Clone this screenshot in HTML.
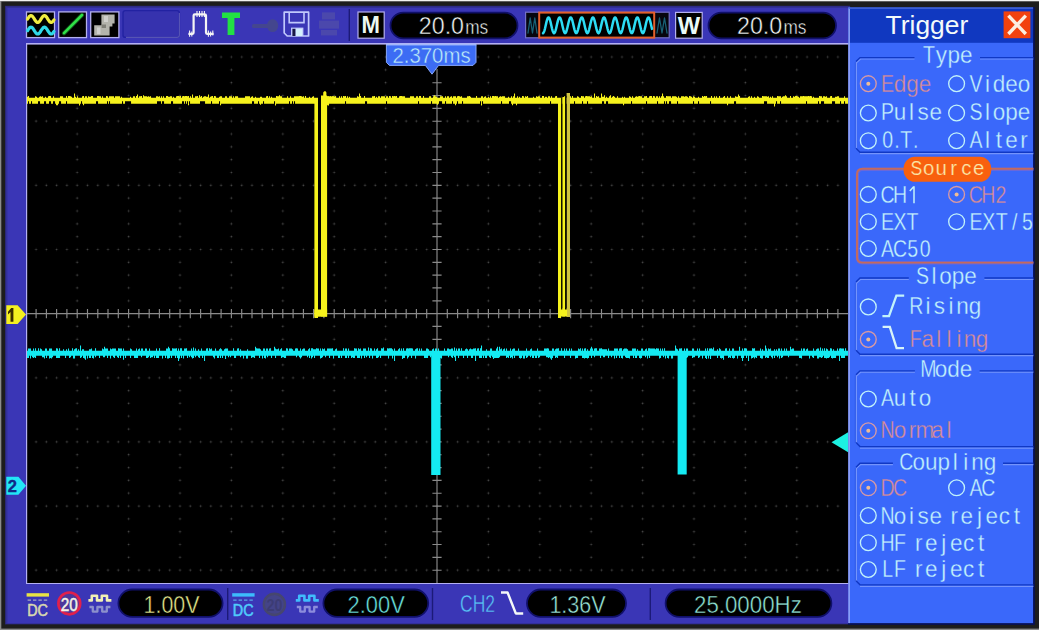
<!DOCTYPE html>
<html><head><meta charset="utf-8"><title>Oscilloscope</title>
<style>
html,body{margin:0;padding:0;background:#1d1d1d;}
body{width:1039px;height:630px;overflow:hidden;}
svg{display:block;}
text{font-family:"Liberation Sans",sans-serif;}
</style></head><body>
<svg width="1039" height="630" viewBox="0 0 1039 630">
<rect width="1039" height="630" fill="#1d1d1d"/>
<rect width="1039" height="1.3" fill="#f2f2f2"/>
<rect y="1" width="1.3" height="630" fill="#8c8c8c"/>
<rect y="628.6" width="1039" height="1.4" fill="#8a8a8a"/>
<rect x="5" y="5.8" width="845" height="618.6" fill="#2a2878"/>
<rect x="6.2" y="6.8" width="844" height="616.8" fill="#3a36b6"/>
<rect x="6.2" y="6.8" width="844" height="1.2" fill="#323098"/>
<rect x="6.2" y="6.8" width="1.2" height="616.8" fill="#323098"/>
<rect x="26" y="43" width="823" height="541" fill="#b4b0f4"/>
<rect x="27.2" y="44.6" width="821.4" height="538.4" fill="#000"/>
<path d="M34.4 57.0h3.4M36.1 55.3v3.4M44.7 57.0h3.4M46.4 55.3v3.4M54.9 57.0h3.4M56.6 55.3v3.4M65.2 57.0h3.4M66.9 55.3v3.4M75.5 57.0h3.4M77.2 55.3v3.4M85.8 57.0h3.4M87.5 55.3v3.4M96.1 57.0h3.4M97.8 55.3v3.4M106.3 57.0h3.4M108.0 55.3v3.4M116.6 57.0h3.4M118.3 55.3v3.4M126.9 57.0h3.4M128.6 55.3v3.4M137.2 57.0h3.4M138.9 55.3v3.4M147.5 57.0h3.4M149.2 55.3v3.4M157.7 57.0h3.4M159.4 55.3v3.4M168.0 57.0h3.4M169.7 55.3v3.4M178.3 57.0h3.4M180.0 55.3v3.4M188.6 57.0h3.4M190.3 55.3v3.4M198.9 57.0h3.4M200.6 55.3v3.4M209.1 57.0h3.4M210.8 55.3v3.4M219.4 57.0h3.4M221.1 55.3v3.4M229.7 57.0h3.4M231.4 55.3v3.4M240.0 57.0h3.4M241.7 55.3v3.4M250.3 57.0h3.4M252.0 55.3v3.4M260.5 57.0h3.4M262.2 55.3v3.4M270.8 57.0h3.4M272.5 55.3v3.4M281.1 57.0h3.4M282.8 55.3v3.4M291.4 57.0h3.4M293.1 55.3v3.4M301.7 57.0h3.4M303.4 55.3v3.4M311.9 57.0h3.4M313.6 55.3v3.4M322.2 57.0h3.4M323.9 55.3v3.4M332.5 57.0h3.4M334.2 55.3v3.4M342.8 57.0h3.4M344.5 55.3v3.4M353.1 57.0h3.4M354.8 55.3v3.4M363.3 57.0h3.4M365.0 55.3v3.4M373.6 57.0h3.4M375.3 55.3v3.4M383.9 57.0h3.4M385.6 55.3v3.4M394.2 57.0h3.4M395.9 55.3v3.4M404.5 57.0h3.4M406.2 55.3v3.4M414.7 57.0h3.4M416.4 55.3v3.4M425.0 57.0h3.4M426.7 55.3v3.4M435.3 57.0h3.4M437.0 55.3v3.4M445.6 57.0h3.4M447.3 55.3v3.4M455.9 57.0h3.4M457.6 55.3v3.4M466.1 57.0h3.4M467.8 55.3v3.4M476.4 57.0h3.4M478.1 55.3v3.4M486.7 57.0h3.4M488.4 55.3v3.4M497.0 57.0h3.4M498.7 55.3v3.4M507.3 57.0h3.4M509.0 55.3v3.4M517.5 57.0h3.4M519.2 55.3v3.4M527.8 57.0h3.4M529.5 55.3v3.4M538.1 57.0h3.4M539.8 55.3v3.4M548.4 57.0h3.4M550.1 55.3v3.4M558.7 57.0h3.4M560.4 55.3v3.4M568.9 57.0h3.4M570.6 55.3v3.4M579.2 57.0h3.4M580.9 55.3v3.4M589.5 57.0h3.4M591.2 55.3v3.4M599.8 57.0h3.4M601.5 55.3v3.4M610.1 57.0h3.4M611.8 55.3v3.4M620.3 57.0h3.4M622.0 55.3v3.4M630.6 57.0h3.4M632.3 55.3v3.4M640.9 57.0h3.4M642.6 55.3v3.4M651.2 57.0h3.4M652.9 55.3v3.4M661.5 57.0h3.4M663.2 55.3v3.4M671.7 57.0h3.4M673.4 55.3v3.4M682.0 57.0h3.4M683.7 55.3v3.4M692.3 57.0h3.4M694.0 55.3v3.4M702.6 57.0h3.4M704.3 55.3v3.4M712.9 57.0h3.4M714.6 55.3v3.4M723.1 57.0h3.4M724.8 55.3v3.4M733.4 57.0h3.4M735.1 55.3v3.4M743.7 57.0h3.4M745.4 55.3v3.4M754.0 57.0h3.4M755.7 55.3v3.4M764.3 57.0h3.4M766.0 55.3v3.4M774.5 57.0h3.4M776.2 55.3v3.4M784.8 57.0h3.4M786.5 55.3v3.4M795.1 57.0h3.4M796.8 55.3v3.4M805.4 57.0h3.4M807.1 55.3v3.4M815.7 57.0h3.4M817.4 55.3v3.4M825.9 57.0h3.4M827.6 55.3v3.4M836.2 57.0h3.4M837.9 55.3v3.4M34.4 121.2h3.4M36.1 119.5v3.4M44.7 121.2h3.4M46.4 119.5v3.4M54.9 121.2h3.4M56.6 119.5v3.4M65.2 121.2h3.4M66.9 119.5v3.4M75.5 121.2h3.4M77.2 119.5v3.4M85.8 121.2h3.4M87.5 119.5v3.4M96.1 121.2h3.4M97.8 119.5v3.4M106.3 121.2h3.4M108.0 119.5v3.4M116.6 121.2h3.4M118.3 119.5v3.4M126.9 121.2h3.4M128.6 119.5v3.4M137.2 121.2h3.4M138.9 119.5v3.4M147.5 121.2h3.4M149.2 119.5v3.4M157.7 121.2h3.4M159.4 119.5v3.4M168.0 121.2h3.4M169.7 119.5v3.4M178.3 121.2h3.4M180.0 119.5v3.4M188.6 121.2h3.4M190.3 119.5v3.4M198.9 121.2h3.4M200.6 119.5v3.4M209.1 121.2h3.4M210.8 119.5v3.4M219.4 121.2h3.4M221.1 119.5v3.4M229.7 121.2h3.4M231.4 119.5v3.4M240.0 121.2h3.4M241.7 119.5v3.4M250.3 121.2h3.4M252.0 119.5v3.4M260.5 121.2h3.4M262.2 119.5v3.4M270.8 121.2h3.4M272.5 119.5v3.4M281.1 121.2h3.4M282.8 119.5v3.4M291.4 121.2h3.4M293.1 119.5v3.4M301.7 121.2h3.4M303.4 119.5v3.4M311.9 121.2h3.4M313.6 119.5v3.4M322.2 121.2h3.4M323.9 119.5v3.4M332.5 121.2h3.4M334.2 119.5v3.4M342.8 121.2h3.4M344.5 119.5v3.4M353.1 121.2h3.4M354.8 119.5v3.4M363.3 121.2h3.4M365.0 119.5v3.4M373.6 121.2h3.4M375.3 119.5v3.4M383.9 121.2h3.4M385.6 119.5v3.4M394.2 121.2h3.4M395.9 119.5v3.4M404.5 121.2h3.4M406.2 119.5v3.4M414.7 121.2h3.4M416.4 119.5v3.4M425.0 121.2h3.4M426.7 119.5v3.4M435.3 121.2h3.4M437.0 119.5v3.4M445.6 121.2h3.4M447.3 119.5v3.4M455.9 121.2h3.4M457.6 119.5v3.4M466.1 121.2h3.4M467.8 119.5v3.4M476.4 121.2h3.4M478.1 119.5v3.4M486.7 121.2h3.4M488.4 119.5v3.4M497.0 121.2h3.4M498.7 119.5v3.4M507.3 121.2h3.4M509.0 119.5v3.4M517.5 121.2h3.4M519.2 119.5v3.4M527.8 121.2h3.4M529.5 119.5v3.4M538.1 121.2h3.4M539.8 119.5v3.4M548.4 121.2h3.4M550.1 119.5v3.4M558.7 121.2h3.4M560.4 119.5v3.4M568.9 121.2h3.4M570.6 119.5v3.4M579.2 121.2h3.4M580.9 119.5v3.4M589.5 121.2h3.4M591.2 119.5v3.4M599.8 121.2h3.4M601.5 119.5v3.4M610.1 121.2h3.4M611.8 119.5v3.4M620.3 121.2h3.4M622.0 119.5v3.4M630.6 121.2h3.4M632.3 119.5v3.4M640.9 121.2h3.4M642.6 119.5v3.4M651.2 121.2h3.4M652.9 119.5v3.4M661.5 121.2h3.4M663.2 119.5v3.4M671.7 121.2h3.4M673.4 119.5v3.4M682.0 121.2h3.4M683.7 119.5v3.4M692.3 121.2h3.4M694.0 119.5v3.4M702.6 121.2h3.4M704.3 119.5v3.4M712.9 121.2h3.4M714.6 119.5v3.4M723.1 121.2h3.4M724.8 119.5v3.4M733.4 121.2h3.4M735.1 119.5v3.4M743.7 121.2h3.4M745.4 119.5v3.4M754.0 121.2h3.4M755.7 119.5v3.4M764.3 121.2h3.4M766.0 119.5v3.4M774.5 121.2h3.4M776.2 119.5v3.4M784.8 121.2h3.4M786.5 119.5v3.4M795.1 121.2h3.4M796.8 119.5v3.4M805.4 121.2h3.4M807.1 119.5v3.4M815.7 121.2h3.4M817.4 119.5v3.4M825.9 121.2h3.4M827.6 119.5v3.4M836.2 121.2h3.4M837.9 119.5v3.4M34.4 185.3h3.4M36.1 183.6v3.4M44.7 185.3h3.4M46.4 183.6v3.4M54.9 185.3h3.4M56.6 183.6v3.4M65.2 185.3h3.4M66.9 183.6v3.4M75.5 185.3h3.4M77.2 183.6v3.4M85.8 185.3h3.4M87.5 183.6v3.4M96.1 185.3h3.4M97.8 183.6v3.4M106.3 185.3h3.4M108.0 183.6v3.4M116.6 185.3h3.4M118.3 183.6v3.4M126.9 185.3h3.4M128.6 183.6v3.4M137.2 185.3h3.4M138.9 183.6v3.4M147.5 185.3h3.4M149.2 183.6v3.4M157.7 185.3h3.4M159.4 183.6v3.4M168.0 185.3h3.4M169.7 183.6v3.4M178.3 185.3h3.4M180.0 183.6v3.4M188.6 185.3h3.4M190.3 183.6v3.4M198.9 185.3h3.4M200.6 183.6v3.4M209.1 185.3h3.4M210.8 183.6v3.4M219.4 185.3h3.4M221.1 183.6v3.4M229.7 185.3h3.4M231.4 183.6v3.4M240.0 185.3h3.4M241.7 183.6v3.4M250.3 185.3h3.4M252.0 183.6v3.4M260.5 185.3h3.4M262.2 183.6v3.4M270.8 185.3h3.4M272.5 183.6v3.4M281.1 185.3h3.4M282.8 183.6v3.4M291.4 185.3h3.4M293.1 183.6v3.4M301.7 185.3h3.4M303.4 183.6v3.4M311.9 185.3h3.4M313.6 183.6v3.4M322.2 185.3h3.4M323.9 183.6v3.4M332.5 185.3h3.4M334.2 183.6v3.4M342.8 185.3h3.4M344.5 183.6v3.4M353.1 185.3h3.4M354.8 183.6v3.4M363.3 185.3h3.4M365.0 183.6v3.4M373.6 185.3h3.4M375.3 183.6v3.4M383.9 185.3h3.4M385.6 183.6v3.4M394.2 185.3h3.4M395.9 183.6v3.4M404.5 185.3h3.4M406.2 183.6v3.4M414.7 185.3h3.4M416.4 183.6v3.4M425.0 185.3h3.4M426.7 183.6v3.4M435.3 185.3h3.4M437.0 183.6v3.4M445.6 185.3h3.4M447.3 183.6v3.4M455.9 185.3h3.4M457.6 183.6v3.4M466.1 185.3h3.4M467.8 183.6v3.4M476.4 185.3h3.4M478.1 183.6v3.4M486.7 185.3h3.4M488.4 183.6v3.4M497.0 185.3h3.4M498.7 183.6v3.4M507.3 185.3h3.4M509.0 183.6v3.4M517.5 185.3h3.4M519.2 183.6v3.4M527.8 185.3h3.4M529.5 183.6v3.4M538.1 185.3h3.4M539.8 183.6v3.4M548.4 185.3h3.4M550.1 183.6v3.4M558.7 185.3h3.4M560.4 183.6v3.4M568.9 185.3h3.4M570.6 183.6v3.4M579.2 185.3h3.4M580.9 183.6v3.4M589.5 185.3h3.4M591.2 183.6v3.4M599.8 185.3h3.4M601.5 183.6v3.4M610.1 185.3h3.4M611.8 183.6v3.4M620.3 185.3h3.4M622.0 183.6v3.4M630.6 185.3h3.4M632.3 183.6v3.4M640.9 185.3h3.4M642.6 183.6v3.4M651.2 185.3h3.4M652.9 183.6v3.4M661.5 185.3h3.4M663.2 183.6v3.4M671.7 185.3h3.4M673.4 183.6v3.4M682.0 185.3h3.4M683.7 183.6v3.4M692.3 185.3h3.4M694.0 183.6v3.4M702.6 185.3h3.4M704.3 183.6v3.4M712.9 185.3h3.4M714.6 183.6v3.4M723.1 185.3h3.4M724.8 183.6v3.4M733.4 185.3h3.4M735.1 183.6v3.4M743.7 185.3h3.4M745.4 183.6v3.4M754.0 185.3h3.4M755.7 183.6v3.4M764.3 185.3h3.4M766.0 183.6v3.4M774.5 185.3h3.4M776.2 183.6v3.4M784.8 185.3h3.4M786.5 183.6v3.4M795.1 185.3h3.4M796.8 183.6v3.4M805.4 185.3h3.4M807.1 183.6v3.4M815.7 185.3h3.4M817.4 183.6v3.4M825.9 185.3h3.4M827.6 183.6v3.4M836.2 185.3h3.4M837.9 183.6v3.4M34.4 249.5h3.4M36.1 247.8v3.4M44.7 249.5h3.4M46.4 247.8v3.4M54.9 249.5h3.4M56.6 247.8v3.4M65.2 249.5h3.4M66.9 247.8v3.4M75.5 249.5h3.4M77.2 247.8v3.4M85.8 249.5h3.4M87.5 247.8v3.4M96.1 249.5h3.4M97.8 247.8v3.4M106.3 249.5h3.4M108.0 247.8v3.4M116.6 249.5h3.4M118.3 247.8v3.4M126.9 249.5h3.4M128.6 247.8v3.4M137.2 249.5h3.4M138.9 247.8v3.4M147.5 249.5h3.4M149.2 247.8v3.4M157.7 249.5h3.4M159.4 247.8v3.4M168.0 249.5h3.4M169.7 247.8v3.4M178.3 249.5h3.4M180.0 247.8v3.4M188.6 249.5h3.4M190.3 247.8v3.4M198.9 249.5h3.4M200.6 247.8v3.4M209.1 249.5h3.4M210.8 247.8v3.4M219.4 249.5h3.4M221.1 247.8v3.4M229.7 249.5h3.4M231.4 247.8v3.4M240.0 249.5h3.4M241.7 247.8v3.4M250.3 249.5h3.4M252.0 247.8v3.4M260.5 249.5h3.4M262.2 247.8v3.4M270.8 249.5h3.4M272.5 247.8v3.4M281.1 249.5h3.4M282.8 247.8v3.4M291.4 249.5h3.4M293.1 247.8v3.4M301.7 249.5h3.4M303.4 247.8v3.4M311.9 249.5h3.4M313.6 247.8v3.4M322.2 249.5h3.4M323.9 247.8v3.4M332.5 249.5h3.4M334.2 247.8v3.4M342.8 249.5h3.4M344.5 247.8v3.4M353.1 249.5h3.4M354.8 247.8v3.4M363.3 249.5h3.4M365.0 247.8v3.4M373.6 249.5h3.4M375.3 247.8v3.4M383.9 249.5h3.4M385.6 247.8v3.4M394.2 249.5h3.4M395.9 247.8v3.4M404.5 249.5h3.4M406.2 247.8v3.4M414.7 249.5h3.4M416.4 247.8v3.4M425.0 249.5h3.4M426.7 247.8v3.4M435.3 249.5h3.4M437.0 247.8v3.4M445.6 249.5h3.4M447.3 247.8v3.4M455.9 249.5h3.4M457.6 247.8v3.4M466.1 249.5h3.4M467.8 247.8v3.4M476.4 249.5h3.4M478.1 247.8v3.4M486.7 249.5h3.4M488.4 247.8v3.4M497.0 249.5h3.4M498.7 247.8v3.4M507.3 249.5h3.4M509.0 247.8v3.4M517.5 249.5h3.4M519.2 247.8v3.4M527.8 249.5h3.4M529.5 247.8v3.4M538.1 249.5h3.4M539.8 247.8v3.4M548.4 249.5h3.4M550.1 247.8v3.4M558.7 249.5h3.4M560.4 247.8v3.4M568.9 249.5h3.4M570.6 247.8v3.4M579.2 249.5h3.4M580.9 247.8v3.4M589.5 249.5h3.4M591.2 247.8v3.4M599.8 249.5h3.4M601.5 247.8v3.4M610.1 249.5h3.4M611.8 247.8v3.4M620.3 249.5h3.4M622.0 247.8v3.4M630.6 249.5h3.4M632.3 247.8v3.4M640.9 249.5h3.4M642.6 247.8v3.4M651.2 249.5h3.4M652.9 247.8v3.4M661.5 249.5h3.4M663.2 247.8v3.4M671.7 249.5h3.4M673.4 247.8v3.4M682.0 249.5h3.4M683.7 247.8v3.4M692.3 249.5h3.4M694.0 247.8v3.4M702.6 249.5h3.4M704.3 247.8v3.4M712.9 249.5h3.4M714.6 247.8v3.4M723.1 249.5h3.4M724.8 247.8v3.4M733.4 249.5h3.4M735.1 247.8v3.4M743.7 249.5h3.4M745.4 247.8v3.4M754.0 249.5h3.4M755.7 247.8v3.4M764.3 249.5h3.4M766.0 247.8v3.4M774.5 249.5h3.4M776.2 247.8v3.4M784.8 249.5h3.4M786.5 247.8v3.4M795.1 249.5h3.4M796.8 247.8v3.4M805.4 249.5h3.4M807.1 247.8v3.4M815.7 249.5h3.4M817.4 247.8v3.4M825.9 249.5h3.4M827.6 247.8v3.4M836.2 249.5h3.4M837.9 247.8v3.4M34.4 377.8h3.4M36.1 376.1v3.4M44.7 377.8h3.4M46.4 376.1v3.4M54.9 377.8h3.4M56.6 376.1v3.4M65.2 377.8h3.4M66.9 376.1v3.4M75.5 377.8h3.4M77.2 376.1v3.4M85.8 377.8h3.4M87.5 376.1v3.4M96.1 377.8h3.4M97.8 376.1v3.4M106.3 377.8h3.4M108.0 376.1v3.4M116.6 377.8h3.4M118.3 376.1v3.4M126.9 377.8h3.4M128.6 376.1v3.4M137.2 377.8h3.4M138.9 376.1v3.4M147.5 377.8h3.4M149.2 376.1v3.4M157.7 377.8h3.4M159.4 376.1v3.4M168.0 377.8h3.4M169.7 376.1v3.4M178.3 377.8h3.4M180.0 376.1v3.4M188.6 377.8h3.4M190.3 376.1v3.4M198.9 377.8h3.4M200.6 376.1v3.4M209.1 377.8h3.4M210.8 376.1v3.4M219.4 377.8h3.4M221.1 376.1v3.4M229.7 377.8h3.4M231.4 376.1v3.4M240.0 377.8h3.4M241.7 376.1v3.4M250.3 377.8h3.4M252.0 376.1v3.4M260.5 377.8h3.4M262.2 376.1v3.4M270.8 377.8h3.4M272.5 376.1v3.4M281.1 377.8h3.4M282.8 376.1v3.4M291.4 377.8h3.4M293.1 376.1v3.4M301.7 377.8h3.4M303.4 376.1v3.4M311.9 377.8h3.4M313.6 376.1v3.4M322.2 377.8h3.4M323.9 376.1v3.4M332.5 377.8h3.4M334.2 376.1v3.4M342.8 377.8h3.4M344.5 376.1v3.4M353.1 377.8h3.4M354.8 376.1v3.4M363.3 377.8h3.4M365.0 376.1v3.4M373.6 377.8h3.4M375.3 376.1v3.4M383.9 377.8h3.4M385.6 376.1v3.4M394.2 377.8h3.4M395.9 376.1v3.4M404.5 377.8h3.4M406.2 376.1v3.4M414.7 377.8h3.4M416.4 376.1v3.4M425.0 377.8h3.4M426.7 376.1v3.4M435.3 377.8h3.4M437.0 376.1v3.4M445.6 377.8h3.4M447.3 376.1v3.4M455.9 377.8h3.4M457.6 376.1v3.4M466.1 377.8h3.4M467.8 376.1v3.4M476.4 377.8h3.4M478.1 376.1v3.4M486.7 377.8h3.4M488.4 376.1v3.4M497.0 377.8h3.4M498.7 376.1v3.4M507.3 377.8h3.4M509.0 376.1v3.4M517.5 377.8h3.4M519.2 376.1v3.4M527.8 377.8h3.4M529.5 376.1v3.4M538.1 377.8h3.4M539.8 376.1v3.4M548.4 377.8h3.4M550.1 376.1v3.4M558.7 377.8h3.4M560.4 376.1v3.4M568.9 377.8h3.4M570.6 376.1v3.4M579.2 377.8h3.4M580.9 376.1v3.4M589.5 377.8h3.4M591.2 376.1v3.4M599.8 377.8h3.4M601.5 376.1v3.4M610.1 377.8h3.4M611.8 376.1v3.4M620.3 377.8h3.4M622.0 376.1v3.4M630.6 377.8h3.4M632.3 376.1v3.4M640.9 377.8h3.4M642.6 376.1v3.4M651.2 377.8h3.4M652.9 376.1v3.4M661.5 377.8h3.4M663.2 376.1v3.4M671.7 377.8h3.4M673.4 376.1v3.4M682.0 377.8h3.4M683.7 376.1v3.4M692.3 377.8h3.4M694.0 376.1v3.4M702.6 377.8h3.4M704.3 376.1v3.4M712.9 377.8h3.4M714.6 376.1v3.4M723.1 377.8h3.4M724.8 376.1v3.4M733.4 377.8h3.4M735.1 376.1v3.4M743.7 377.8h3.4M745.4 376.1v3.4M754.0 377.8h3.4M755.7 376.1v3.4M764.3 377.8h3.4M766.0 376.1v3.4M774.5 377.8h3.4M776.2 376.1v3.4M784.8 377.8h3.4M786.5 376.1v3.4M795.1 377.8h3.4M796.8 376.1v3.4M805.4 377.8h3.4M807.1 376.1v3.4M815.7 377.8h3.4M817.4 376.1v3.4M825.9 377.8h3.4M827.6 376.1v3.4M836.2 377.8h3.4M837.9 376.1v3.4M34.4 441.9h3.4M36.1 440.2v3.4M44.7 441.9h3.4M46.4 440.2v3.4M54.9 441.9h3.4M56.6 440.2v3.4M65.2 441.9h3.4M66.9 440.2v3.4M75.5 441.9h3.4M77.2 440.2v3.4M85.8 441.9h3.4M87.5 440.2v3.4M96.1 441.9h3.4M97.8 440.2v3.4M106.3 441.9h3.4M108.0 440.2v3.4M116.6 441.9h3.4M118.3 440.2v3.4M126.9 441.9h3.4M128.6 440.2v3.4M137.2 441.9h3.4M138.9 440.2v3.4M147.5 441.9h3.4M149.2 440.2v3.4M157.7 441.9h3.4M159.4 440.2v3.4M168.0 441.9h3.4M169.7 440.2v3.4M178.3 441.9h3.4M180.0 440.2v3.4M188.6 441.9h3.4M190.3 440.2v3.4M198.9 441.9h3.4M200.6 440.2v3.4M209.1 441.9h3.4M210.8 440.2v3.4M219.4 441.9h3.4M221.1 440.2v3.4M229.7 441.9h3.4M231.4 440.2v3.4M240.0 441.9h3.4M241.7 440.2v3.4M250.3 441.9h3.4M252.0 440.2v3.4M260.5 441.9h3.4M262.2 440.2v3.4M270.8 441.9h3.4M272.5 440.2v3.4M281.1 441.9h3.4M282.8 440.2v3.4M291.4 441.9h3.4M293.1 440.2v3.4M301.7 441.9h3.4M303.4 440.2v3.4M311.9 441.9h3.4M313.6 440.2v3.4M322.2 441.9h3.4M323.9 440.2v3.4M332.5 441.9h3.4M334.2 440.2v3.4M342.8 441.9h3.4M344.5 440.2v3.4M353.1 441.9h3.4M354.8 440.2v3.4M363.3 441.9h3.4M365.0 440.2v3.4M373.6 441.9h3.4M375.3 440.2v3.4M383.9 441.9h3.4M385.6 440.2v3.4M394.2 441.9h3.4M395.9 440.2v3.4M404.5 441.9h3.4M406.2 440.2v3.4M414.7 441.9h3.4M416.4 440.2v3.4M425.0 441.9h3.4M426.7 440.2v3.4M435.3 441.9h3.4M437.0 440.2v3.4M445.6 441.9h3.4M447.3 440.2v3.4M455.9 441.9h3.4M457.6 440.2v3.4M466.1 441.9h3.4M467.8 440.2v3.4M476.4 441.9h3.4M478.1 440.2v3.4M486.7 441.9h3.4M488.4 440.2v3.4M497.0 441.9h3.4M498.7 440.2v3.4M507.3 441.9h3.4M509.0 440.2v3.4M517.5 441.9h3.4M519.2 440.2v3.4M527.8 441.9h3.4M529.5 440.2v3.4M538.1 441.9h3.4M539.8 440.2v3.4M548.4 441.9h3.4M550.1 440.2v3.4M558.7 441.9h3.4M560.4 440.2v3.4M568.9 441.9h3.4M570.6 440.2v3.4M579.2 441.9h3.4M580.9 440.2v3.4M589.5 441.9h3.4M591.2 440.2v3.4M599.8 441.9h3.4M601.5 440.2v3.4M610.1 441.9h3.4M611.8 440.2v3.4M620.3 441.9h3.4M622.0 440.2v3.4M630.6 441.9h3.4M632.3 440.2v3.4M640.9 441.9h3.4M642.6 440.2v3.4M651.2 441.9h3.4M652.9 440.2v3.4M661.5 441.9h3.4M663.2 440.2v3.4M671.7 441.9h3.4M673.4 440.2v3.4M682.0 441.9h3.4M683.7 440.2v3.4M692.3 441.9h3.4M694.0 440.2v3.4M702.6 441.9h3.4M704.3 440.2v3.4M712.9 441.9h3.4M714.6 440.2v3.4M723.1 441.9h3.4M724.8 440.2v3.4M733.4 441.9h3.4M735.1 440.2v3.4M743.7 441.9h3.4M745.4 440.2v3.4M754.0 441.9h3.4M755.7 440.2v3.4M764.3 441.9h3.4M766.0 440.2v3.4M774.5 441.9h3.4M776.2 440.2v3.4M784.8 441.9h3.4M786.5 440.2v3.4M795.1 441.9h3.4M796.8 440.2v3.4M805.4 441.9h3.4M807.1 440.2v3.4M815.7 441.9h3.4M817.4 440.2v3.4M825.9 441.9h3.4M827.6 440.2v3.4M836.2 441.9h3.4M837.9 440.2v3.4M34.4 506.1h3.4M36.1 504.4v3.4M44.7 506.1h3.4M46.4 504.4v3.4M54.9 506.1h3.4M56.6 504.4v3.4M65.2 506.1h3.4M66.9 504.4v3.4M75.5 506.1h3.4M77.2 504.4v3.4M85.8 506.1h3.4M87.5 504.4v3.4M96.1 506.1h3.4M97.8 504.4v3.4M106.3 506.1h3.4M108.0 504.4v3.4M116.6 506.1h3.4M118.3 504.4v3.4M126.9 506.1h3.4M128.6 504.4v3.4M137.2 506.1h3.4M138.9 504.4v3.4M147.5 506.1h3.4M149.2 504.4v3.4M157.7 506.1h3.4M159.4 504.4v3.4M168.0 506.1h3.4M169.7 504.4v3.4M178.3 506.1h3.4M180.0 504.4v3.4M188.6 506.1h3.4M190.3 504.4v3.4M198.9 506.1h3.4M200.6 504.4v3.4M209.1 506.1h3.4M210.8 504.4v3.4M219.4 506.1h3.4M221.1 504.4v3.4M229.7 506.1h3.4M231.4 504.4v3.4M240.0 506.1h3.4M241.7 504.4v3.4M250.3 506.1h3.4M252.0 504.4v3.4M260.5 506.1h3.4M262.2 504.4v3.4M270.8 506.1h3.4M272.5 504.4v3.4M281.1 506.1h3.4M282.8 504.4v3.4M291.4 506.1h3.4M293.1 504.4v3.4M301.7 506.1h3.4M303.4 504.4v3.4M311.9 506.1h3.4M313.6 504.4v3.4M322.2 506.1h3.4M323.9 504.4v3.4M332.5 506.1h3.4M334.2 504.4v3.4M342.8 506.1h3.4M344.5 504.4v3.4M353.1 506.1h3.4M354.8 504.4v3.4M363.3 506.1h3.4M365.0 504.4v3.4M373.6 506.1h3.4M375.3 504.4v3.4M383.9 506.1h3.4M385.6 504.4v3.4M394.2 506.1h3.4M395.9 504.4v3.4M404.5 506.1h3.4M406.2 504.4v3.4M414.7 506.1h3.4M416.4 504.4v3.4M425.0 506.1h3.4M426.7 504.4v3.4M435.3 506.1h3.4M437.0 504.4v3.4M445.6 506.1h3.4M447.3 504.4v3.4M455.9 506.1h3.4M457.6 504.4v3.4M466.1 506.1h3.4M467.8 504.4v3.4M476.4 506.1h3.4M478.1 504.4v3.4M486.7 506.1h3.4M488.4 504.4v3.4M497.0 506.1h3.4M498.7 504.4v3.4M507.3 506.1h3.4M509.0 504.4v3.4M517.5 506.1h3.4M519.2 504.4v3.4M527.8 506.1h3.4M529.5 504.4v3.4M538.1 506.1h3.4M539.8 504.4v3.4M548.4 506.1h3.4M550.1 504.4v3.4M558.7 506.1h3.4M560.4 504.4v3.4M568.9 506.1h3.4M570.6 504.4v3.4M579.2 506.1h3.4M580.9 504.4v3.4M589.5 506.1h3.4M591.2 504.4v3.4M599.8 506.1h3.4M601.5 504.4v3.4M610.1 506.1h3.4M611.8 504.4v3.4M620.3 506.1h3.4M622.0 504.4v3.4M630.6 506.1h3.4M632.3 504.4v3.4M640.9 506.1h3.4M642.6 504.4v3.4M651.2 506.1h3.4M652.9 504.4v3.4M661.5 506.1h3.4M663.2 504.4v3.4M671.7 506.1h3.4M673.4 504.4v3.4M682.0 506.1h3.4M683.7 504.4v3.4M692.3 506.1h3.4M694.0 504.4v3.4M702.6 506.1h3.4M704.3 504.4v3.4M712.9 506.1h3.4M714.6 504.4v3.4M723.1 506.1h3.4M724.8 504.4v3.4M733.4 506.1h3.4M735.1 504.4v3.4M743.7 506.1h3.4M745.4 504.4v3.4M754.0 506.1h3.4M755.7 504.4v3.4M764.3 506.1h3.4M766.0 504.4v3.4M774.5 506.1h3.4M776.2 504.4v3.4M784.8 506.1h3.4M786.5 504.4v3.4M795.1 506.1h3.4M796.8 504.4v3.4M805.4 506.1h3.4M807.1 504.4v3.4M815.7 506.1h3.4M817.4 504.4v3.4M825.9 506.1h3.4M827.6 504.4v3.4M836.2 506.1h3.4M837.9 504.4v3.4M34.4 570.2h3.4M36.1 568.5v3.4M44.7 570.2h3.4M46.4 568.5v3.4M54.9 570.2h3.4M56.6 568.5v3.4M65.2 570.2h3.4M66.9 568.5v3.4M75.5 570.2h3.4M77.2 568.5v3.4M85.8 570.2h3.4M87.5 568.5v3.4M96.1 570.2h3.4M97.8 568.5v3.4M106.3 570.2h3.4M108.0 568.5v3.4M116.6 570.2h3.4M118.3 568.5v3.4M126.9 570.2h3.4M128.6 568.5v3.4M137.2 570.2h3.4M138.9 568.5v3.4M147.5 570.2h3.4M149.2 568.5v3.4M157.7 570.2h3.4M159.4 568.5v3.4M168.0 570.2h3.4M169.7 568.5v3.4M178.3 570.2h3.4M180.0 568.5v3.4M188.6 570.2h3.4M190.3 568.5v3.4M198.9 570.2h3.4M200.6 568.5v3.4M209.1 570.2h3.4M210.8 568.5v3.4M219.4 570.2h3.4M221.1 568.5v3.4M229.7 570.2h3.4M231.4 568.5v3.4M240.0 570.2h3.4M241.7 568.5v3.4M250.3 570.2h3.4M252.0 568.5v3.4M260.5 570.2h3.4M262.2 568.5v3.4M270.8 570.2h3.4M272.5 568.5v3.4M281.1 570.2h3.4M282.8 568.5v3.4M291.4 570.2h3.4M293.1 568.5v3.4M301.7 570.2h3.4M303.4 568.5v3.4M311.9 570.2h3.4M313.6 568.5v3.4M322.2 570.2h3.4M323.9 568.5v3.4M332.5 570.2h3.4M334.2 568.5v3.4M342.8 570.2h3.4M344.5 568.5v3.4M353.1 570.2h3.4M354.8 568.5v3.4M363.3 570.2h3.4M365.0 568.5v3.4M373.6 570.2h3.4M375.3 568.5v3.4M383.9 570.2h3.4M385.6 568.5v3.4M394.2 570.2h3.4M395.9 568.5v3.4M404.5 570.2h3.4M406.2 568.5v3.4M414.7 570.2h3.4M416.4 568.5v3.4M425.0 570.2h3.4M426.7 568.5v3.4M435.3 570.2h3.4M437.0 568.5v3.4M445.6 570.2h3.4M447.3 568.5v3.4M455.9 570.2h3.4M457.6 568.5v3.4M466.1 570.2h3.4M467.8 568.5v3.4M476.4 570.2h3.4M478.1 568.5v3.4M486.7 570.2h3.4M488.4 568.5v3.4M497.0 570.2h3.4M498.7 568.5v3.4M507.3 570.2h3.4M509.0 568.5v3.4M517.5 570.2h3.4M519.2 568.5v3.4M527.8 570.2h3.4M529.5 568.5v3.4M538.1 570.2h3.4M539.8 568.5v3.4M548.4 570.2h3.4M550.1 568.5v3.4M558.7 570.2h3.4M560.4 568.5v3.4M568.9 570.2h3.4M570.6 568.5v3.4M579.2 570.2h3.4M580.9 568.5v3.4M589.5 570.2h3.4M591.2 568.5v3.4M599.8 570.2h3.4M601.5 568.5v3.4M610.1 570.2h3.4M611.8 568.5v3.4M620.3 570.2h3.4M622.0 568.5v3.4M630.6 570.2h3.4M632.3 568.5v3.4M640.9 570.2h3.4M642.6 568.5v3.4M651.2 570.2h3.4M652.9 568.5v3.4M661.5 570.2h3.4M663.2 568.5v3.4M671.7 570.2h3.4M673.4 568.5v3.4M682.0 570.2h3.4M683.7 568.5v3.4M692.3 570.2h3.4M694.0 568.5v3.4M702.6 570.2h3.4M704.3 568.5v3.4M712.9 570.2h3.4M714.6 568.5v3.4M723.1 570.2h3.4M724.8 568.5v3.4M733.4 570.2h3.4M735.1 568.5v3.4M743.7 570.2h3.4M745.4 568.5v3.4M754.0 570.2h3.4M755.7 568.5v3.4M764.3 570.2h3.4M766.0 568.5v3.4M774.5 570.2h3.4M776.2 568.5v3.4M784.8 570.2h3.4M786.5 568.5v3.4M795.1 570.2h3.4M796.8 568.5v3.4M805.4 570.2h3.4M807.1 568.5v3.4M815.7 570.2h3.4M817.4 568.5v3.4M825.9 570.2h3.4M827.6 568.5v3.4M836.2 570.2h3.4M837.9 568.5v3.4M75.5 69.8h3.4M77.2 68.1v3.4M75.5 82.7h3.4M77.2 81.0v3.4M75.5 95.5h3.4M77.2 93.8v3.4M75.5 108.3h3.4M77.2 106.6v3.4M75.5 134.0h3.4M77.2 132.3v3.4M75.5 146.8h3.4M77.2 145.1v3.4M75.5 159.6h3.4M77.2 157.9v3.4M75.5 172.5h3.4M77.2 170.8v3.4M75.5 198.1h3.4M77.2 196.4v3.4M75.5 211.0h3.4M77.2 209.3v3.4M75.5 223.8h3.4M77.2 222.1v3.4M75.5 236.6h3.4M77.2 234.9v3.4M75.5 262.3h3.4M77.2 260.6v3.4M75.5 275.1h3.4M77.2 273.4v3.4M75.5 287.9h3.4M77.2 286.2v3.4M75.5 300.8h3.4M77.2 299.1v3.4M75.5 326.4h3.4M77.2 324.7v3.4M75.5 339.3h3.4M77.2 337.6v3.4M75.5 352.1h3.4M77.2 350.4v3.4M75.5 364.9h3.4M77.2 363.2v3.4M75.5 390.6h3.4M77.2 388.9v3.4M75.5 403.4h3.4M77.2 401.7v3.4M75.5 416.2h3.4M77.2 414.5v3.4M75.5 429.1h3.4M77.2 427.4v3.4M75.5 454.7h3.4M77.2 453.0v3.4M75.5 467.6h3.4M77.2 465.9v3.4M75.5 480.4h3.4M77.2 478.7v3.4M75.5 493.2h3.4M77.2 491.5v3.4M75.5 518.9h3.4M77.2 517.2v3.4M75.5 531.7h3.4M77.2 530.0v3.4M75.5 544.5h3.4M77.2 542.8v3.4M75.5 557.4h3.4M77.2 555.7v3.4M126.9 69.8h3.4M128.6 68.1v3.4M126.9 82.7h3.4M128.6 81.0v3.4M126.9 95.5h3.4M128.6 93.8v3.4M126.9 108.3h3.4M128.6 106.6v3.4M126.9 134.0h3.4M128.6 132.3v3.4M126.9 146.8h3.4M128.6 145.1v3.4M126.9 159.6h3.4M128.6 157.9v3.4M126.9 172.5h3.4M128.6 170.8v3.4M126.9 198.1h3.4M128.6 196.4v3.4M126.9 211.0h3.4M128.6 209.3v3.4M126.9 223.8h3.4M128.6 222.1v3.4M126.9 236.6h3.4M128.6 234.9v3.4M126.9 262.3h3.4M128.6 260.6v3.4M126.9 275.1h3.4M128.6 273.4v3.4M126.9 287.9h3.4M128.6 286.2v3.4M126.9 300.8h3.4M128.6 299.1v3.4M126.9 326.4h3.4M128.6 324.7v3.4M126.9 339.3h3.4M128.6 337.6v3.4M126.9 352.1h3.4M128.6 350.4v3.4M126.9 364.9h3.4M128.6 363.2v3.4M126.9 390.6h3.4M128.6 388.9v3.4M126.9 403.4h3.4M128.6 401.7v3.4M126.9 416.2h3.4M128.6 414.5v3.4M126.9 429.1h3.4M128.6 427.4v3.4M126.9 454.7h3.4M128.6 453.0v3.4M126.9 467.6h3.4M128.6 465.9v3.4M126.9 480.4h3.4M128.6 478.7v3.4M126.9 493.2h3.4M128.6 491.5v3.4M126.9 518.9h3.4M128.6 517.2v3.4M126.9 531.7h3.4M128.6 530.0v3.4M126.9 544.5h3.4M128.6 542.8v3.4M126.9 557.4h3.4M128.6 555.7v3.4M178.3 69.8h3.4M180.0 68.1v3.4M178.3 82.7h3.4M180.0 81.0v3.4M178.3 95.5h3.4M180.0 93.8v3.4M178.3 108.3h3.4M180.0 106.6v3.4M178.3 134.0h3.4M180.0 132.3v3.4M178.3 146.8h3.4M180.0 145.1v3.4M178.3 159.6h3.4M180.0 157.9v3.4M178.3 172.5h3.4M180.0 170.8v3.4M178.3 198.1h3.4M180.0 196.4v3.4M178.3 211.0h3.4M180.0 209.3v3.4M178.3 223.8h3.4M180.0 222.1v3.4M178.3 236.6h3.4M180.0 234.9v3.4M178.3 262.3h3.4M180.0 260.6v3.4M178.3 275.1h3.4M180.0 273.4v3.4M178.3 287.9h3.4M180.0 286.2v3.4M178.3 300.8h3.4M180.0 299.1v3.4M178.3 326.4h3.4M180.0 324.7v3.4M178.3 339.3h3.4M180.0 337.6v3.4M178.3 352.1h3.4M180.0 350.4v3.4M178.3 364.9h3.4M180.0 363.2v3.4M178.3 390.6h3.4M180.0 388.9v3.4M178.3 403.4h3.4M180.0 401.7v3.4M178.3 416.2h3.4M180.0 414.5v3.4M178.3 429.1h3.4M180.0 427.4v3.4M178.3 454.7h3.4M180.0 453.0v3.4M178.3 467.6h3.4M180.0 465.9v3.4M178.3 480.4h3.4M180.0 478.7v3.4M178.3 493.2h3.4M180.0 491.5v3.4M178.3 518.9h3.4M180.0 517.2v3.4M178.3 531.7h3.4M180.0 530.0v3.4M178.3 544.5h3.4M180.0 542.8v3.4M178.3 557.4h3.4M180.0 555.7v3.4M229.7 69.8h3.4M231.4 68.1v3.4M229.7 82.7h3.4M231.4 81.0v3.4M229.7 95.5h3.4M231.4 93.8v3.4M229.7 108.3h3.4M231.4 106.6v3.4M229.7 134.0h3.4M231.4 132.3v3.4M229.7 146.8h3.4M231.4 145.1v3.4M229.7 159.6h3.4M231.4 157.9v3.4M229.7 172.5h3.4M231.4 170.8v3.4M229.7 198.1h3.4M231.4 196.4v3.4M229.7 211.0h3.4M231.4 209.3v3.4M229.7 223.8h3.4M231.4 222.1v3.4M229.7 236.6h3.4M231.4 234.9v3.4M229.7 262.3h3.4M231.4 260.6v3.4M229.7 275.1h3.4M231.4 273.4v3.4M229.7 287.9h3.4M231.4 286.2v3.4M229.7 300.8h3.4M231.4 299.1v3.4M229.7 326.4h3.4M231.4 324.7v3.4M229.7 339.3h3.4M231.4 337.6v3.4M229.7 352.1h3.4M231.4 350.4v3.4M229.7 364.9h3.4M231.4 363.2v3.4M229.7 390.6h3.4M231.4 388.9v3.4M229.7 403.4h3.4M231.4 401.7v3.4M229.7 416.2h3.4M231.4 414.5v3.4M229.7 429.1h3.4M231.4 427.4v3.4M229.7 454.7h3.4M231.4 453.0v3.4M229.7 467.6h3.4M231.4 465.9v3.4M229.7 480.4h3.4M231.4 478.7v3.4M229.7 493.2h3.4M231.4 491.5v3.4M229.7 518.9h3.4M231.4 517.2v3.4M229.7 531.7h3.4M231.4 530.0v3.4M229.7 544.5h3.4M231.4 542.8v3.4M229.7 557.4h3.4M231.4 555.7v3.4M281.1 69.8h3.4M282.8 68.1v3.4M281.1 82.7h3.4M282.8 81.0v3.4M281.1 95.5h3.4M282.8 93.8v3.4M281.1 108.3h3.4M282.8 106.6v3.4M281.1 134.0h3.4M282.8 132.3v3.4M281.1 146.8h3.4M282.8 145.1v3.4M281.1 159.6h3.4M282.8 157.9v3.4M281.1 172.5h3.4M282.8 170.8v3.4M281.1 198.1h3.4M282.8 196.4v3.4M281.1 211.0h3.4M282.8 209.3v3.4M281.1 223.8h3.4M282.8 222.1v3.4M281.1 236.6h3.4M282.8 234.9v3.4M281.1 262.3h3.4M282.8 260.6v3.4M281.1 275.1h3.4M282.8 273.4v3.4M281.1 287.9h3.4M282.8 286.2v3.4M281.1 300.8h3.4M282.8 299.1v3.4M281.1 326.4h3.4M282.8 324.7v3.4M281.1 339.3h3.4M282.8 337.6v3.4M281.1 352.1h3.4M282.8 350.4v3.4M281.1 364.9h3.4M282.8 363.2v3.4M281.1 390.6h3.4M282.8 388.9v3.4M281.1 403.4h3.4M282.8 401.7v3.4M281.1 416.2h3.4M282.8 414.5v3.4M281.1 429.1h3.4M282.8 427.4v3.4M281.1 454.7h3.4M282.8 453.0v3.4M281.1 467.6h3.4M282.8 465.9v3.4M281.1 480.4h3.4M282.8 478.7v3.4M281.1 493.2h3.4M282.8 491.5v3.4M281.1 518.9h3.4M282.8 517.2v3.4M281.1 531.7h3.4M282.8 530.0v3.4M281.1 544.5h3.4M282.8 542.8v3.4M281.1 557.4h3.4M282.8 555.7v3.4M332.5 69.8h3.4M334.2 68.1v3.4M332.5 82.7h3.4M334.2 81.0v3.4M332.5 95.5h3.4M334.2 93.8v3.4M332.5 108.3h3.4M334.2 106.6v3.4M332.5 134.0h3.4M334.2 132.3v3.4M332.5 146.8h3.4M334.2 145.1v3.4M332.5 159.6h3.4M334.2 157.9v3.4M332.5 172.5h3.4M334.2 170.8v3.4M332.5 198.1h3.4M334.2 196.4v3.4M332.5 211.0h3.4M334.2 209.3v3.4M332.5 223.8h3.4M334.2 222.1v3.4M332.5 236.6h3.4M334.2 234.9v3.4M332.5 262.3h3.4M334.2 260.6v3.4M332.5 275.1h3.4M334.2 273.4v3.4M332.5 287.9h3.4M334.2 286.2v3.4M332.5 300.8h3.4M334.2 299.1v3.4M332.5 326.4h3.4M334.2 324.7v3.4M332.5 339.3h3.4M334.2 337.6v3.4M332.5 352.1h3.4M334.2 350.4v3.4M332.5 364.9h3.4M334.2 363.2v3.4M332.5 390.6h3.4M334.2 388.9v3.4M332.5 403.4h3.4M334.2 401.7v3.4M332.5 416.2h3.4M334.2 414.5v3.4M332.5 429.1h3.4M334.2 427.4v3.4M332.5 454.7h3.4M334.2 453.0v3.4M332.5 467.6h3.4M334.2 465.9v3.4M332.5 480.4h3.4M334.2 478.7v3.4M332.5 493.2h3.4M334.2 491.5v3.4M332.5 518.9h3.4M334.2 517.2v3.4M332.5 531.7h3.4M334.2 530.0v3.4M332.5 544.5h3.4M334.2 542.8v3.4M332.5 557.4h3.4M334.2 555.7v3.4M383.9 69.8h3.4M385.6 68.1v3.4M383.9 82.7h3.4M385.6 81.0v3.4M383.9 95.5h3.4M385.6 93.8v3.4M383.9 108.3h3.4M385.6 106.6v3.4M383.9 134.0h3.4M385.6 132.3v3.4M383.9 146.8h3.4M385.6 145.1v3.4M383.9 159.6h3.4M385.6 157.9v3.4M383.9 172.5h3.4M385.6 170.8v3.4M383.9 198.1h3.4M385.6 196.4v3.4M383.9 211.0h3.4M385.6 209.3v3.4M383.9 223.8h3.4M385.6 222.1v3.4M383.9 236.6h3.4M385.6 234.9v3.4M383.9 262.3h3.4M385.6 260.6v3.4M383.9 275.1h3.4M385.6 273.4v3.4M383.9 287.9h3.4M385.6 286.2v3.4M383.9 300.8h3.4M385.6 299.1v3.4M383.9 326.4h3.4M385.6 324.7v3.4M383.9 339.3h3.4M385.6 337.6v3.4M383.9 352.1h3.4M385.6 350.4v3.4M383.9 364.9h3.4M385.6 363.2v3.4M383.9 390.6h3.4M385.6 388.9v3.4M383.9 403.4h3.4M385.6 401.7v3.4M383.9 416.2h3.4M385.6 414.5v3.4M383.9 429.1h3.4M385.6 427.4v3.4M383.9 454.7h3.4M385.6 453.0v3.4M383.9 467.6h3.4M385.6 465.9v3.4M383.9 480.4h3.4M385.6 478.7v3.4M383.9 493.2h3.4M385.6 491.5v3.4M383.9 518.9h3.4M385.6 517.2v3.4M383.9 531.7h3.4M385.6 530.0v3.4M383.9 544.5h3.4M385.6 542.8v3.4M383.9 557.4h3.4M385.6 555.7v3.4M486.7 69.8h3.4M488.4 68.1v3.4M486.7 82.7h3.4M488.4 81.0v3.4M486.7 95.5h3.4M488.4 93.8v3.4M486.7 108.3h3.4M488.4 106.6v3.4M486.7 134.0h3.4M488.4 132.3v3.4M486.7 146.8h3.4M488.4 145.1v3.4M486.7 159.6h3.4M488.4 157.9v3.4M486.7 172.5h3.4M488.4 170.8v3.4M486.7 198.1h3.4M488.4 196.4v3.4M486.7 211.0h3.4M488.4 209.3v3.4M486.7 223.8h3.4M488.4 222.1v3.4M486.7 236.6h3.4M488.4 234.9v3.4M486.7 262.3h3.4M488.4 260.6v3.4M486.7 275.1h3.4M488.4 273.4v3.4M486.7 287.9h3.4M488.4 286.2v3.4M486.7 300.8h3.4M488.4 299.1v3.4M486.7 326.4h3.4M488.4 324.7v3.4M486.7 339.3h3.4M488.4 337.6v3.4M486.7 352.1h3.4M488.4 350.4v3.4M486.7 364.9h3.4M488.4 363.2v3.4M486.7 390.6h3.4M488.4 388.9v3.4M486.7 403.4h3.4M488.4 401.7v3.4M486.7 416.2h3.4M488.4 414.5v3.4M486.7 429.1h3.4M488.4 427.4v3.4M486.7 454.7h3.4M488.4 453.0v3.4M486.7 467.6h3.4M488.4 465.9v3.4M486.7 480.4h3.4M488.4 478.7v3.4M486.7 493.2h3.4M488.4 491.5v3.4M486.7 518.9h3.4M488.4 517.2v3.4M486.7 531.7h3.4M488.4 530.0v3.4M486.7 544.5h3.4M488.4 542.8v3.4M486.7 557.4h3.4M488.4 555.7v3.4M538.1 69.8h3.4M539.8 68.1v3.4M538.1 82.7h3.4M539.8 81.0v3.4M538.1 95.5h3.4M539.8 93.8v3.4M538.1 108.3h3.4M539.8 106.6v3.4M538.1 134.0h3.4M539.8 132.3v3.4M538.1 146.8h3.4M539.8 145.1v3.4M538.1 159.6h3.4M539.8 157.9v3.4M538.1 172.5h3.4M539.8 170.8v3.4M538.1 198.1h3.4M539.8 196.4v3.4M538.1 211.0h3.4M539.8 209.3v3.4M538.1 223.8h3.4M539.8 222.1v3.4M538.1 236.6h3.4M539.8 234.9v3.4M538.1 262.3h3.4M539.8 260.6v3.4M538.1 275.1h3.4M539.8 273.4v3.4M538.1 287.9h3.4M539.8 286.2v3.4M538.1 300.8h3.4M539.8 299.1v3.4M538.1 326.4h3.4M539.8 324.7v3.4M538.1 339.3h3.4M539.8 337.6v3.4M538.1 352.1h3.4M539.8 350.4v3.4M538.1 364.9h3.4M539.8 363.2v3.4M538.1 390.6h3.4M539.8 388.9v3.4M538.1 403.4h3.4M539.8 401.7v3.4M538.1 416.2h3.4M539.8 414.5v3.4M538.1 429.1h3.4M539.8 427.4v3.4M538.1 454.7h3.4M539.8 453.0v3.4M538.1 467.6h3.4M539.8 465.9v3.4M538.1 480.4h3.4M539.8 478.7v3.4M538.1 493.2h3.4M539.8 491.5v3.4M538.1 518.9h3.4M539.8 517.2v3.4M538.1 531.7h3.4M539.8 530.0v3.4M538.1 544.5h3.4M539.8 542.8v3.4M538.1 557.4h3.4M539.8 555.7v3.4M589.5 69.8h3.4M591.2 68.1v3.4M589.5 82.7h3.4M591.2 81.0v3.4M589.5 95.5h3.4M591.2 93.8v3.4M589.5 108.3h3.4M591.2 106.6v3.4M589.5 134.0h3.4M591.2 132.3v3.4M589.5 146.8h3.4M591.2 145.1v3.4M589.5 159.6h3.4M591.2 157.9v3.4M589.5 172.5h3.4M591.2 170.8v3.4M589.5 198.1h3.4M591.2 196.4v3.4M589.5 211.0h3.4M591.2 209.3v3.4M589.5 223.8h3.4M591.2 222.1v3.4M589.5 236.6h3.4M591.2 234.9v3.4M589.5 262.3h3.4M591.2 260.6v3.4M589.5 275.1h3.4M591.2 273.4v3.4M589.5 287.9h3.4M591.2 286.2v3.4M589.5 300.8h3.4M591.2 299.1v3.4M589.5 326.4h3.4M591.2 324.7v3.4M589.5 339.3h3.4M591.2 337.6v3.4M589.5 352.1h3.4M591.2 350.4v3.4M589.5 364.9h3.4M591.2 363.2v3.4M589.5 390.6h3.4M591.2 388.9v3.4M589.5 403.4h3.4M591.2 401.7v3.4M589.5 416.2h3.4M591.2 414.5v3.4M589.5 429.1h3.4M591.2 427.4v3.4M589.5 454.7h3.4M591.2 453.0v3.4M589.5 467.6h3.4M591.2 465.9v3.4M589.5 480.4h3.4M591.2 478.7v3.4M589.5 493.2h3.4M591.2 491.5v3.4M589.5 518.9h3.4M591.2 517.2v3.4M589.5 531.7h3.4M591.2 530.0v3.4M589.5 544.5h3.4M591.2 542.8v3.4M589.5 557.4h3.4M591.2 555.7v3.4M640.9 69.8h3.4M642.6 68.1v3.4M640.9 82.7h3.4M642.6 81.0v3.4M640.9 95.5h3.4M642.6 93.8v3.4M640.9 108.3h3.4M642.6 106.6v3.4M640.9 134.0h3.4M642.6 132.3v3.4M640.9 146.8h3.4M642.6 145.1v3.4M640.9 159.6h3.4M642.6 157.9v3.4M640.9 172.5h3.4M642.6 170.8v3.4M640.9 198.1h3.4M642.6 196.4v3.4M640.9 211.0h3.4M642.6 209.3v3.4M640.9 223.8h3.4M642.6 222.1v3.4M640.9 236.6h3.4M642.6 234.9v3.4M640.9 262.3h3.4M642.6 260.6v3.4M640.9 275.1h3.4M642.6 273.4v3.4M640.9 287.9h3.4M642.6 286.2v3.4M640.9 300.8h3.4M642.6 299.1v3.4M640.9 326.4h3.4M642.6 324.7v3.4M640.9 339.3h3.4M642.6 337.6v3.4M640.9 352.1h3.4M642.6 350.4v3.4M640.9 364.9h3.4M642.6 363.2v3.4M640.9 390.6h3.4M642.6 388.9v3.4M640.9 403.4h3.4M642.6 401.7v3.4M640.9 416.2h3.4M642.6 414.5v3.4M640.9 429.1h3.4M642.6 427.4v3.4M640.9 454.7h3.4M642.6 453.0v3.4M640.9 467.6h3.4M642.6 465.9v3.4M640.9 480.4h3.4M642.6 478.7v3.4M640.9 493.2h3.4M642.6 491.5v3.4M640.9 518.9h3.4M642.6 517.2v3.4M640.9 531.7h3.4M642.6 530.0v3.4M640.9 544.5h3.4M642.6 542.8v3.4M640.9 557.4h3.4M642.6 555.7v3.4M692.3 69.8h3.4M694.0 68.1v3.4M692.3 82.7h3.4M694.0 81.0v3.4M692.3 95.5h3.4M694.0 93.8v3.4M692.3 108.3h3.4M694.0 106.6v3.4M692.3 134.0h3.4M694.0 132.3v3.4M692.3 146.8h3.4M694.0 145.1v3.4M692.3 159.6h3.4M694.0 157.9v3.4M692.3 172.5h3.4M694.0 170.8v3.4M692.3 198.1h3.4M694.0 196.4v3.4M692.3 211.0h3.4M694.0 209.3v3.4M692.3 223.8h3.4M694.0 222.1v3.4M692.3 236.6h3.4M694.0 234.9v3.4M692.3 262.3h3.4M694.0 260.6v3.4M692.3 275.1h3.4M694.0 273.4v3.4M692.3 287.9h3.4M694.0 286.2v3.4M692.3 300.8h3.4M694.0 299.1v3.4M692.3 326.4h3.4M694.0 324.7v3.4M692.3 339.3h3.4M694.0 337.6v3.4M692.3 352.1h3.4M694.0 350.4v3.4M692.3 364.9h3.4M694.0 363.2v3.4M692.3 390.6h3.4M694.0 388.9v3.4M692.3 403.4h3.4M694.0 401.7v3.4M692.3 416.2h3.4M694.0 414.5v3.4M692.3 429.1h3.4M694.0 427.4v3.4M692.3 454.7h3.4M694.0 453.0v3.4M692.3 467.6h3.4M694.0 465.9v3.4M692.3 480.4h3.4M694.0 478.7v3.4M692.3 493.2h3.4M694.0 491.5v3.4M692.3 518.9h3.4M694.0 517.2v3.4M692.3 531.7h3.4M694.0 530.0v3.4M692.3 544.5h3.4M694.0 542.8v3.4M692.3 557.4h3.4M694.0 555.7v3.4M743.7 69.8h3.4M745.4 68.1v3.4M743.7 82.7h3.4M745.4 81.0v3.4M743.7 95.5h3.4M745.4 93.8v3.4M743.7 108.3h3.4M745.4 106.6v3.4M743.7 134.0h3.4M745.4 132.3v3.4M743.7 146.8h3.4M745.4 145.1v3.4M743.7 159.6h3.4M745.4 157.9v3.4M743.7 172.5h3.4M745.4 170.8v3.4M743.7 198.1h3.4M745.4 196.4v3.4M743.7 211.0h3.4M745.4 209.3v3.4M743.7 223.8h3.4M745.4 222.1v3.4M743.7 236.6h3.4M745.4 234.9v3.4M743.7 262.3h3.4M745.4 260.6v3.4M743.7 275.1h3.4M745.4 273.4v3.4M743.7 287.9h3.4M745.4 286.2v3.4M743.7 300.8h3.4M745.4 299.1v3.4M743.7 326.4h3.4M745.4 324.7v3.4M743.7 339.3h3.4M745.4 337.6v3.4M743.7 352.1h3.4M745.4 350.4v3.4M743.7 364.9h3.4M745.4 363.2v3.4M743.7 390.6h3.4M745.4 388.9v3.4M743.7 403.4h3.4M745.4 401.7v3.4M743.7 416.2h3.4M745.4 414.5v3.4M743.7 429.1h3.4M745.4 427.4v3.4M743.7 454.7h3.4M745.4 453.0v3.4M743.7 467.6h3.4M745.4 465.9v3.4M743.7 480.4h3.4M745.4 478.7v3.4M743.7 493.2h3.4M745.4 491.5v3.4M743.7 518.9h3.4M745.4 517.2v3.4M743.7 531.7h3.4M745.4 530.0v3.4M743.7 544.5h3.4M745.4 542.8v3.4M743.7 557.4h3.4M745.4 555.7v3.4M795.1 69.8h3.4M796.8 68.1v3.4M795.1 82.7h3.4M796.8 81.0v3.4M795.1 95.5h3.4M796.8 93.8v3.4M795.1 108.3h3.4M796.8 106.6v3.4M795.1 134.0h3.4M796.8 132.3v3.4M795.1 146.8h3.4M796.8 145.1v3.4M795.1 159.6h3.4M796.8 157.9v3.4M795.1 172.5h3.4M796.8 170.8v3.4M795.1 198.1h3.4M796.8 196.4v3.4M795.1 211.0h3.4M796.8 209.3v3.4M795.1 223.8h3.4M796.8 222.1v3.4M795.1 236.6h3.4M796.8 234.9v3.4M795.1 262.3h3.4M796.8 260.6v3.4M795.1 275.1h3.4M796.8 273.4v3.4M795.1 287.9h3.4M796.8 286.2v3.4M795.1 300.8h3.4M796.8 299.1v3.4M795.1 326.4h3.4M796.8 324.7v3.4M795.1 339.3h3.4M796.8 337.6v3.4M795.1 352.1h3.4M796.8 350.4v3.4M795.1 364.9h3.4M796.8 363.2v3.4M795.1 390.6h3.4M796.8 388.9v3.4M795.1 403.4h3.4M796.8 401.7v3.4M795.1 416.2h3.4M796.8 414.5v3.4M795.1 429.1h3.4M796.8 427.4v3.4M795.1 454.7h3.4M796.8 453.0v3.4M795.1 467.6h3.4M796.8 465.9v3.4M795.1 480.4h3.4M796.8 478.7v3.4M795.1 493.2h3.4M796.8 491.5v3.4M795.1 518.9h3.4M796.8 517.2v3.4M795.1 531.7h3.4M796.8 530.0v3.4M795.1 544.5h3.4M796.8 542.8v3.4M795.1 557.4h3.4M796.8 555.7v3.4" stroke="#131313" stroke-width="1.2" fill="none"/>
<path d="M35.5 57.0h1.2M45.8 57.0h1.2M56.0 57.0h1.2M66.3 57.0h1.2M76.6 57.0h1.2M86.9 57.0h1.2M97.2 57.0h1.2M107.4 57.0h1.2M117.7 57.0h1.2M128.0 57.0h1.2M138.3 57.0h1.2M148.6 57.0h1.2M158.8 57.0h1.2M169.1 57.0h1.2M179.4 57.0h1.2M189.7 57.0h1.2M200.0 57.0h1.2M210.2 57.0h1.2M220.5 57.0h1.2M230.8 57.0h1.2M241.1 57.0h1.2M251.4 57.0h1.2M261.6 57.0h1.2M271.9 57.0h1.2M282.2 57.0h1.2M292.5 57.0h1.2M302.8 57.0h1.2M313.0 57.0h1.2M323.3 57.0h1.2M333.6 57.0h1.2M343.9 57.0h1.2M354.2 57.0h1.2M364.4 57.0h1.2M374.7 57.0h1.2M385.0 57.0h1.2M395.3 57.0h1.2M405.6 57.0h1.2M415.8 57.0h1.2M426.1 57.0h1.2M436.4 57.0h1.2M446.7 57.0h1.2M457.0 57.0h1.2M467.2 57.0h1.2M477.5 57.0h1.2M487.8 57.0h1.2M498.1 57.0h1.2M508.4 57.0h1.2M518.6 57.0h1.2M528.9 57.0h1.2M539.2 57.0h1.2M549.5 57.0h1.2M559.8 57.0h1.2M570.0 57.0h1.2M580.3 57.0h1.2M590.6 57.0h1.2M600.9 57.0h1.2M611.2 57.0h1.2M621.4 57.0h1.2M631.7 57.0h1.2M642.0 57.0h1.2M652.3 57.0h1.2M662.6 57.0h1.2M672.8 57.0h1.2M683.1 57.0h1.2M693.4 57.0h1.2M703.7 57.0h1.2M714.0 57.0h1.2M724.2 57.0h1.2M734.5 57.0h1.2M744.8 57.0h1.2M755.1 57.0h1.2M765.4 57.0h1.2M775.6 57.0h1.2M785.9 57.0h1.2M796.2 57.0h1.2M806.5 57.0h1.2M816.8 57.0h1.2M827.0 57.0h1.2M837.3 57.0h1.2M35.5 121.2h1.2M45.8 121.2h1.2M56.0 121.2h1.2M66.3 121.2h1.2M76.6 121.2h1.2M86.9 121.2h1.2M97.2 121.2h1.2M107.4 121.2h1.2M117.7 121.2h1.2M128.0 121.2h1.2M138.3 121.2h1.2M148.6 121.2h1.2M158.8 121.2h1.2M169.1 121.2h1.2M179.4 121.2h1.2M189.7 121.2h1.2M200.0 121.2h1.2M210.2 121.2h1.2M220.5 121.2h1.2M230.8 121.2h1.2M241.1 121.2h1.2M251.4 121.2h1.2M261.6 121.2h1.2M271.9 121.2h1.2M282.2 121.2h1.2M292.5 121.2h1.2M302.8 121.2h1.2M313.0 121.2h1.2M323.3 121.2h1.2M333.6 121.2h1.2M343.9 121.2h1.2M354.2 121.2h1.2M364.4 121.2h1.2M374.7 121.2h1.2M385.0 121.2h1.2M395.3 121.2h1.2M405.6 121.2h1.2M415.8 121.2h1.2M426.1 121.2h1.2M436.4 121.2h1.2M446.7 121.2h1.2M457.0 121.2h1.2M467.2 121.2h1.2M477.5 121.2h1.2M487.8 121.2h1.2M498.1 121.2h1.2M508.4 121.2h1.2M518.6 121.2h1.2M528.9 121.2h1.2M539.2 121.2h1.2M549.5 121.2h1.2M559.8 121.2h1.2M570.0 121.2h1.2M580.3 121.2h1.2M590.6 121.2h1.2M600.9 121.2h1.2M611.2 121.2h1.2M621.4 121.2h1.2M631.7 121.2h1.2M642.0 121.2h1.2M652.3 121.2h1.2M662.6 121.2h1.2M672.8 121.2h1.2M683.1 121.2h1.2M693.4 121.2h1.2M703.7 121.2h1.2M714.0 121.2h1.2M724.2 121.2h1.2M734.5 121.2h1.2M744.8 121.2h1.2M755.1 121.2h1.2M765.4 121.2h1.2M775.6 121.2h1.2M785.9 121.2h1.2M796.2 121.2h1.2M806.5 121.2h1.2M816.8 121.2h1.2M827.0 121.2h1.2M837.3 121.2h1.2M35.5 185.3h1.2M45.8 185.3h1.2M56.0 185.3h1.2M66.3 185.3h1.2M76.6 185.3h1.2M86.9 185.3h1.2M97.2 185.3h1.2M107.4 185.3h1.2M117.7 185.3h1.2M128.0 185.3h1.2M138.3 185.3h1.2M148.6 185.3h1.2M158.8 185.3h1.2M169.1 185.3h1.2M179.4 185.3h1.2M189.7 185.3h1.2M200.0 185.3h1.2M210.2 185.3h1.2M220.5 185.3h1.2M230.8 185.3h1.2M241.1 185.3h1.2M251.4 185.3h1.2M261.6 185.3h1.2M271.9 185.3h1.2M282.2 185.3h1.2M292.5 185.3h1.2M302.8 185.3h1.2M313.0 185.3h1.2M323.3 185.3h1.2M333.6 185.3h1.2M343.9 185.3h1.2M354.2 185.3h1.2M364.4 185.3h1.2M374.7 185.3h1.2M385.0 185.3h1.2M395.3 185.3h1.2M405.6 185.3h1.2M415.8 185.3h1.2M426.1 185.3h1.2M436.4 185.3h1.2M446.7 185.3h1.2M457.0 185.3h1.2M467.2 185.3h1.2M477.5 185.3h1.2M487.8 185.3h1.2M498.1 185.3h1.2M508.4 185.3h1.2M518.6 185.3h1.2M528.9 185.3h1.2M539.2 185.3h1.2M549.5 185.3h1.2M559.8 185.3h1.2M570.0 185.3h1.2M580.3 185.3h1.2M590.6 185.3h1.2M600.9 185.3h1.2M611.2 185.3h1.2M621.4 185.3h1.2M631.7 185.3h1.2M642.0 185.3h1.2M652.3 185.3h1.2M662.6 185.3h1.2M672.8 185.3h1.2M683.1 185.3h1.2M693.4 185.3h1.2M703.7 185.3h1.2M714.0 185.3h1.2M724.2 185.3h1.2M734.5 185.3h1.2M744.8 185.3h1.2M755.1 185.3h1.2M765.4 185.3h1.2M775.6 185.3h1.2M785.9 185.3h1.2M796.2 185.3h1.2M806.5 185.3h1.2M816.8 185.3h1.2M827.0 185.3h1.2M837.3 185.3h1.2M35.5 249.5h1.2M45.8 249.5h1.2M56.0 249.5h1.2M66.3 249.5h1.2M76.6 249.5h1.2M86.9 249.5h1.2M97.2 249.5h1.2M107.4 249.5h1.2M117.7 249.5h1.2M128.0 249.5h1.2M138.3 249.5h1.2M148.6 249.5h1.2M158.8 249.5h1.2M169.1 249.5h1.2M179.4 249.5h1.2M189.7 249.5h1.2M200.0 249.5h1.2M210.2 249.5h1.2M220.5 249.5h1.2M230.8 249.5h1.2M241.1 249.5h1.2M251.4 249.5h1.2M261.6 249.5h1.2M271.9 249.5h1.2M282.2 249.5h1.2M292.5 249.5h1.2M302.8 249.5h1.2M313.0 249.5h1.2M323.3 249.5h1.2M333.6 249.5h1.2M343.9 249.5h1.2M354.2 249.5h1.2M364.4 249.5h1.2M374.7 249.5h1.2M385.0 249.5h1.2M395.3 249.5h1.2M405.6 249.5h1.2M415.8 249.5h1.2M426.1 249.5h1.2M436.4 249.5h1.2M446.7 249.5h1.2M457.0 249.5h1.2M467.2 249.5h1.2M477.5 249.5h1.2M487.8 249.5h1.2M498.1 249.5h1.2M508.4 249.5h1.2M518.6 249.5h1.2M528.9 249.5h1.2M539.2 249.5h1.2M549.5 249.5h1.2M559.8 249.5h1.2M570.0 249.5h1.2M580.3 249.5h1.2M590.6 249.5h1.2M600.9 249.5h1.2M611.2 249.5h1.2M621.4 249.5h1.2M631.7 249.5h1.2M642.0 249.5h1.2M652.3 249.5h1.2M662.6 249.5h1.2M672.8 249.5h1.2M683.1 249.5h1.2M693.4 249.5h1.2M703.7 249.5h1.2M714.0 249.5h1.2M724.2 249.5h1.2M734.5 249.5h1.2M744.8 249.5h1.2M755.1 249.5h1.2M765.4 249.5h1.2M775.6 249.5h1.2M785.9 249.5h1.2M796.2 249.5h1.2M806.5 249.5h1.2M816.8 249.5h1.2M827.0 249.5h1.2M837.3 249.5h1.2M35.5 377.8h1.2M45.8 377.8h1.2M56.0 377.8h1.2M66.3 377.8h1.2M76.6 377.8h1.2M86.9 377.8h1.2M97.2 377.8h1.2M107.4 377.8h1.2M117.7 377.8h1.2M128.0 377.8h1.2M138.3 377.8h1.2M148.6 377.8h1.2M158.8 377.8h1.2M169.1 377.8h1.2M179.4 377.8h1.2M189.7 377.8h1.2M200.0 377.8h1.2M210.2 377.8h1.2M220.5 377.8h1.2M230.8 377.8h1.2M241.1 377.8h1.2M251.4 377.8h1.2M261.6 377.8h1.2M271.9 377.8h1.2M282.2 377.8h1.2M292.5 377.8h1.2M302.8 377.8h1.2M313.0 377.8h1.2M323.3 377.8h1.2M333.6 377.8h1.2M343.9 377.8h1.2M354.2 377.8h1.2M364.4 377.8h1.2M374.7 377.8h1.2M385.0 377.8h1.2M395.3 377.8h1.2M405.6 377.8h1.2M415.8 377.8h1.2M426.1 377.8h1.2M436.4 377.8h1.2M446.7 377.8h1.2M457.0 377.8h1.2M467.2 377.8h1.2M477.5 377.8h1.2M487.8 377.8h1.2M498.1 377.8h1.2M508.4 377.8h1.2M518.6 377.8h1.2M528.9 377.8h1.2M539.2 377.8h1.2M549.5 377.8h1.2M559.8 377.8h1.2M570.0 377.8h1.2M580.3 377.8h1.2M590.6 377.8h1.2M600.9 377.8h1.2M611.2 377.8h1.2M621.4 377.8h1.2M631.7 377.8h1.2M642.0 377.8h1.2M652.3 377.8h1.2M662.6 377.8h1.2M672.8 377.8h1.2M683.1 377.8h1.2M693.4 377.8h1.2M703.7 377.8h1.2M714.0 377.8h1.2M724.2 377.8h1.2M734.5 377.8h1.2M744.8 377.8h1.2M755.1 377.8h1.2M765.4 377.8h1.2M775.6 377.8h1.2M785.9 377.8h1.2M796.2 377.8h1.2M806.5 377.8h1.2M816.8 377.8h1.2M827.0 377.8h1.2M837.3 377.8h1.2M35.5 441.9h1.2M45.8 441.9h1.2M56.0 441.9h1.2M66.3 441.9h1.2M76.6 441.9h1.2M86.9 441.9h1.2M97.2 441.9h1.2M107.4 441.9h1.2M117.7 441.9h1.2M128.0 441.9h1.2M138.3 441.9h1.2M148.6 441.9h1.2M158.8 441.9h1.2M169.1 441.9h1.2M179.4 441.9h1.2M189.7 441.9h1.2M200.0 441.9h1.2M210.2 441.9h1.2M220.5 441.9h1.2M230.8 441.9h1.2M241.1 441.9h1.2M251.4 441.9h1.2M261.6 441.9h1.2M271.9 441.9h1.2M282.2 441.9h1.2M292.5 441.9h1.2M302.8 441.9h1.2M313.0 441.9h1.2M323.3 441.9h1.2M333.6 441.9h1.2M343.9 441.9h1.2M354.2 441.9h1.2M364.4 441.9h1.2M374.7 441.9h1.2M385.0 441.9h1.2M395.3 441.9h1.2M405.6 441.9h1.2M415.8 441.9h1.2M426.1 441.9h1.2M436.4 441.9h1.2M446.7 441.9h1.2M457.0 441.9h1.2M467.2 441.9h1.2M477.5 441.9h1.2M487.8 441.9h1.2M498.1 441.9h1.2M508.4 441.9h1.2M518.6 441.9h1.2M528.9 441.9h1.2M539.2 441.9h1.2M549.5 441.9h1.2M559.8 441.9h1.2M570.0 441.9h1.2M580.3 441.9h1.2M590.6 441.9h1.2M600.9 441.9h1.2M611.2 441.9h1.2M621.4 441.9h1.2M631.7 441.9h1.2M642.0 441.9h1.2M652.3 441.9h1.2M662.6 441.9h1.2M672.8 441.9h1.2M683.1 441.9h1.2M693.4 441.9h1.2M703.7 441.9h1.2M714.0 441.9h1.2M724.2 441.9h1.2M734.5 441.9h1.2M744.8 441.9h1.2M755.1 441.9h1.2M765.4 441.9h1.2M775.6 441.9h1.2M785.9 441.9h1.2M796.2 441.9h1.2M806.5 441.9h1.2M816.8 441.9h1.2M827.0 441.9h1.2M837.3 441.9h1.2M35.5 506.1h1.2M45.8 506.1h1.2M56.0 506.1h1.2M66.3 506.1h1.2M76.6 506.1h1.2M86.9 506.1h1.2M97.2 506.1h1.2M107.4 506.1h1.2M117.7 506.1h1.2M128.0 506.1h1.2M138.3 506.1h1.2M148.6 506.1h1.2M158.8 506.1h1.2M169.1 506.1h1.2M179.4 506.1h1.2M189.7 506.1h1.2M200.0 506.1h1.2M210.2 506.1h1.2M220.5 506.1h1.2M230.8 506.1h1.2M241.1 506.1h1.2M251.4 506.1h1.2M261.6 506.1h1.2M271.9 506.1h1.2M282.2 506.1h1.2M292.5 506.1h1.2M302.8 506.1h1.2M313.0 506.1h1.2M323.3 506.1h1.2M333.6 506.1h1.2M343.9 506.1h1.2M354.2 506.1h1.2M364.4 506.1h1.2M374.7 506.1h1.2M385.0 506.1h1.2M395.3 506.1h1.2M405.6 506.1h1.2M415.8 506.1h1.2M426.1 506.1h1.2M436.4 506.1h1.2M446.7 506.1h1.2M457.0 506.1h1.2M467.2 506.1h1.2M477.5 506.1h1.2M487.8 506.1h1.2M498.1 506.1h1.2M508.4 506.1h1.2M518.6 506.1h1.2M528.9 506.1h1.2M539.2 506.1h1.2M549.5 506.1h1.2M559.8 506.1h1.2M570.0 506.1h1.2M580.3 506.1h1.2M590.6 506.1h1.2M600.9 506.1h1.2M611.2 506.1h1.2M621.4 506.1h1.2M631.7 506.1h1.2M642.0 506.1h1.2M652.3 506.1h1.2M662.6 506.1h1.2M672.8 506.1h1.2M683.1 506.1h1.2M693.4 506.1h1.2M703.7 506.1h1.2M714.0 506.1h1.2M724.2 506.1h1.2M734.5 506.1h1.2M744.8 506.1h1.2M755.1 506.1h1.2M765.4 506.1h1.2M775.6 506.1h1.2M785.9 506.1h1.2M796.2 506.1h1.2M806.5 506.1h1.2M816.8 506.1h1.2M827.0 506.1h1.2M837.3 506.1h1.2M35.5 570.2h1.2M45.8 570.2h1.2M56.0 570.2h1.2M66.3 570.2h1.2M76.6 570.2h1.2M86.9 570.2h1.2M97.2 570.2h1.2M107.4 570.2h1.2M117.7 570.2h1.2M128.0 570.2h1.2M138.3 570.2h1.2M148.6 570.2h1.2M158.8 570.2h1.2M169.1 570.2h1.2M179.4 570.2h1.2M189.7 570.2h1.2M200.0 570.2h1.2M210.2 570.2h1.2M220.5 570.2h1.2M230.8 570.2h1.2M241.1 570.2h1.2M251.4 570.2h1.2M261.6 570.2h1.2M271.9 570.2h1.2M282.2 570.2h1.2M292.5 570.2h1.2M302.8 570.2h1.2M313.0 570.2h1.2M323.3 570.2h1.2M333.6 570.2h1.2M343.9 570.2h1.2M354.2 570.2h1.2M364.4 570.2h1.2M374.7 570.2h1.2M385.0 570.2h1.2M395.3 570.2h1.2M405.6 570.2h1.2M415.8 570.2h1.2M426.1 570.2h1.2M436.4 570.2h1.2M446.7 570.2h1.2M457.0 570.2h1.2M467.2 570.2h1.2M477.5 570.2h1.2M487.8 570.2h1.2M498.1 570.2h1.2M508.4 570.2h1.2M518.6 570.2h1.2M528.9 570.2h1.2M539.2 570.2h1.2M549.5 570.2h1.2M559.8 570.2h1.2M570.0 570.2h1.2M580.3 570.2h1.2M590.6 570.2h1.2M600.9 570.2h1.2M611.2 570.2h1.2M621.4 570.2h1.2M631.7 570.2h1.2M642.0 570.2h1.2M652.3 570.2h1.2M662.6 570.2h1.2M672.8 570.2h1.2M683.1 570.2h1.2M693.4 570.2h1.2M703.7 570.2h1.2M714.0 570.2h1.2M724.2 570.2h1.2M734.5 570.2h1.2M744.8 570.2h1.2M755.1 570.2h1.2M765.4 570.2h1.2M775.6 570.2h1.2M785.9 570.2h1.2M796.2 570.2h1.2M806.5 570.2h1.2M816.8 570.2h1.2M827.0 570.2h1.2M837.3 570.2h1.2M76.6 69.8h1.2M76.6 82.7h1.2M76.6 95.5h1.2M76.6 108.3h1.2M76.6 134.0h1.2M76.6 146.8h1.2M76.6 159.6h1.2M76.6 172.5h1.2M76.6 198.1h1.2M76.6 211.0h1.2M76.6 223.8h1.2M76.6 236.6h1.2M76.6 262.3h1.2M76.6 275.1h1.2M76.6 287.9h1.2M76.6 300.8h1.2M76.6 326.4h1.2M76.6 339.3h1.2M76.6 352.1h1.2M76.6 364.9h1.2M76.6 390.6h1.2M76.6 403.4h1.2M76.6 416.2h1.2M76.6 429.1h1.2M76.6 454.7h1.2M76.6 467.6h1.2M76.6 480.4h1.2M76.6 493.2h1.2M76.6 518.9h1.2M76.6 531.7h1.2M76.6 544.5h1.2M76.6 557.4h1.2M128.0 69.8h1.2M128.0 82.7h1.2M128.0 95.5h1.2M128.0 108.3h1.2M128.0 134.0h1.2M128.0 146.8h1.2M128.0 159.6h1.2M128.0 172.5h1.2M128.0 198.1h1.2M128.0 211.0h1.2M128.0 223.8h1.2M128.0 236.6h1.2M128.0 262.3h1.2M128.0 275.1h1.2M128.0 287.9h1.2M128.0 300.8h1.2M128.0 326.4h1.2M128.0 339.3h1.2M128.0 352.1h1.2M128.0 364.9h1.2M128.0 390.6h1.2M128.0 403.4h1.2M128.0 416.2h1.2M128.0 429.1h1.2M128.0 454.7h1.2M128.0 467.6h1.2M128.0 480.4h1.2M128.0 493.2h1.2M128.0 518.9h1.2M128.0 531.7h1.2M128.0 544.5h1.2M128.0 557.4h1.2M179.4 69.8h1.2M179.4 82.7h1.2M179.4 95.5h1.2M179.4 108.3h1.2M179.4 134.0h1.2M179.4 146.8h1.2M179.4 159.6h1.2M179.4 172.5h1.2M179.4 198.1h1.2M179.4 211.0h1.2M179.4 223.8h1.2M179.4 236.6h1.2M179.4 262.3h1.2M179.4 275.1h1.2M179.4 287.9h1.2M179.4 300.8h1.2M179.4 326.4h1.2M179.4 339.3h1.2M179.4 352.1h1.2M179.4 364.9h1.2M179.4 390.6h1.2M179.4 403.4h1.2M179.4 416.2h1.2M179.4 429.1h1.2M179.4 454.7h1.2M179.4 467.6h1.2M179.4 480.4h1.2M179.4 493.2h1.2M179.4 518.9h1.2M179.4 531.7h1.2M179.4 544.5h1.2M179.4 557.4h1.2M230.8 69.8h1.2M230.8 82.7h1.2M230.8 95.5h1.2M230.8 108.3h1.2M230.8 134.0h1.2M230.8 146.8h1.2M230.8 159.6h1.2M230.8 172.5h1.2M230.8 198.1h1.2M230.8 211.0h1.2M230.8 223.8h1.2M230.8 236.6h1.2M230.8 262.3h1.2M230.8 275.1h1.2M230.8 287.9h1.2M230.8 300.8h1.2M230.8 326.4h1.2M230.8 339.3h1.2M230.8 352.1h1.2M230.8 364.9h1.2M230.8 390.6h1.2M230.8 403.4h1.2M230.8 416.2h1.2M230.8 429.1h1.2M230.8 454.7h1.2M230.8 467.6h1.2M230.8 480.4h1.2M230.8 493.2h1.2M230.8 518.9h1.2M230.8 531.7h1.2M230.8 544.5h1.2M230.8 557.4h1.2M282.2 69.8h1.2M282.2 82.7h1.2M282.2 95.5h1.2M282.2 108.3h1.2M282.2 134.0h1.2M282.2 146.8h1.2M282.2 159.6h1.2M282.2 172.5h1.2M282.2 198.1h1.2M282.2 211.0h1.2M282.2 223.8h1.2M282.2 236.6h1.2M282.2 262.3h1.2M282.2 275.1h1.2M282.2 287.9h1.2M282.2 300.8h1.2M282.2 326.4h1.2M282.2 339.3h1.2M282.2 352.1h1.2M282.2 364.9h1.2M282.2 390.6h1.2M282.2 403.4h1.2M282.2 416.2h1.2M282.2 429.1h1.2M282.2 454.7h1.2M282.2 467.6h1.2M282.2 480.4h1.2M282.2 493.2h1.2M282.2 518.9h1.2M282.2 531.7h1.2M282.2 544.5h1.2M282.2 557.4h1.2M333.6 69.8h1.2M333.6 82.7h1.2M333.6 95.5h1.2M333.6 108.3h1.2M333.6 134.0h1.2M333.6 146.8h1.2M333.6 159.6h1.2M333.6 172.5h1.2M333.6 198.1h1.2M333.6 211.0h1.2M333.6 223.8h1.2M333.6 236.6h1.2M333.6 262.3h1.2M333.6 275.1h1.2M333.6 287.9h1.2M333.6 300.8h1.2M333.6 326.4h1.2M333.6 339.3h1.2M333.6 352.1h1.2M333.6 364.9h1.2M333.6 390.6h1.2M333.6 403.4h1.2M333.6 416.2h1.2M333.6 429.1h1.2M333.6 454.7h1.2M333.6 467.6h1.2M333.6 480.4h1.2M333.6 493.2h1.2M333.6 518.9h1.2M333.6 531.7h1.2M333.6 544.5h1.2M333.6 557.4h1.2M385.0 69.8h1.2M385.0 82.7h1.2M385.0 95.5h1.2M385.0 108.3h1.2M385.0 134.0h1.2M385.0 146.8h1.2M385.0 159.6h1.2M385.0 172.5h1.2M385.0 198.1h1.2M385.0 211.0h1.2M385.0 223.8h1.2M385.0 236.6h1.2M385.0 262.3h1.2M385.0 275.1h1.2M385.0 287.9h1.2M385.0 300.8h1.2M385.0 326.4h1.2M385.0 339.3h1.2M385.0 352.1h1.2M385.0 364.9h1.2M385.0 390.6h1.2M385.0 403.4h1.2M385.0 416.2h1.2M385.0 429.1h1.2M385.0 454.7h1.2M385.0 467.6h1.2M385.0 480.4h1.2M385.0 493.2h1.2M385.0 518.9h1.2M385.0 531.7h1.2M385.0 544.5h1.2M385.0 557.4h1.2M487.8 69.8h1.2M487.8 82.7h1.2M487.8 95.5h1.2M487.8 108.3h1.2M487.8 134.0h1.2M487.8 146.8h1.2M487.8 159.6h1.2M487.8 172.5h1.2M487.8 198.1h1.2M487.8 211.0h1.2M487.8 223.8h1.2M487.8 236.6h1.2M487.8 262.3h1.2M487.8 275.1h1.2M487.8 287.9h1.2M487.8 300.8h1.2M487.8 326.4h1.2M487.8 339.3h1.2M487.8 352.1h1.2M487.8 364.9h1.2M487.8 390.6h1.2M487.8 403.4h1.2M487.8 416.2h1.2M487.8 429.1h1.2M487.8 454.7h1.2M487.8 467.6h1.2M487.8 480.4h1.2M487.8 493.2h1.2M487.8 518.9h1.2M487.8 531.7h1.2M487.8 544.5h1.2M487.8 557.4h1.2M539.2 69.8h1.2M539.2 82.7h1.2M539.2 95.5h1.2M539.2 108.3h1.2M539.2 134.0h1.2M539.2 146.8h1.2M539.2 159.6h1.2M539.2 172.5h1.2M539.2 198.1h1.2M539.2 211.0h1.2M539.2 223.8h1.2M539.2 236.6h1.2M539.2 262.3h1.2M539.2 275.1h1.2M539.2 287.9h1.2M539.2 300.8h1.2M539.2 326.4h1.2M539.2 339.3h1.2M539.2 352.1h1.2M539.2 364.9h1.2M539.2 390.6h1.2M539.2 403.4h1.2M539.2 416.2h1.2M539.2 429.1h1.2M539.2 454.7h1.2M539.2 467.6h1.2M539.2 480.4h1.2M539.2 493.2h1.2M539.2 518.9h1.2M539.2 531.7h1.2M539.2 544.5h1.2M539.2 557.4h1.2M590.6 69.8h1.2M590.6 82.7h1.2M590.6 95.5h1.2M590.6 108.3h1.2M590.6 134.0h1.2M590.6 146.8h1.2M590.6 159.6h1.2M590.6 172.5h1.2M590.6 198.1h1.2M590.6 211.0h1.2M590.6 223.8h1.2M590.6 236.6h1.2M590.6 262.3h1.2M590.6 275.1h1.2M590.6 287.9h1.2M590.6 300.8h1.2M590.6 326.4h1.2M590.6 339.3h1.2M590.6 352.1h1.2M590.6 364.9h1.2M590.6 390.6h1.2M590.6 403.4h1.2M590.6 416.2h1.2M590.6 429.1h1.2M590.6 454.7h1.2M590.6 467.6h1.2M590.6 480.4h1.2M590.6 493.2h1.2M590.6 518.9h1.2M590.6 531.7h1.2M590.6 544.5h1.2M590.6 557.4h1.2M642.0 69.8h1.2M642.0 82.7h1.2M642.0 95.5h1.2M642.0 108.3h1.2M642.0 134.0h1.2M642.0 146.8h1.2M642.0 159.6h1.2M642.0 172.5h1.2M642.0 198.1h1.2M642.0 211.0h1.2M642.0 223.8h1.2M642.0 236.6h1.2M642.0 262.3h1.2M642.0 275.1h1.2M642.0 287.9h1.2M642.0 300.8h1.2M642.0 326.4h1.2M642.0 339.3h1.2M642.0 352.1h1.2M642.0 364.9h1.2M642.0 390.6h1.2M642.0 403.4h1.2M642.0 416.2h1.2M642.0 429.1h1.2M642.0 454.7h1.2M642.0 467.6h1.2M642.0 480.4h1.2M642.0 493.2h1.2M642.0 518.9h1.2M642.0 531.7h1.2M642.0 544.5h1.2M642.0 557.4h1.2M693.4 69.8h1.2M693.4 82.7h1.2M693.4 95.5h1.2M693.4 108.3h1.2M693.4 134.0h1.2M693.4 146.8h1.2M693.4 159.6h1.2M693.4 172.5h1.2M693.4 198.1h1.2M693.4 211.0h1.2M693.4 223.8h1.2M693.4 236.6h1.2M693.4 262.3h1.2M693.4 275.1h1.2M693.4 287.9h1.2M693.4 300.8h1.2M693.4 326.4h1.2M693.4 339.3h1.2M693.4 352.1h1.2M693.4 364.9h1.2M693.4 390.6h1.2M693.4 403.4h1.2M693.4 416.2h1.2M693.4 429.1h1.2M693.4 454.7h1.2M693.4 467.6h1.2M693.4 480.4h1.2M693.4 493.2h1.2M693.4 518.9h1.2M693.4 531.7h1.2M693.4 544.5h1.2M693.4 557.4h1.2M744.8 69.8h1.2M744.8 82.7h1.2M744.8 95.5h1.2M744.8 108.3h1.2M744.8 134.0h1.2M744.8 146.8h1.2M744.8 159.6h1.2M744.8 172.5h1.2M744.8 198.1h1.2M744.8 211.0h1.2M744.8 223.8h1.2M744.8 236.6h1.2M744.8 262.3h1.2M744.8 275.1h1.2M744.8 287.9h1.2M744.8 300.8h1.2M744.8 326.4h1.2M744.8 339.3h1.2M744.8 352.1h1.2M744.8 364.9h1.2M744.8 390.6h1.2M744.8 403.4h1.2M744.8 416.2h1.2M744.8 429.1h1.2M744.8 454.7h1.2M744.8 467.6h1.2M744.8 480.4h1.2M744.8 493.2h1.2M744.8 518.9h1.2M744.8 531.7h1.2M744.8 544.5h1.2M744.8 557.4h1.2M796.2 69.8h1.2M796.2 82.7h1.2M796.2 95.5h1.2M796.2 108.3h1.2M796.2 134.0h1.2M796.2 146.8h1.2M796.2 159.6h1.2M796.2 172.5h1.2M796.2 198.1h1.2M796.2 211.0h1.2M796.2 223.8h1.2M796.2 236.6h1.2M796.2 262.3h1.2M796.2 275.1h1.2M796.2 287.9h1.2M796.2 300.8h1.2M796.2 326.4h1.2M796.2 339.3h1.2M796.2 352.1h1.2M796.2 364.9h1.2M796.2 390.6h1.2M796.2 403.4h1.2M796.2 416.2h1.2M796.2 429.1h1.2M796.2 454.7h1.2M796.2 467.6h1.2M796.2 480.4h1.2M796.2 493.2h1.2M796.2 518.9h1.2M796.2 531.7h1.2M796.2 544.5h1.2M796.2 557.4h1.2" stroke="#424242" stroke-width="1.2" fill="none"/>
<path d="M27 313.6H848M437.0 69V583M36.1 309.0v9.2M46.4 309.0v9.2M56.6 309.0v9.2M66.9 309.0v9.2M77.2 309.0v9.2M87.5 309.0v9.2M97.8 309.0v9.2M108.0 309.0v9.2M118.3 309.0v9.2M128.6 309.0v9.2M138.9 309.0v9.2M149.2 309.0v9.2M159.4 309.0v9.2M169.7 309.0v9.2M180.0 309.0v9.2M190.3 309.0v9.2M200.6 309.0v9.2M210.8 309.0v9.2M221.1 309.0v9.2M231.4 309.0v9.2M241.7 309.0v9.2M252.0 309.0v9.2M262.2 309.0v9.2M272.5 309.0v9.2M282.8 309.0v9.2M293.1 309.0v9.2M303.4 309.0v9.2M313.6 309.0v9.2M323.9 309.0v9.2M334.2 309.0v9.2M344.5 309.0v9.2M354.8 309.0v9.2M365.0 309.0v9.2M375.3 309.0v9.2M385.6 309.0v9.2M395.9 309.0v9.2M406.2 309.0v9.2M416.4 309.0v9.2M426.7 309.0v9.2M437.0 309.0v9.2M447.3 309.0v9.2M457.6 309.0v9.2M467.8 309.0v9.2M478.1 309.0v9.2M488.4 309.0v9.2M498.7 309.0v9.2M509.0 309.0v9.2M519.2 309.0v9.2M529.5 309.0v9.2M539.8 309.0v9.2M550.1 309.0v9.2M560.4 309.0v9.2M570.6 309.0v9.2M580.9 309.0v9.2M591.2 309.0v9.2M601.5 309.0v9.2M611.8 309.0v9.2M622.0 309.0v9.2M632.3 309.0v9.2M642.6 309.0v9.2M652.9 309.0v9.2M663.2 309.0v9.2M673.4 309.0v9.2M683.7 309.0v9.2M694.0 309.0v9.2M704.3 309.0v9.2M714.6 309.0v9.2M724.8 309.0v9.2M735.1 309.0v9.2M745.4 309.0v9.2M755.7 309.0v9.2M766.0 309.0v9.2M776.2 309.0v9.2M786.5 309.0v9.2M796.8 309.0v9.2M807.1 309.0v9.2M817.4 309.0v9.2M827.6 309.0v9.2M837.9 309.0v9.2M432.4 82.7h9.2M432.4 95.5h9.2M432.4 108.3h9.2M432.4 121.2h9.2M432.4 134.0h9.2M432.4 146.8h9.2M432.4 159.6h9.2M432.4 172.5h9.2M432.4 185.3h9.2M432.4 198.1h9.2M432.4 211.0h9.2M432.4 223.8h9.2M432.4 236.6h9.2M432.4 249.5h9.2M432.4 262.3h9.2M432.4 275.1h9.2M432.4 287.9h9.2M432.4 300.8h9.2M432.4 313.6h9.2M432.4 326.4h9.2M432.4 339.3h9.2M432.4 352.1h9.2M432.4 364.9h9.2M432.4 377.8h9.2M432.4 390.6h9.2M432.4 403.4h9.2M432.4 416.2h9.2M432.4 429.1h9.2M432.4 441.9h9.2M432.4 454.7h9.2M432.4 467.6h9.2M432.4 480.4h9.2M432.4 493.2h9.2M432.4 506.1h9.2M432.4 518.9h9.2M432.4 531.7h9.2M432.4 544.5h9.2M432.4 557.4h9.2M432.4 570.2h9.2" stroke="#8a8a8a" stroke-width="1.15" fill="none"/>
<path d="M27 97.8H848V103.8H27ZM27.0 96.8h1.05v1.2h-1.05ZM28.0 96.0h1.05v2.0h-1.05ZM35.0 96.3h1.05v1.7h-1.05ZM36.0 96.8h1.05v1.2h-1.05ZM39.0 96.8h1.05v1.2h-1.05ZM40.0 96.3h1.05v1.7h-1.05ZM41.0 96.8h1.05v1.2h-1.05ZM42.0 96.3h1.05v1.7h-1.05ZM45.0 96.8h1.05v1.2h-1.05ZM48.0 96.3h1.05v1.7h-1.05ZM49.0 96.0h1.05v2.0h-1.05ZM50.0 96.0h1.05v2.0h-1.05ZM53.0 96.3h1.05v1.7h-1.05ZM56.0 103.6h1.05v1.7h-1.05ZM57.0 103.6h1.05v1.7h-1.05ZM60.0 96.3h1.05v1.7h-1.05ZM61.0 96.3h1.05v1.7h-1.05ZM62.0 96.3h1.05v1.7h-1.05ZM66.0 96.0h1.05v2.0h-1.05ZM68.0 96.0h1.05v2.0h-1.05ZM69.0 96.0h1.05v2.0h-1.05ZM70.0 96.3h1.05v1.7h-1.05ZM71.0 96.8h1.05v1.2h-1.05ZM74.0 96.3h1.05v1.7h-1.05ZM74.0 93.6h1.05v4.4h-1.05ZM75.0 96.8h1.05v1.2h-1.05ZM77.0 96.3h1.05v1.7h-1.05ZM79.0 103.6h1.05v2.0h-1.05ZM82.0 96.3h1.05v1.7h-1.05ZM83.0 96.0h1.05v2.0h-1.05ZM83.0 103.6h1.05v1.7h-1.05ZM85.0 96.3h1.05v1.7h-1.05ZM86.0 96.3h1.05v1.7h-1.05ZM88.0 96.3h1.05v1.7h-1.05ZM89.0 96.8h1.05v1.2h-1.05ZM90.0 96.8h1.05v1.2h-1.05ZM91.0 96.0h1.05v2.0h-1.05ZM92.0 96.0h1.05v2.0h-1.05ZM97.0 96.0h1.05v2.0h-1.05ZM98.0 96.0h1.05v2.0h-1.05ZM99.0 96.3h1.05v1.7h-1.05ZM100.0 96.3h1.05v1.7h-1.05ZM102.0 96.3h1.05v1.7h-1.05ZM106.0 96.0h1.05v2.0h-1.05ZM107.0 96.3h1.05v1.7h-1.05ZM109.0 96.3h1.05v1.7h-1.05ZM110.0 96.3h1.05v1.7h-1.05ZM111.0 96.3h1.05v1.7h-1.05ZM112.0 96.3h1.05v1.7h-1.05ZM113.0 96.3h1.05v1.7h-1.05ZM115.0 96.3h1.05v1.7h-1.05ZM116.0 96.3h1.05v1.7h-1.05ZM117.0 96.3h1.05v1.7h-1.05ZM118.0 96.3h1.05v1.7h-1.05ZM119.0 96.3h1.05v1.7h-1.05ZM121.0 96.8h1.05v1.2h-1.05ZM130.0 96.8h1.05v1.2h-1.05ZM133.0 96.3h1.05v1.7h-1.05ZM134.0 96.3h1.05v1.7h-1.05ZM136.0 96.0h1.05v2.0h-1.05ZM137.0 94.6h1.05v3.4h-1.05ZM139.0 96.3h1.05v1.7h-1.05ZM140.0 96.3h1.05v1.7h-1.05ZM141.0 96.0h1.05v2.0h-1.05ZM143.0 96.8h1.05v1.2h-1.05ZM143.0 95.2h1.05v2.8h-1.05ZM144.0 96.3h1.05v1.7h-1.05ZM145.0 96.3h1.05v1.7h-1.05ZM146.0 96.3h1.05v1.7h-1.05ZM147.0 96.8h1.05v1.2h-1.05ZM148.0 96.3h1.05v1.7h-1.05ZM149.0 96.8h1.05v1.2h-1.05ZM150.0 96.3h1.05v1.7h-1.05ZM156.0 96.3h1.05v1.7h-1.05ZM157.0 96.3h1.05v1.7h-1.05ZM158.0 96.8h1.05v1.2h-1.05ZM159.0 96.3h1.05v1.7h-1.05ZM161.0 96.3h1.05v1.7h-1.05ZM163.0 96.3h1.05v1.7h-1.05ZM166.0 96.0h1.05v2.0h-1.05ZM167.0 96.0h1.05v2.0h-1.05ZM168.0 96.8h1.05v1.2h-1.05ZM169.0 96.8h1.05v1.2h-1.05ZM170.0 96.3h1.05v1.7h-1.05ZM171.0 96.3h1.05v1.7h-1.05ZM173.0 96.8h1.05v1.2h-1.05ZM176.0 96.3h1.05v1.7h-1.05ZM177.0 96.0h1.05v2.0h-1.05ZM178.0 96.0h1.05v2.0h-1.05ZM179.0 96.3h1.05v1.7h-1.05ZM180.0 96.0h1.05v2.0h-1.05ZM182.0 96.3h1.05v1.7h-1.05ZM183.0 96.0h1.05v2.0h-1.05ZM184.0 96.3h1.05v1.7h-1.05ZM185.0 96.0h1.05v2.0h-1.05ZM186.0 96.0h1.05v2.0h-1.05ZM187.0 96.3h1.05v1.7h-1.05ZM188.0 96.0h1.05v2.0h-1.05ZM188.0 103.6h1.05v1.7h-1.05ZM190.0 96.3h1.05v1.7h-1.05ZM192.0 96.0h1.05v2.0h-1.05ZM192.0 94.6h1.05v3.4h-1.05ZM195.0 96.3h1.05v1.7h-1.05ZM196.0 96.3h1.05v1.7h-1.05ZM197.0 96.0h1.05v2.0h-1.05ZM199.0 96.3h1.05v1.7h-1.05ZM199.0 95.2h1.05v2.8h-1.05ZM200.0 96.8h1.05v1.2h-1.05ZM201.0 96.0h1.05v2.0h-1.05ZM203.0 96.8h1.05v1.2h-1.05ZM204.0 96.3h1.05v1.7h-1.05ZM205.0 96.3h1.05v1.7h-1.05ZM206.0 96.8h1.05v1.2h-1.05ZM207.0 96.8h1.05v1.2h-1.05ZM208.0 96.8h1.05v1.2h-1.05ZM208.0 94.6h1.05v3.4h-1.05ZM210.0 96.8h1.05v1.2h-1.05ZM211.0 96.3h1.05v1.7h-1.05ZM212.0 96.0h1.05v2.0h-1.05ZM214.0 96.0h1.05v2.0h-1.05ZM215.0 96.3h1.05v1.7h-1.05ZM219.0 96.8h1.05v1.2h-1.05ZM220.0 96.3h1.05v1.7h-1.05ZM220.0 103.6h1.05v1.7h-1.05ZM221.0 96.3h1.05v1.7h-1.05ZM225.0 96.3h1.05v1.7h-1.05ZM226.0 96.3h1.05v1.7h-1.05ZM229.0 96.3h1.05v1.7h-1.05ZM230.0 96.3h1.05v1.7h-1.05ZM231.0 96.3h1.05v1.7h-1.05ZM233.0 96.3h1.05v1.7h-1.05ZM235.0 96.3h1.05v1.7h-1.05ZM236.0 96.3h1.05v1.7h-1.05ZM237.0 96.3h1.05v1.7h-1.05ZM245.0 96.3h1.05v1.7h-1.05ZM246.0 96.3h1.05v1.7h-1.05ZM247.0 96.3h1.05v1.7h-1.05ZM248.0 96.3h1.05v1.7h-1.05ZM249.0 96.3h1.05v1.7h-1.05ZM251.0 96.8h1.05v1.2h-1.05ZM252.0 96.3h1.05v1.7h-1.05ZM255.0 96.8h1.05v1.2h-1.05ZM260.0 96.8h1.05v1.2h-1.05ZM260.0 103.6h1.05v1.2h-1.05ZM261.0 96.8h1.05v1.2h-1.05ZM266.0 96.3h1.05v1.7h-1.05ZM267.0 96.0h1.05v2.0h-1.05ZM269.0 96.3h1.05v1.7h-1.05ZM271.0 96.8h1.05v1.2h-1.05ZM275.0 103.6h1.05v2.0h-1.05ZM276.0 96.0h1.05v2.0h-1.05ZM277.0 96.3h1.05v1.7h-1.05ZM278.0 96.3h1.05v1.7h-1.05ZM279.0 96.0h1.05v2.0h-1.05ZM279.0 95.2h1.05v2.8h-1.05ZM280.0 96.3h1.05v1.7h-1.05ZM281.0 96.3h1.05v1.7h-1.05ZM287.0 96.3h1.05v1.7h-1.05ZM290.0 96.3h1.05v1.7h-1.05ZM294.0 96.3h1.05v1.7h-1.05ZM295.0 96.3h1.05v1.7h-1.05ZM296.0 96.3h1.05v1.7h-1.05ZM297.0 96.3h1.05v1.7h-1.05ZM298.0 96.3h1.05v1.7h-1.05ZM299.0 96.0h1.05v2.0h-1.05ZM300.0 96.0h1.05v2.0h-1.05ZM301.0 96.3h1.05v1.7h-1.05ZM302.0 96.8h1.05v1.2h-1.05ZM303.0 96.3h1.05v1.7h-1.05ZM305.0 96.0h1.05v2.0h-1.05ZM309.0 96.8h1.05v1.2h-1.05ZM312.0 96.8h1.05v1.2h-1.05ZM313.0 96.3h1.05v1.7h-1.05ZM319.0 96.3h1.05v1.7h-1.05ZM321.0 96.3h1.05v1.7h-1.05ZM322.0 96.8h1.05v1.2h-1.05ZM323.0 96.3h1.05v1.7h-1.05ZM325.0 96.0h1.05v2.0h-1.05ZM327.0 96.3h1.05v1.7h-1.05ZM327.0 103.6h1.05v1.7h-1.05ZM328.0 96.3h1.05v1.7h-1.05ZM328.0 103.6h1.05v2.0h-1.05ZM329.0 96.8h1.05v1.2h-1.05ZM330.0 96.3h1.05v1.7h-1.05ZM332.0 96.3h1.05v1.7h-1.05ZM333.0 96.3h1.05v1.7h-1.05ZM335.0 96.3h1.05v1.7h-1.05ZM339.0 96.3h1.05v1.7h-1.05ZM341.0 96.3h1.05v1.7h-1.05ZM343.0 96.0h1.05v2.0h-1.05ZM344.0 96.3h1.05v1.7h-1.05ZM345.0 96.0h1.05v2.0h-1.05ZM347.0 96.3h1.05v1.7h-1.05ZM349.0 96.8h1.05v1.2h-1.05ZM357.0 96.3h1.05v1.7h-1.05ZM358.0 96.8h1.05v1.2h-1.05ZM359.0 96.3h1.05v1.7h-1.05ZM359.0 93.6h1.05v4.4h-1.05ZM360.0 96.0h1.05v2.0h-1.05ZM364.0 96.0h1.05v2.0h-1.05ZM372.0 96.3h1.05v1.7h-1.05ZM373.0 96.3h1.05v1.7h-1.05ZM374.0 96.0h1.05v2.0h-1.05ZM376.0 96.8h1.05v1.2h-1.05ZM378.0 96.3h1.05v1.7h-1.05ZM379.0 96.3h1.05v1.7h-1.05ZM381.0 96.3h1.05v1.7h-1.05ZM382.0 96.3h1.05v1.7h-1.05ZM383.0 96.3h1.05v1.7h-1.05ZM384.0 96.3h1.05v1.7h-1.05ZM386.0 96.3h1.05v1.7h-1.05ZM387.0 96.3h1.05v1.7h-1.05ZM389.0 96.0h1.05v2.0h-1.05ZM390.0 96.3h1.05v1.7h-1.05ZM392.0 96.0h1.05v2.0h-1.05ZM393.0 96.3h1.05v1.7h-1.05ZM394.0 96.0h1.05v2.0h-1.05ZM395.0 96.3h1.05v1.7h-1.05ZM396.0 96.0h1.05v2.0h-1.05ZM399.0 96.3h1.05v1.7h-1.05ZM400.0 96.0h1.05v2.0h-1.05ZM401.0 96.0h1.05v2.0h-1.05ZM402.0 96.3h1.05v1.7h-1.05ZM403.0 96.3h1.05v1.7h-1.05ZM404.0 96.3h1.05v1.7h-1.05ZM410.0 96.3h1.05v1.7h-1.05ZM411.0 96.3h1.05v1.7h-1.05ZM412.0 96.3h1.05v1.7h-1.05ZM413.0 96.3h1.05v1.7h-1.05ZM416.0 96.3h1.05v1.7h-1.05ZM417.0 96.3h1.05v1.7h-1.05ZM419.0 96.0h1.05v2.0h-1.05ZM420.0 96.0h1.05v2.0h-1.05ZM423.0 96.0h1.05v2.0h-1.05ZM429.0 96.3h1.05v1.7h-1.05ZM430.0 96.3h1.05v1.7h-1.05ZM433.0 96.3h1.05v1.7h-1.05ZM434.0 96.0h1.05v2.0h-1.05ZM434.0 95.2h1.05v2.8h-1.05ZM435.0 96.3h1.05v1.7h-1.05ZM436.0 96.8h1.05v1.2h-1.05ZM437.0 103.6h1.05v1.2h-1.05ZM440.0 96.3h1.05v1.7h-1.05ZM441.0 96.3h1.05v1.7h-1.05ZM442.0 96.3h1.05v1.7h-1.05ZM445.0 96.3h1.05v1.7h-1.05ZM447.0 96.3h1.05v1.7h-1.05ZM448.0 96.3h1.05v1.7h-1.05ZM450.0 96.8h1.05v1.2h-1.05ZM451.0 96.3h1.05v1.7h-1.05ZM453.0 96.3h1.05v1.7h-1.05ZM454.0 96.3h1.05v1.7h-1.05ZM455.0 96.3h1.05v1.7h-1.05ZM455.0 103.6h1.05v1.7h-1.05ZM457.0 96.3h1.05v1.7h-1.05ZM458.0 96.0h1.05v2.0h-1.05ZM459.0 96.3h1.05v1.7h-1.05ZM460.0 96.8h1.05v1.2h-1.05ZM461.0 96.3h1.05v1.7h-1.05ZM467.0 96.3h1.05v1.7h-1.05ZM468.0 96.3h1.05v1.7h-1.05ZM469.0 96.0h1.05v2.0h-1.05ZM470.0 96.8h1.05v1.2h-1.05ZM476.0 96.0h1.05v2.0h-1.05ZM481.0 96.3h1.05v1.7h-1.05ZM481.0 103.6h1.05v2.0h-1.05ZM482.0 96.3h1.05v1.7h-1.05ZM484.0 96.8h1.05v1.2h-1.05ZM485.0 96.3h1.05v1.7h-1.05ZM488.0 96.8h1.05v1.2h-1.05ZM490.0 96.3h1.05v1.7h-1.05ZM492.0 96.0h1.05v2.0h-1.05ZM493.0 96.0h1.05v2.0h-1.05ZM494.0 96.3h1.05v1.7h-1.05ZM495.0 96.0h1.05v2.0h-1.05ZM496.0 96.3h1.05v1.7h-1.05ZM497.0 96.3h1.05v1.7h-1.05ZM499.0 96.8h1.05v1.2h-1.05ZM500.0 96.3h1.05v1.7h-1.05ZM501.0 96.8h1.05v1.2h-1.05ZM502.0 96.3h1.05v1.7h-1.05ZM503.0 96.3h1.05v1.7h-1.05ZM504.0 96.3h1.05v1.7h-1.05ZM508.0 96.8h1.05v1.2h-1.05ZM511.0 96.3h1.05v1.7h-1.05ZM512.0 103.6h1.05v1.7h-1.05ZM513.0 96.3h1.05v1.7h-1.05ZM514.0 96.8h1.05v1.2h-1.05ZM514.0 93.6h1.05v4.4h-1.05ZM516.0 103.6h1.05v1.7h-1.05ZM517.0 96.3h1.05v1.7h-1.05ZM519.0 96.8h1.05v1.2h-1.05ZM522.0 96.0h1.05v2.0h-1.05ZM523.0 96.3h1.05v1.7h-1.05ZM525.0 96.3h1.05v1.7h-1.05ZM526.0 96.8h1.05v1.2h-1.05ZM527.0 96.0h1.05v2.0h-1.05ZM533.0 96.8h1.05v1.2h-1.05ZM536.0 96.3h1.05v1.7h-1.05ZM537.0 96.8h1.05v1.2h-1.05ZM538.0 96.3h1.05v1.7h-1.05ZM539.0 96.3h1.05v1.7h-1.05ZM542.0 96.0h1.05v2.0h-1.05ZM543.0 96.0h1.05v2.0h-1.05ZM545.0 96.8h1.05v1.2h-1.05ZM546.0 96.8h1.05v1.2h-1.05ZM548.0 96.3h1.05v1.7h-1.05ZM549.0 96.3h1.05v1.7h-1.05ZM551.0 96.3h1.05v1.7h-1.05ZM555.0 96.3h1.05v1.7h-1.05ZM556.0 96.0h1.05v2.0h-1.05ZM561.0 96.8h1.05v1.2h-1.05ZM564.0 96.3h1.05v1.7h-1.05ZM568.0 96.3h1.05v1.7h-1.05ZM569.0 96.8h1.05v1.2h-1.05ZM570.0 96.3h1.05v1.7h-1.05ZM572.0 96.0h1.05v2.0h-1.05ZM577.0 96.3h1.05v1.7h-1.05ZM578.0 96.8h1.05v1.2h-1.05ZM581.0 96.0h1.05v2.0h-1.05ZM582.0 96.3h1.05v1.7h-1.05ZM583.0 96.3h1.05v1.7h-1.05ZM585.0 96.3h1.05v1.7h-1.05ZM586.0 96.0h1.05v2.0h-1.05ZM587.0 96.3h1.05v1.7h-1.05ZM588.0 96.3h1.05v1.7h-1.05ZM589.0 96.3h1.05v1.7h-1.05ZM590.0 96.8h1.05v1.2h-1.05ZM591.0 96.3h1.05v1.7h-1.05ZM594.0 96.3h1.05v1.7h-1.05ZM594.0 93.6h1.05v4.4h-1.05ZM596.0 96.0h1.05v2.0h-1.05ZM597.0 96.8h1.05v1.2h-1.05ZM598.0 96.3h1.05v1.7h-1.05ZM601.0 93.6h1.05v4.4h-1.05ZM602.0 96.8h1.05v1.2h-1.05ZM603.0 96.8h1.05v1.2h-1.05ZM604.0 96.3h1.05v1.7h-1.05ZM604.0 95.2h1.05v2.8h-1.05ZM606.0 96.8h1.05v1.2h-1.05ZM609.0 96.3h1.05v1.7h-1.05ZM610.0 95.2h1.05v2.8h-1.05ZM612.0 96.8h1.05v1.2h-1.05ZM613.0 96.0h1.05v2.0h-1.05ZM614.0 96.8h1.05v1.2h-1.05ZM617.0 96.3h1.05v1.7h-1.05ZM622.0 96.8h1.05v1.2h-1.05ZM623.0 103.6h1.05v1.7h-1.05ZM624.0 96.8h1.05v1.2h-1.05ZM629.0 96.3h1.05v1.7h-1.05ZM630.0 96.8h1.05v1.2h-1.05ZM632.0 96.3h1.05v1.7h-1.05ZM635.0 96.8h1.05v1.2h-1.05ZM636.0 96.3h1.05v1.7h-1.05ZM637.0 96.8h1.05v1.2h-1.05ZM638.0 96.3h1.05v1.7h-1.05ZM639.0 96.0h1.05v2.0h-1.05ZM640.0 96.3h1.05v1.7h-1.05ZM641.0 96.3h1.05v1.7h-1.05ZM644.0 96.3h1.05v1.7h-1.05ZM645.0 96.3h1.05v1.7h-1.05ZM646.0 96.0h1.05v2.0h-1.05ZM649.0 96.3h1.05v1.7h-1.05ZM650.0 96.0h1.05v2.0h-1.05ZM651.0 96.0h1.05v2.0h-1.05ZM653.0 96.0h1.05v2.0h-1.05ZM654.0 96.3h1.05v1.7h-1.05ZM656.0 96.3h1.05v1.7h-1.05ZM657.0 96.3h1.05v1.7h-1.05ZM659.0 96.3h1.05v1.7h-1.05ZM661.0 96.3h1.05v1.7h-1.05ZM662.0 93.6h1.05v4.4h-1.05ZM663.0 96.3h1.05v1.7h-1.05ZM666.0 96.0h1.05v2.0h-1.05ZM667.0 96.3h1.05v1.7h-1.05ZM668.0 96.3h1.05v1.7h-1.05ZM669.0 96.3h1.05v1.7h-1.05ZM670.0 96.3h1.05v1.7h-1.05ZM672.0 96.3h1.05v1.7h-1.05ZM673.0 96.3h1.05v1.7h-1.05ZM674.0 96.3h1.05v1.7h-1.05ZM675.0 96.3h1.05v1.7h-1.05ZM676.0 96.8h1.05v1.2h-1.05ZM678.0 96.3h1.05v1.7h-1.05ZM681.0 96.3h1.05v1.7h-1.05ZM682.0 96.3h1.05v1.7h-1.05ZM683.0 96.3h1.05v1.7h-1.05ZM684.0 96.8h1.05v1.2h-1.05ZM685.0 96.3h1.05v1.7h-1.05ZM686.0 96.3h1.05v1.7h-1.05ZM687.0 96.8h1.05v1.2h-1.05ZM689.0 96.0h1.05v2.0h-1.05ZM690.0 96.3h1.05v1.7h-1.05ZM691.0 96.8h1.05v1.2h-1.05ZM693.0 96.3h1.05v1.7h-1.05ZM694.0 96.8h1.05v1.2h-1.05ZM698.0 96.8h1.05v1.2h-1.05ZM702.0 96.0h1.05v2.0h-1.05ZM703.0 96.8h1.05v1.2h-1.05ZM704.0 96.0h1.05v2.0h-1.05ZM705.0 96.3h1.05v1.7h-1.05ZM706.0 96.0h1.05v2.0h-1.05ZM711.0 96.0h1.05v2.0h-1.05ZM714.0 96.3h1.05v1.7h-1.05ZM716.0 96.3h1.05v1.7h-1.05ZM719.0 96.0h1.05v2.0h-1.05ZM723.0 96.8h1.05v1.2h-1.05ZM724.0 96.0h1.05v2.0h-1.05ZM727.0 96.3h1.05v1.7h-1.05ZM727.0 103.6h1.05v1.7h-1.05ZM730.0 96.3h1.05v1.7h-1.05ZM735.0 96.3h1.05v1.7h-1.05ZM736.0 96.8h1.05v1.2h-1.05ZM737.0 96.8h1.05v1.2h-1.05ZM738.0 94.6h1.05v3.4h-1.05ZM739.0 96.0h1.05v2.0h-1.05ZM748.0 96.8h1.05v1.2h-1.05ZM749.0 96.3h1.05v1.7h-1.05ZM751.0 96.3h1.05v1.7h-1.05ZM754.0 96.8h1.05v1.2h-1.05ZM757.0 96.3h1.05v1.7h-1.05ZM758.0 96.8h1.05v1.2h-1.05ZM762.0 96.0h1.05v2.0h-1.05ZM763.0 96.3h1.05v1.7h-1.05ZM764.0 96.3h1.05v1.7h-1.05ZM765.0 96.3h1.05v1.7h-1.05ZM766.0 96.3h1.05v1.7h-1.05ZM767.0 96.8h1.05v1.2h-1.05ZM768.0 96.3h1.05v1.7h-1.05ZM770.0 96.8h1.05v1.2h-1.05ZM772.0 96.3h1.05v1.7h-1.05ZM774.0 103.6h1.05v2.8h-1.05ZM777.0 96.0h1.05v2.0h-1.05ZM778.0 96.3h1.05v1.7h-1.05ZM779.0 96.3h1.05v1.7h-1.05ZM780.0 96.3h1.05v1.7h-1.05ZM782.0 96.8h1.05v1.2h-1.05ZM783.0 96.3h1.05v1.7h-1.05ZM784.0 96.3h1.05v1.7h-1.05ZM785.0 95.2h1.05v2.8h-1.05ZM786.0 96.3h1.05v1.7h-1.05ZM790.0 96.0h1.05v2.0h-1.05ZM793.0 96.3h1.05v1.7h-1.05ZM794.0 96.8h1.05v1.2h-1.05ZM795.0 96.0h1.05v2.0h-1.05ZM796.0 96.0h1.05v2.0h-1.05ZM797.0 96.3h1.05v1.7h-1.05ZM798.0 96.8h1.05v1.2h-1.05ZM800.0 96.3h1.05v1.7h-1.05ZM801.0 96.3h1.05v1.7h-1.05ZM802.0 96.3h1.05v1.7h-1.05ZM803.0 96.0h1.05v2.0h-1.05ZM804.0 96.3h1.05v1.7h-1.05ZM805.0 96.3h1.05v1.7h-1.05ZM806.0 96.3h1.05v1.7h-1.05ZM807.0 96.3h1.05v1.7h-1.05ZM808.0 96.0h1.05v2.0h-1.05ZM809.0 96.3h1.05v1.7h-1.05ZM810.0 96.0h1.05v2.0h-1.05ZM811.0 96.3h1.05v1.7h-1.05ZM813.0 96.8h1.05v1.2h-1.05ZM819.0 96.0h1.05v2.0h-1.05ZM820.0 96.3h1.05v1.7h-1.05ZM821.0 96.3h1.05v1.7h-1.05ZM823.0 96.3h1.05v1.7h-1.05ZM824.0 96.3h1.05v1.7h-1.05ZM825.0 96.8h1.05v1.2h-1.05ZM826.0 96.3h1.05v1.7h-1.05ZM830.0 96.3h1.05v1.7h-1.05ZM831.0 96.0h1.05v2.0h-1.05ZM835.0 96.8h1.05v1.2h-1.05ZM836.0 96.8h1.05v1.2h-1.05ZM837.0 96.3h1.05v1.7h-1.05ZM838.0 96.3h1.05v1.7h-1.05ZM844.0 96.3h1.05v1.7h-1.05Z" fill="#f6f21c"/><path d="M28.0 101.3h1.05v2.8h-1.05ZM31.0 101.3h1.05v2.8h-1.05ZM38.0 101.3h1.05v2.8h-1.05ZM39.0 101.3h1.05v2.8h-1.05ZM44.0 101.3h1.05v2.8h-1.05ZM45.0 101.3h1.05v2.8h-1.05ZM49.0 101.3h1.05v2.8h-1.05ZM50.0 101.3h1.05v2.8h-1.05ZM53.0 101.3h1.05v2.8h-1.05ZM54.0 101.3h1.05v2.8h-1.05ZM59.0 101.3h1.05v2.8h-1.05ZM60.0 101.3h1.05v2.8h-1.05ZM66.0 101.3h1.05v2.8h-1.05ZM81.0 101.3h1.05v2.8h-1.05ZM96.0 101.3h1.05v2.8h-1.05ZM97.0 101.3h1.05v2.8h-1.05ZM107.0 101.3h1.05v2.8h-1.05ZM109.0 101.3h1.05v2.8h-1.05ZM122.0 101.3h1.05v2.8h-1.05ZM125.0 101.3h1.05v2.8h-1.05ZM126.0 101.3h1.05v2.8h-1.05ZM127.0 101.3h1.05v2.8h-1.05ZM128.0 101.3h1.05v2.8h-1.05ZM129.0 101.3h1.05v2.8h-1.05ZM130.0 101.3h1.05v2.8h-1.05ZM157.0 101.3h1.05v2.8h-1.05ZM158.0 101.3h1.05v2.8h-1.05ZM159.0 101.3h1.05v2.8h-1.05ZM160.0 101.3h1.05v2.8h-1.05ZM162.0 101.3h1.05v2.8h-1.05ZM163.0 101.3h1.05v2.8h-1.05ZM171.0 101.3h1.05v2.8h-1.05ZM172.0 101.3h1.05v2.8h-1.05ZM182.0 101.3h1.05v2.8h-1.05ZM183.0 101.3h1.05v2.8h-1.05ZM185.0 101.3h1.05v2.8h-1.05ZM187.0 101.3h1.05v2.8h-1.05ZM189.0 101.3h1.05v2.8h-1.05ZM200.0 101.3h1.05v2.8h-1.05ZM201.0 101.3h1.05v2.8h-1.05ZM202.0 101.3h1.05v2.8h-1.05ZM203.0 101.3h1.05v2.8h-1.05ZM204.0 101.3h1.05v2.8h-1.05ZM211.0 101.3h1.05v2.8h-1.05ZM219.0 101.3h1.05v2.8h-1.05ZM252.0 101.3h1.05v2.8h-1.05ZM253.0 101.3h1.05v2.8h-1.05ZM258.0 101.3h1.05v2.8h-1.05ZM263.0 101.3h1.05v2.8h-1.05ZM274.0 101.3h1.05v2.8h-1.05ZM289.0 101.3h1.05v2.8h-1.05ZM292.0 101.3h1.05v2.8h-1.05ZM294.0 101.3h1.05v2.8h-1.05ZM345.0 101.3h1.05v2.8h-1.05ZM365.0 101.3h1.05v2.8h-1.05ZM366.0 101.3h1.05v2.8h-1.05ZM386.0 101.3h1.05v2.8h-1.05ZM418.0 101.3h1.05v2.8h-1.05ZM431.0 101.3h1.05v2.8h-1.05ZM439.0 101.3h1.05v2.8h-1.05ZM440.0 101.3h1.05v2.8h-1.05ZM441.0 101.3h1.05v2.8h-1.05ZM445.0 101.3h1.05v2.8h-1.05ZM452.0 101.3h1.05v2.8h-1.05ZM457.0 101.3h1.05v2.8h-1.05ZM462.0 101.3h1.05v2.8h-1.05ZM480.0 101.3h1.05v2.8h-1.05ZM482.0 101.3h1.05v2.8h-1.05ZM501.0 101.3h1.05v2.8h-1.05ZM509.0 101.3h1.05v2.8h-1.05ZM510.0 101.3h1.05v2.8h-1.05ZM550.0 101.3h1.05v2.8h-1.05ZM574.0 101.3h1.05v2.8h-1.05ZM582.0 101.3h1.05v2.8h-1.05ZM587.0 101.3h1.05v2.8h-1.05ZM602.0 101.3h1.05v2.8h-1.05ZM603.0 101.3h1.05v2.8h-1.05ZM606.0 101.3h1.05v2.8h-1.05ZM607.0 101.3h1.05v2.8h-1.05ZM631.0 101.3h1.05v2.8h-1.05ZM646.0 101.3h1.05v2.8h-1.05ZM657.0 101.3h1.05v2.8h-1.05ZM664.0 101.3h1.05v2.8h-1.05ZM666.0 101.3h1.05v2.8h-1.05ZM669.0 101.3h1.05v2.8h-1.05ZM670.0 101.3h1.05v2.8h-1.05ZM677.0 101.3h1.05v2.8h-1.05ZM693.0 101.3h1.05v2.8h-1.05ZM698.0 101.3h1.05v2.8h-1.05ZM710.0 101.3h1.05v2.8h-1.05ZM734.0 101.3h1.05v2.8h-1.05ZM735.0 101.3h1.05v2.8h-1.05ZM764.0 101.3h1.05v2.8h-1.05ZM765.0 101.3h1.05v2.8h-1.05ZM766.0 101.3h1.05v2.8h-1.05ZM776.0 101.3h1.05v2.8h-1.05ZM780.0 101.3h1.05v2.8h-1.05ZM806.0 101.3h1.05v2.8h-1.05ZM818.0 101.3h1.05v2.8h-1.05ZM821.0 101.3h1.05v2.8h-1.05ZM822.0 101.3h1.05v2.8h-1.05ZM823.0 101.3h1.05v2.8h-1.05ZM832.0 101.3h1.05v2.8h-1.05ZM833.0 101.3h1.05v2.8h-1.05ZM834.0 101.3h1.05v2.8h-1.05ZM840.0 101.3h1.05v2.8h-1.05ZM844.0 101.3h1.05v2.8h-1.05Z" fill="#000"/>
<rect x="314.4" y="98" width="3.6" height="220" fill="#f6f21c"/>
<path d="M321 95.4H323.2V92.6L324.2 91.2H325.6L326.4 92.6V95.4H327.1V316.6H321Z" fill="#f6f21c"/>
<rect x="314.4" y="309.5" width="12.7" height="7.2" fill="#f6f21c"/>
<rect x="318" y="94.6" width="3" height="213.6" fill="#000"/>
<rect x="327.1" y="96.4" width="9" height="3" fill="#f6f21c"/>
<rect x="558" y="98" width="3.1" height="220" fill="#f6f21c"/>
<rect x="562.3" y="97" width="2.7" height="219.5" fill="#f6f21c"/>
<rect x="566.6" y="93" width="3.4" height="224" fill="#d0c440"/>
<rect x="558" y="309.5" width="9" height="7" fill="#f6f21c"/>
<rect x="561.1" y="96" width="1.2" height="212" fill="#141200"/>
<rect x="565" y="96" width="1.6" height="212" fill="#141200"/>
<path d="M27 350.8H848V355.8H27ZM27.0 355.6h1.05v2.4h-1.05ZM28.0 348.6h1.05v2.4h-1.05ZM28.0 355.6h1.05v2.4h-1.05ZM29.0 348.6h1.05v2.4h-1.05ZM30.0 348.6h1.05v2.4h-1.05ZM30.0 355.6h1.05v2.8h-1.05ZM32.0 355.6h1.05v1.7h-1.05ZM33.0 348.6h1.05v2.4h-1.05ZM33.0 355.6h1.05v2.4h-1.05ZM34.0 355.6h1.05v1.7h-1.05ZM35.0 348.2h1.05v2.8h-1.05ZM35.0 355.6h1.05v2.4h-1.05ZM38.0 348.2h1.05v2.8h-1.05ZM40.0 348.6h1.05v2.4h-1.05ZM41.0 349.3h1.05v1.7h-1.05ZM42.0 355.6h1.05v1.7h-1.05ZM43.0 355.6h1.05v1.7h-1.05ZM44.0 355.6h1.05v2.8h-1.05ZM45.0 348.6h1.05v2.4h-1.05ZM46.0 348.6h1.05v2.4h-1.05ZM46.0 355.6h1.05v2.4h-1.05ZM49.0 348.6h1.05v2.4h-1.05ZM49.0 355.6h1.05v2.8h-1.05ZM50.0 348.6h1.05v2.4h-1.05ZM50.0 355.6h1.05v2.4h-1.05ZM51.0 348.6h1.05v2.4h-1.05ZM51.0 355.6h1.05v2.8h-1.05ZM52.0 355.6h1.05v1.7h-1.05ZM56.0 348.2h1.05v2.8h-1.05ZM56.0 355.6h1.05v2.4h-1.05ZM57.0 348.6h1.05v2.4h-1.05ZM57.0 355.6h1.05v2.4h-1.05ZM58.0 355.6h1.05v2.4h-1.05ZM59.0 348.2h1.05v2.8h-1.05ZM59.0 355.6h1.05v2.4h-1.05ZM63.0 349.3h1.05v1.7h-1.05ZM65.0 355.6h1.05v2.4h-1.05ZM66.0 349.3h1.05v1.7h-1.05ZM68.0 348.6h1.05v2.4h-1.05ZM69.0 355.6h1.05v2.4h-1.05ZM70.0 355.6h1.05v1.7h-1.05ZM72.0 348.2h1.05v2.8h-1.05ZM73.0 355.6h1.05v2.8h-1.05ZM74.0 349.3h1.05v1.7h-1.05ZM74.0 355.6h1.05v2.8h-1.05ZM75.0 348.6h1.05v2.4h-1.05ZM76.0 348.2h1.05v2.8h-1.05ZM78.0 349.3h1.05v1.7h-1.05ZM80.0 355.6h1.05v2.4h-1.05ZM80.0 345.6h1.05v5.4h-1.05ZM81.0 355.6h1.05v1.7h-1.05ZM82.0 349.3h1.05v1.7h-1.05ZM83.0 349.3h1.05v1.7h-1.05ZM83.0 355.6h1.05v2.4h-1.05ZM84.0 355.6h1.05v2.8h-1.05ZM85.0 355.6h1.05v2.4h-1.05ZM85.0 355.6h1.05v4.2h-1.05ZM87.0 355.6h1.05v2.8h-1.05ZM89.0 349.3h1.05v1.7h-1.05ZM89.0 355.6h1.05v2.4h-1.05ZM90.0 349.3h1.05v1.7h-1.05ZM90.0 355.6h1.05v2.4h-1.05ZM91.0 348.6h1.05v2.4h-1.05ZM92.0 355.6h1.05v2.4h-1.05ZM93.0 355.6h1.05v2.8h-1.05ZM95.0 348.2h1.05v2.8h-1.05ZM95.0 355.6h1.05v1.7h-1.05ZM99.0 355.6h1.05v2.4h-1.05ZM102.0 348.6h1.05v2.4h-1.05ZM103.0 349.3h1.05v1.7h-1.05ZM103.0 355.6h1.05v1.7h-1.05ZM104.0 348.6h1.05v2.4h-1.05ZM104.0 355.6h1.05v1.7h-1.05ZM104.0 346.8h1.05v4.2h-1.05ZM105.0 348.6h1.05v2.4h-1.05ZM106.0 348.6h1.05v2.4h-1.05ZM107.0 348.6h1.05v2.4h-1.05ZM107.0 355.6h1.05v2.4h-1.05ZM110.0 348.6h1.05v2.4h-1.05ZM110.0 355.6h1.05v2.8h-1.05ZM111.0 349.3h1.05v1.7h-1.05ZM112.0 348.6h1.05v2.4h-1.05ZM113.0 348.6h1.05v2.4h-1.05ZM113.0 355.6h1.05v1.7h-1.05ZM114.0 348.6h1.05v2.4h-1.05ZM114.0 355.6h1.05v2.4h-1.05ZM115.0 348.6h1.05v2.4h-1.05ZM117.0 355.6h1.05v1.7h-1.05ZM118.0 348.2h1.05v2.8h-1.05ZM118.0 355.6h1.05v2.4h-1.05ZM119.0 348.6h1.05v2.4h-1.05ZM120.0 348.6h1.05v2.4h-1.05ZM120.0 355.6h1.05v2.4h-1.05ZM121.0 348.6h1.05v2.4h-1.05ZM123.0 348.6h1.05v2.4h-1.05ZM123.0 355.6h1.05v4.2h-1.05ZM125.0 355.6h1.05v2.4h-1.05ZM130.0 348.6h1.05v2.4h-1.05ZM130.0 355.6h1.05v2.4h-1.05ZM131.0 349.3h1.05v1.7h-1.05ZM134.0 355.6h1.05v2.4h-1.05ZM135.0 355.6h1.05v2.4h-1.05ZM136.0 348.6h1.05v2.4h-1.05ZM136.0 355.6h1.05v2.4h-1.05ZM137.0 355.6h1.05v2.4h-1.05ZM138.0 349.3h1.05v1.7h-1.05ZM139.0 348.6h1.05v2.4h-1.05ZM141.0 348.6h1.05v2.4h-1.05ZM141.0 355.6h1.05v1.7h-1.05ZM142.0 348.6h1.05v2.4h-1.05ZM145.0 348.6h1.05v2.4h-1.05ZM146.0 348.6h1.05v2.4h-1.05ZM146.0 355.6h1.05v2.4h-1.05ZM147.0 355.6h1.05v2.4h-1.05ZM148.0 355.6h1.05v1.7h-1.05ZM149.0 348.6h1.05v2.4h-1.05ZM150.0 355.6h1.05v2.4h-1.05ZM151.0 355.6h1.05v1.7h-1.05ZM152.0 355.6h1.05v1.7h-1.05ZM154.0 355.6h1.05v2.4h-1.05ZM156.0 348.6h1.05v2.4h-1.05ZM156.0 355.6h1.05v2.4h-1.05ZM157.0 355.6h1.05v2.4h-1.05ZM158.0 355.6h1.05v2.4h-1.05ZM159.0 348.2h1.05v2.8h-1.05ZM162.0 355.6h1.05v2.8h-1.05ZM165.0 355.6h1.05v2.4h-1.05ZM166.0 348.6h1.05v2.4h-1.05ZM167.0 348.6h1.05v2.4h-1.05ZM167.0 355.6h1.05v2.8h-1.05ZM168.0 349.3h1.05v1.7h-1.05ZM168.0 355.6h1.05v2.8h-1.05ZM168.0 346.8h1.05v4.2h-1.05ZM169.0 348.2h1.05v2.8h-1.05ZM169.0 355.6h1.05v2.4h-1.05ZM171.0 355.6h1.05v2.4h-1.05ZM172.0 348.2h1.05v2.8h-1.05ZM173.0 348.6h1.05v2.4h-1.05ZM174.0 348.6h1.05v2.4h-1.05ZM175.0 348.6h1.05v2.4h-1.05ZM175.0 355.6h1.05v2.4h-1.05ZM176.0 348.2h1.05v2.8h-1.05ZM177.0 355.6h1.05v2.4h-1.05ZM178.0 348.6h1.05v2.4h-1.05ZM178.0 355.6h1.05v5.4h-1.05ZM179.0 355.6h1.05v2.8h-1.05ZM180.0 348.2h1.05v2.8h-1.05ZM181.0 348.2h1.05v2.8h-1.05ZM181.0 355.6h1.05v2.4h-1.05ZM183.0 355.6h1.05v2.8h-1.05ZM184.0 348.6h1.05v2.4h-1.05ZM185.0 348.6h1.05v2.4h-1.05ZM186.0 348.2h1.05v2.8h-1.05ZM187.0 355.6h1.05v2.4h-1.05ZM189.0 355.6h1.05v1.7h-1.05ZM191.0 348.6h1.05v2.4h-1.05ZM191.0 355.6h1.05v1.7h-1.05ZM192.0 355.6h1.05v2.8h-1.05ZM193.0 348.6h1.05v2.4h-1.05ZM193.0 355.6h1.05v2.4h-1.05ZM193.0 347.6h1.05v3.4h-1.05ZM195.0 348.6h1.05v2.4h-1.05ZM195.0 355.6h1.05v1.7h-1.05ZM198.0 349.3h1.05v1.7h-1.05ZM198.0 355.6h1.05v1.7h-1.05ZM199.0 355.6h1.05v2.4h-1.05ZM201.0 348.6h1.05v2.4h-1.05ZM202.0 355.6h1.05v2.4h-1.05ZM204.0 355.6h1.05v5.4h-1.05ZM206.0 348.6h1.05v2.4h-1.05ZM207.0 348.2h1.05v2.8h-1.05ZM209.0 348.2h1.05v2.8h-1.05ZM210.0 349.3h1.05v1.7h-1.05ZM211.0 348.6h1.05v2.4h-1.05ZM213.0 355.6h1.05v1.7h-1.05ZM214.0 355.6h1.05v2.8h-1.05ZM215.0 348.6h1.05v2.4h-1.05ZM217.0 355.6h1.05v2.4h-1.05ZM218.0 355.6h1.05v2.4h-1.05ZM219.0 349.3h1.05v1.7h-1.05ZM220.0 348.2h1.05v2.8h-1.05ZM220.0 355.6h1.05v2.4h-1.05ZM221.0 349.3h1.05v1.7h-1.05ZM222.0 355.6h1.05v2.4h-1.05ZM224.0 349.3h1.05v1.7h-1.05ZM225.0 348.6h1.05v2.4h-1.05ZM225.0 355.6h1.05v2.4h-1.05ZM225.0 355.6h1.05v3.4h-1.05ZM226.0 348.6h1.05v2.4h-1.05ZM227.0 348.6h1.05v2.4h-1.05ZM228.0 355.6h1.05v1.7h-1.05ZM230.0 355.6h1.05v1.7h-1.05ZM233.0 348.2h1.05v2.8h-1.05ZM234.0 355.6h1.05v2.4h-1.05ZM235.0 355.6h1.05v2.4h-1.05ZM237.0 348.6h1.05v2.4h-1.05ZM238.0 348.2h1.05v2.8h-1.05ZM240.0 349.3h1.05v1.7h-1.05ZM240.0 355.6h1.05v1.7h-1.05ZM243.0 355.6h1.05v2.8h-1.05ZM246.0 355.6h1.05v2.8h-1.05ZM247.0 349.3h1.05v1.7h-1.05ZM247.0 355.6h1.05v2.8h-1.05ZM251.0 355.6h1.05v2.4h-1.05ZM252.0 355.6h1.05v1.7h-1.05ZM253.0 355.6h1.05v1.7h-1.05ZM254.0 355.6h1.05v2.4h-1.05ZM255.0 348.6h1.05v2.4h-1.05ZM255.0 346.8h1.05v4.2h-1.05ZM256.0 348.2h1.05v2.8h-1.05ZM257.0 348.6h1.05v2.4h-1.05ZM258.0 348.6h1.05v2.4h-1.05ZM259.0 348.6h1.05v2.4h-1.05ZM259.0 355.6h1.05v2.4h-1.05ZM260.0 349.3h1.05v1.7h-1.05ZM262.0 355.6h1.05v2.8h-1.05ZM263.0 348.6h1.05v2.4h-1.05ZM264.0 348.6h1.05v2.4h-1.05ZM264.0 355.6h1.05v2.4h-1.05ZM265.0 355.6h1.05v2.8h-1.05ZM266.0 348.6h1.05v2.4h-1.05ZM267.0 348.6h1.05v2.4h-1.05ZM267.0 355.6h1.05v1.7h-1.05ZM269.0 348.6h1.05v2.4h-1.05ZM270.0 348.2h1.05v2.8h-1.05ZM271.0 355.6h1.05v2.4h-1.05ZM274.0 346.8h1.05v4.2h-1.05ZM275.0 348.6h1.05v2.4h-1.05ZM275.0 355.6h1.05v2.4h-1.05ZM276.0 349.3h1.05v1.7h-1.05ZM277.0 349.3h1.05v1.7h-1.05ZM278.0 348.6h1.05v2.4h-1.05ZM280.0 349.3h1.05v1.7h-1.05ZM281.0 348.2h1.05v2.8h-1.05ZM281.0 355.6h1.05v2.4h-1.05ZM282.0 355.6h1.05v1.7h-1.05ZM283.0 355.6h1.05v1.7h-1.05ZM284.0 355.6h1.05v2.4h-1.05ZM285.0 355.6h1.05v2.4h-1.05ZM286.0 348.2h1.05v2.8h-1.05ZM287.0 348.6h1.05v2.4h-1.05ZM289.0 348.6h1.05v2.4h-1.05ZM290.0 348.6h1.05v2.4h-1.05ZM291.0 348.6h1.05v2.4h-1.05ZM292.0 349.3h1.05v1.7h-1.05ZM295.0 348.6h1.05v2.4h-1.05ZM296.0 348.2h1.05v2.8h-1.05ZM296.0 355.6h1.05v1.7h-1.05ZM297.0 348.6h1.05v2.4h-1.05ZM299.0 355.6h1.05v1.7h-1.05ZM300.0 348.6h1.05v2.4h-1.05ZM300.0 355.6h1.05v2.8h-1.05ZM301.0 355.6h1.05v1.7h-1.05ZM302.0 349.3h1.05v1.7h-1.05ZM303.0 348.6h1.05v2.4h-1.05ZM304.0 348.6h1.05v2.4h-1.05ZM307.0 355.6h1.05v1.7h-1.05ZM308.0 349.3h1.05v1.7h-1.05ZM309.0 348.2h1.05v2.8h-1.05ZM309.0 355.6h1.05v2.4h-1.05ZM311.0 348.2h1.05v2.8h-1.05ZM311.0 355.6h1.05v2.8h-1.05ZM312.0 348.2h1.05v2.8h-1.05ZM312.0 355.6h1.05v1.7h-1.05ZM313.0 349.3h1.05v1.7h-1.05ZM314.0 349.3h1.05v1.7h-1.05ZM314.0 355.6h1.05v2.4h-1.05ZM315.0 349.3h1.05v1.7h-1.05ZM316.0 348.2h1.05v2.8h-1.05ZM317.0 348.6h1.05v2.4h-1.05ZM318.0 348.6h1.05v2.4h-1.05ZM320.0 348.6h1.05v2.4h-1.05ZM320.0 355.6h1.05v2.8h-1.05ZM321.0 355.6h1.05v2.4h-1.05ZM322.0 348.6h1.05v2.4h-1.05ZM322.0 355.6h1.05v1.7h-1.05ZM323.0 349.3h1.05v1.7h-1.05ZM324.0 348.6h1.05v2.4h-1.05ZM325.0 355.6h1.05v1.7h-1.05ZM327.0 348.6h1.05v2.4h-1.05ZM328.0 348.6h1.05v2.4h-1.05ZM329.0 348.6h1.05v2.4h-1.05ZM329.0 355.6h1.05v2.4h-1.05ZM330.0 348.6h1.05v2.4h-1.05ZM331.0 348.6h1.05v2.4h-1.05ZM332.0 348.2h1.05v2.8h-1.05ZM333.0 355.6h1.05v2.8h-1.05ZM335.0 349.3h1.05v1.7h-1.05ZM336.0 348.6h1.05v2.4h-1.05ZM338.0 355.6h1.05v2.4h-1.05ZM339.0 355.6h1.05v2.4h-1.05ZM341.0 355.6h1.05v2.4h-1.05ZM343.0 348.2h1.05v2.8h-1.05ZM345.0 348.6h1.05v2.4h-1.05ZM345.0 355.6h1.05v2.4h-1.05ZM346.0 348.6h1.05v2.4h-1.05ZM346.0 355.6h1.05v2.4h-1.05ZM348.0 348.6h1.05v2.4h-1.05ZM348.0 355.6h1.05v2.4h-1.05ZM351.0 355.6h1.05v2.4h-1.05ZM352.0 355.6h1.05v1.7h-1.05ZM353.0 355.6h1.05v2.4h-1.05ZM354.0 348.2h1.05v2.8h-1.05ZM354.0 355.6h1.05v2.4h-1.05ZM355.0 348.6h1.05v2.4h-1.05ZM356.0 348.6h1.05v2.4h-1.05ZM357.0 355.6h1.05v2.4h-1.05ZM358.0 348.2h1.05v2.8h-1.05ZM358.0 355.6h1.05v2.4h-1.05ZM359.0 349.3h1.05v1.7h-1.05ZM359.0 355.6h1.05v2.4h-1.05ZM360.0 348.6h1.05v2.4h-1.05ZM361.0 355.6h1.05v2.8h-1.05ZM363.0 348.6h1.05v2.4h-1.05ZM364.0 348.6h1.05v2.4h-1.05ZM364.0 355.6h1.05v2.4h-1.05ZM365.0 348.6h1.05v2.4h-1.05ZM366.0 355.6h1.05v1.7h-1.05ZM368.0 347.6h1.05v3.4h-1.05ZM369.0 355.6h1.05v2.4h-1.05ZM370.0 348.2h1.05v2.8h-1.05ZM371.0 348.6h1.05v2.4h-1.05ZM372.0 355.6h1.05v2.8h-1.05ZM374.0 348.6h1.05v2.4h-1.05ZM376.0 349.3h1.05v1.7h-1.05ZM376.0 355.6h1.05v2.4h-1.05ZM377.0 348.2h1.05v2.8h-1.05ZM377.0 355.6h1.05v2.4h-1.05ZM378.0 355.6h1.05v1.7h-1.05ZM380.0 355.6h1.05v2.4h-1.05ZM381.0 348.2h1.05v2.8h-1.05ZM382.0 348.6h1.05v2.4h-1.05ZM383.0 348.2h1.05v2.8h-1.05ZM383.0 347.6h1.05v3.4h-1.05ZM387.0 348.2h1.05v2.8h-1.05ZM388.0 348.6h1.05v2.4h-1.05ZM388.0 355.6h1.05v2.8h-1.05ZM389.0 348.2h1.05v2.8h-1.05ZM390.0 348.2h1.05v2.8h-1.05ZM391.0 348.2h1.05v2.8h-1.05ZM392.0 349.3h1.05v1.7h-1.05ZM392.0 355.6h1.05v2.8h-1.05ZM394.0 348.6h1.05v2.4h-1.05ZM394.0 355.6h1.05v2.4h-1.05ZM394.0 355.6h1.05v5.4h-1.05ZM398.0 349.3h1.05v1.7h-1.05ZM399.0 348.2h1.05v2.8h-1.05ZM401.0 348.6h1.05v2.4h-1.05ZM402.0 355.6h1.05v3.4h-1.05ZM403.0 348.2h1.05v2.8h-1.05ZM403.0 355.6h1.05v2.4h-1.05ZM404.0 355.6h1.05v2.4h-1.05ZM406.0 348.6h1.05v2.4h-1.05ZM407.0 348.2h1.05v2.8h-1.05ZM407.0 355.6h1.05v2.8h-1.05ZM408.0 348.6h1.05v2.4h-1.05ZM408.0 355.6h1.05v1.7h-1.05ZM409.0 348.2h1.05v2.8h-1.05ZM410.0 348.2h1.05v2.8h-1.05ZM411.0 348.2h1.05v2.8h-1.05ZM411.0 355.6h1.05v2.4h-1.05ZM412.0 348.6h1.05v2.4h-1.05ZM415.0 349.3h1.05v1.7h-1.05ZM415.0 355.6h1.05v2.8h-1.05ZM416.0 348.6h1.05v2.4h-1.05ZM417.0 348.2h1.05v2.8h-1.05ZM419.0 348.6h1.05v2.4h-1.05ZM421.0 348.6h1.05v2.4h-1.05ZM424.0 355.6h1.05v2.4h-1.05ZM425.0 355.6h1.05v2.4h-1.05ZM426.0 348.6h1.05v2.4h-1.05ZM426.0 355.6h1.05v2.4h-1.05ZM427.0 348.6h1.05v2.4h-1.05ZM427.0 355.6h1.05v2.4h-1.05ZM428.0 349.3h1.05v1.7h-1.05ZM430.0 355.6h1.05v1.7h-1.05ZM432.0 349.3h1.05v1.7h-1.05ZM432.0 355.6h1.05v2.8h-1.05ZM433.0 348.6h1.05v2.4h-1.05ZM433.0 355.6h1.05v2.4h-1.05ZM434.0 355.6h1.05v1.7h-1.05ZM435.0 348.6h1.05v2.4h-1.05ZM436.0 348.6h1.05v2.4h-1.05ZM438.0 348.6h1.05v2.4h-1.05ZM438.0 355.6h1.05v2.4h-1.05ZM440.0 355.6h1.05v2.4h-1.05ZM441.0 355.6h1.05v2.8h-1.05ZM444.0 348.6h1.05v2.4h-1.05ZM447.0 348.6h1.05v2.4h-1.05ZM448.0 348.6h1.05v2.4h-1.05ZM448.0 355.6h1.05v1.7h-1.05ZM449.0 349.3h1.05v1.7h-1.05ZM450.0 349.3h1.05v1.7h-1.05ZM451.0 348.6h1.05v2.4h-1.05ZM451.0 355.6h1.05v1.7h-1.05ZM452.0 348.6h1.05v2.4h-1.05ZM452.0 355.6h1.05v2.4h-1.05ZM454.0 348.6h1.05v2.4h-1.05ZM454.0 355.6h1.05v1.7h-1.05ZM454.0 347.6h1.05v3.4h-1.05ZM455.0 355.6h1.05v1.7h-1.05ZM455.0 355.6h1.05v5.4h-1.05ZM456.0 348.6h1.05v2.4h-1.05ZM458.0 348.6h1.05v2.4h-1.05ZM458.0 355.6h1.05v2.4h-1.05ZM459.0 348.6h1.05v2.4h-1.05ZM461.0 348.2h1.05v2.8h-1.05ZM463.0 355.6h1.05v2.4h-1.05ZM465.0 349.3h1.05v1.7h-1.05ZM466.0 348.6h1.05v2.4h-1.05ZM467.0 349.3h1.05v1.7h-1.05ZM467.0 355.6h1.05v2.4h-1.05ZM469.0 349.3h1.05v1.7h-1.05ZM470.0 348.6h1.05v2.4h-1.05ZM471.0 349.3h1.05v1.7h-1.05ZM471.0 355.6h1.05v2.4h-1.05ZM472.0 349.3h1.05v1.7h-1.05ZM472.0 355.6h1.05v2.4h-1.05ZM473.0 348.6h1.05v2.4h-1.05ZM474.0 348.6h1.05v2.4h-1.05ZM475.0 348.2h1.05v2.8h-1.05ZM475.0 355.6h1.05v5.4h-1.05ZM477.0 348.6h1.05v2.4h-1.05ZM478.0 348.2h1.05v2.8h-1.05ZM479.0 355.6h1.05v2.4h-1.05ZM480.0 348.2h1.05v2.8h-1.05ZM480.0 355.6h1.05v2.4h-1.05ZM481.0 348.6h1.05v2.4h-1.05ZM481.0 355.6h1.05v2.4h-1.05ZM481.0 345.6h1.05v5.4h-1.05ZM483.0 355.6h1.05v2.4h-1.05ZM485.0 355.6h1.05v2.4h-1.05ZM486.0 349.3h1.05v1.7h-1.05ZM486.0 355.6h1.05v2.4h-1.05ZM489.0 355.6h1.05v1.7h-1.05ZM490.0 348.6h1.05v2.4h-1.05ZM490.0 355.6h1.05v2.4h-1.05ZM491.0 348.6h1.05v2.4h-1.05ZM492.0 355.6h1.05v1.7h-1.05ZM493.0 355.6h1.05v2.4h-1.05ZM493.0 355.6h1.05v3.4h-1.05ZM494.0 355.6h1.05v2.4h-1.05ZM495.0 355.6h1.05v2.4h-1.05ZM496.0 348.6h1.05v2.4h-1.05ZM496.0 355.6h1.05v2.4h-1.05ZM497.0 355.6h1.05v2.4h-1.05ZM497.0 346.8h1.05v4.2h-1.05ZM498.0 355.6h1.05v2.4h-1.05ZM499.0 349.3h1.05v1.7h-1.05ZM499.0 355.6h1.05v1.7h-1.05ZM499.0 346.8h1.05v4.2h-1.05ZM500.0 349.3h1.05v1.7h-1.05ZM501.0 348.6h1.05v2.4h-1.05ZM503.0 349.3h1.05v1.7h-1.05ZM504.0 348.6h1.05v2.4h-1.05ZM506.0 348.6h1.05v2.4h-1.05ZM506.0 355.6h1.05v2.4h-1.05ZM507.0 355.6h1.05v1.7h-1.05ZM508.0 355.6h1.05v2.4h-1.05ZM510.0 348.6h1.05v2.4h-1.05ZM510.0 355.6h1.05v2.4h-1.05ZM511.0 355.6h1.05v1.7h-1.05ZM512.0 349.3h1.05v1.7h-1.05ZM512.0 355.6h1.05v2.8h-1.05ZM513.0 348.6h1.05v2.4h-1.05ZM514.0 348.6h1.05v2.4h-1.05ZM514.0 355.6h1.05v2.4h-1.05ZM518.0 348.6h1.05v2.4h-1.05ZM519.0 355.6h1.05v2.4h-1.05ZM520.0 355.6h1.05v2.8h-1.05ZM521.0 355.6h1.05v2.4h-1.05ZM523.0 355.6h1.05v2.8h-1.05ZM524.0 355.6h1.05v2.8h-1.05ZM526.0 348.6h1.05v2.4h-1.05ZM526.0 355.6h1.05v2.4h-1.05ZM527.0 355.6h1.05v1.7h-1.05ZM530.0 349.3h1.05v1.7h-1.05ZM530.0 355.6h1.05v1.7h-1.05ZM531.0 348.6h1.05v2.4h-1.05ZM532.0 355.6h1.05v2.4h-1.05ZM533.0 355.6h1.05v2.4h-1.05ZM535.0 355.6h1.05v2.4h-1.05ZM536.0 355.6h1.05v2.4h-1.05ZM537.0 348.6h1.05v2.4h-1.05ZM538.0 355.6h1.05v2.4h-1.05ZM539.0 355.6h1.05v1.7h-1.05ZM544.0 348.6h1.05v2.4h-1.05ZM545.0 348.6h1.05v2.4h-1.05ZM546.0 348.6h1.05v2.4h-1.05ZM546.0 355.6h1.05v1.7h-1.05ZM547.0 348.2h1.05v2.8h-1.05ZM547.0 355.6h1.05v1.7h-1.05ZM548.0 348.6h1.05v2.4h-1.05ZM548.0 355.6h1.05v2.4h-1.05ZM549.0 355.6h1.05v1.7h-1.05ZM550.0 355.6h1.05v2.8h-1.05ZM551.0 355.6h1.05v2.4h-1.05ZM551.0 355.6h1.05v4.2h-1.05ZM552.0 348.6h1.05v2.4h-1.05ZM552.0 355.6h1.05v2.4h-1.05ZM553.0 348.6h1.05v2.4h-1.05ZM555.0 349.3h1.05v1.7h-1.05ZM555.0 355.6h1.05v2.4h-1.05ZM556.0 348.6h1.05v2.4h-1.05ZM556.0 355.6h1.05v1.7h-1.05ZM557.0 348.6h1.05v2.4h-1.05ZM557.0 355.6h1.05v2.4h-1.05ZM558.0 348.2h1.05v2.8h-1.05ZM561.0 348.2h1.05v2.8h-1.05ZM564.0 348.6h1.05v2.4h-1.05ZM564.0 355.6h1.05v2.4h-1.05ZM566.0 348.6h1.05v2.4h-1.05ZM569.0 348.6h1.05v2.4h-1.05ZM570.0 355.6h1.05v2.4h-1.05ZM571.0 348.6h1.05v2.4h-1.05ZM575.0 355.6h1.05v2.8h-1.05ZM576.0 355.6h1.05v2.4h-1.05ZM577.0 355.6h1.05v2.4h-1.05ZM578.0 348.6h1.05v2.4h-1.05ZM579.0 349.3h1.05v1.7h-1.05ZM580.0 348.2h1.05v2.8h-1.05ZM582.0 348.6h1.05v2.4h-1.05ZM582.0 355.6h1.05v2.4h-1.05ZM583.0 355.6h1.05v2.4h-1.05ZM584.0 348.6h1.05v2.4h-1.05ZM584.0 355.6h1.05v2.8h-1.05ZM585.0 348.2h1.05v2.8h-1.05ZM585.0 355.6h1.05v2.4h-1.05ZM586.0 355.6h1.05v2.4h-1.05ZM587.0 349.3h1.05v1.7h-1.05ZM587.0 355.6h1.05v2.8h-1.05ZM588.0 355.6h1.05v2.4h-1.05ZM590.0 348.6h1.05v2.4h-1.05ZM591.0 349.3h1.05v1.7h-1.05ZM591.0 355.6h1.05v2.4h-1.05ZM591.0 346.8h1.05v4.2h-1.05ZM592.0 348.6h1.05v2.4h-1.05ZM594.0 348.6h1.05v2.4h-1.05ZM594.0 355.6h1.05v1.7h-1.05ZM595.0 348.2h1.05v2.8h-1.05ZM596.0 348.2h1.05v2.8h-1.05ZM599.0 348.6h1.05v2.4h-1.05ZM600.0 348.6h1.05v2.4h-1.05ZM600.0 355.6h1.05v2.4h-1.05ZM601.0 348.2h1.05v2.8h-1.05ZM602.0 349.3h1.05v1.7h-1.05ZM603.0 349.3h1.05v1.7h-1.05ZM603.0 355.6h1.05v1.7h-1.05ZM604.0 349.3h1.05v1.7h-1.05ZM604.0 355.6h1.05v1.7h-1.05ZM605.0 349.3h1.05v1.7h-1.05ZM606.0 349.3h1.05v1.7h-1.05ZM608.0 348.6h1.05v2.4h-1.05ZM608.0 355.6h1.05v2.4h-1.05ZM611.0 355.6h1.05v1.7h-1.05ZM614.0 348.6h1.05v2.4h-1.05ZM614.0 355.6h1.05v2.8h-1.05ZM615.0 348.6h1.05v2.4h-1.05ZM616.0 348.6h1.05v2.4h-1.05ZM616.0 355.6h1.05v2.4h-1.05ZM617.0 348.6h1.05v2.4h-1.05ZM619.0 348.6h1.05v2.4h-1.05ZM619.0 355.6h1.05v2.4h-1.05ZM620.0 348.2h1.05v2.8h-1.05ZM621.0 348.2h1.05v2.8h-1.05ZM621.0 355.6h1.05v2.4h-1.05ZM622.0 355.6h1.05v2.8h-1.05ZM623.0 349.3h1.05v1.7h-1.05ZM624.0 348.6h1.05v2.4h-1.05ZM625.0 348.6h1.05v2.4h-1.05ZM625.0 355.6h1.05v1.7h-1.05ZM626.0 348.6h1.05v2.4h-1.05ZM626.0 355.6h1.05v2.4h-1.05ZM627.0 349.3h1.05v1.7h-1.05ZM627.0 355.6h1.05v2.4h-1.05ZM628.0 355.6h1.05v2.4h-1.05ZM629.0 355.6h1.05v2.8h-1.05ZM632.0 348.6h1.05v2.4h-1.05ZM633.0 348.6h1.05v2.4h-1.05ZM633.0 355.6h1.05v2.4h-1.05ZM634.0 348.6h1.05v2.4h-1.05ZM635.0 348.6h1.05v2.4h-1.05ZM635.0 355.6h1.05v2.4h-1.05ZM636.0 355.6h1.05v2.4h-1.05ZM637.0 349.3h1.05v1.7h-1.05ZM639.0 355.6h1.05v2.4h-1.05ZM640.0 355.6h1.05v2.8h-1.05ZM641.0 348.6h1.05v2.4h-1.05ZM641.0 355.6h1.05v2.4h-1.05ZM642.0 348.6h1.05v2.4h-1.05ZM645.0 349.3h1.05v1.7h-1.05ZM645.0 355.6h1.05v1.7h-1.05ZM646.0 348.6h1.05v2.4h-1.05ZM647.0 355.6h1.05v2.8h-1.05ZM648.0 348.2h1.05v2.8h-1.05ZM649.0 348.2h1.05v2.8h-1.05ZM649.0 355.6h1.05v2.4h-1.05ZM650.0 348.6h1.05v2.4h-1.05ZM651.0 348.6h1.05v2.4h-1.05ZM652.0 348.6h1.05v2.4h-1.05ZM653.0 348.6h1.05v2.4h-1.05ZM654.0 348.6h1.05v2.4h-1.05ZM655.0 349.3h1.05v1.7h-1.05ZM656.0 348.2h1.05v2.8h-1.05ZM657.0 348.6h1.05v2.4h-1.05ZM658.0 348.6h1.05v2.4h-1.05ZM659.0 355.6h1.05v2.8h-1.05ZM660.0 348.6h1.05v2.4h-1.05ZM660.0 355.6h1.05v2.4h-1.05ZM662.0 348.6h1.05v2.4h-1.05ZM663.0 355.6h1.05v1.7h-1.05ZM664.0 348.2h1.05v2.8h-1.05ZM665.0 355.6h1.05v2.8h-1.05ZM667.0 355.6h1.05v2.4h-1.05ZM668.0 355.6h1.05v2.8h-1.05ZM671.0 355.6h1.05v2.8h-1.05ZM672.0 355.6h1.05v2.8h-1.05ZM675.0 345.6h1.05v5.4h-1.05ZM676.0 348.6h1.05v2.4h-1.05ZM677.0 349.3h1.05v1.7h-1.05ZM679.0 348.6h1.05v2.4h-1.05ZM680.0 348.6h1.05v2.4h-1.05ZM681.0 348.2h1.05v2.8h-1.05ZM684.0 348.6h1.05v2.4h-1.05ZM685.0 355.6h1.05v1.7h-1.05ZM686.0 348.6h1.05v2.4h-1.05ZM686.0 355.6h1.05v2.4h-1.05ZM687.0 348.6h1.05v2.4h-1.05ZM687.0 355.6h1.05v1.7h-1.05ZM692.0 348.6h1.05v2.4h-1.05ZM692.0 355.6h1.05v2.4h-1.05ZM693.0 348.6h1.05v2.4h-1.05ZM693.0 355.6h1.05v1.7h-1.05ZM694.0 355.6h1.05v1.7h-1.05ZM697.0 348.6h1.05v2.4h-1.05ZM698.0 355.6h1.05v2.4h-1.05ZM699.0 348.6h1.05v2.4h-1.05ZM699.0 355.6h1.05v1.7h-1.05ZM702.0 355.6h1.05v2.8h-1.05ZM705.0 348.6h1.05v2.4h-1.05ZM705.0 355.6h1.05v2.4h-1.05ZM706.0 355.6h1.05v3.4h-1.05ZM707.0 348.2h1.05v2.8h-1.05ZM708.0 355.6h1.05v2.8h-1.05ZM709.0 348.6h1.05v2.4h-1.05ZM710.0 348.6h1.05v2.4h-1.05ZM710.0 355.6h1.05v2.4h-1.05ZM710.0 355.6h1.05v3.4h-1.05ZM711.0 348.2h1.05v2.8h-1.05ZM712.0 349.3h1.05v1.7h-1.05ZM713.0 347.6h1.05v3.4h-1.05ZM717.0 349.3h1.05v1.7h-1.05ZM717.0 355.6h1.05v2.4h-1.05ZM719.0 348.2h1.05v2.8h-1.05ZM720.0 349.3h1.05v1.7h-1.05ZM720.0 355.6h1.05v2.4h-1.05ZM721.0 355.6h1.05v2.8h-1.05ZM722.0 355.6h1.05v2.4h-1.05ZM723.0 355.6h1.05v4.2h-1.05ZM725.0 348.6h1.05v2.4h-1.05ZM726.0 348.2h1.05v2.8h-1.05ZM728.0 355.6h1.05v2.4h-1.05ZM729.0 348.6h1.05v2.4h-1.05ZM729.0 355.6h1.05v1.7h-1.05ZM730.0 355.6h1.05v2.4h-1.05ZM732.0 348.6h1.05v2.4h-1.05ZM732.0 355.6h1.05v2.4h-1.05ZM733.0 348.6h1.05v2.4h-1.05ZM733.0 355.6h1.05v2.8h-1.05ZM734.0 355.6h1.05v2.4h-1.05ZM737.0 355.6h1.05v2.8h-1.05ZM739.0 346.8h1.05v4.2h-1.05ZM741.0 355.6h1.05v2.4h-1.05ZM742.0 348.6h1.05v2.4h-1.05ZM742.0 355.6h1.05v2.4h-1.05ZM742.0 355.6h1.05v5.4h-1.05ZM743.0 355.6h1.05v2.4h-1.05ZM744.0 348.2h1.05v2.8h-1.05ZM745.0 348.2h1.05v2.8h-1.05ZM746.0 348.6h1.05v2.4h-1.05ZM746.0 355.6h1.05v2.4h-1.05ZM748.0 355.6h1.05v5.4h-1.05ZM751.0 355.6h1.05v2.8h-1.05ZM752.0 348.2h1.05v2.8h-1.05ZM752.0 355.6h1.05v2.4h-1.05ZM753.0 348.6h1.05v2.4h-1.05ZM753.0 355.6h1.05v1.7h-1.05ZM754.0 348.2h1.05v2.8h-1.05ZM754.0 355.6h1.05v2.8h-1.05ZM755.0 355.6h1.05v1.7h-1.05ZM756.0 355.6h1.05v2.4h-1.05ZM760.0 348.6h1.05v2.4h-1.05ZM760.0 355.6h1.05v2.4h-1.05ZM761.0 355.6h1.05v2.8h-1.05ZM762.0 349.3h1.05v1.7h-1.05ZM762.0 355.6h1.05v2.8h-1.05ZM765.0 355.6h1.05v2.4h-1.05ZM765.0 345.6h1.05v5.4h-1.05ZM766.0 348.6h1.05v2.4h-1.05ZM766.0 355.6h1.05v1.7h-1.05ZM767.0 355.6h1.05v2.4h-1.05ZM768.0 348.6h1.05v2.4h-1.05ZM768.0 355.6h1.05v2.4h-1.05ZM769.0 349.3h1.05v1.7h-1.05ZM770.0 348.6h1.05v2.4h-1.05ZM771.0 355.6h1.05v1.7h-1.05ZM772.0 355.6h1.05v2.8h-1.05ZM774.0 349.3h1.05v1.7h-1.05ZM774.0 355.6h1.05v2.4h-1.05ZM776.0 349.3h1.05v1.7h-1.05ZM777.0 355.6h1.05v1.7h-1.05ZM778.0 348.6h1.05v2.4h-1.05ZM779.0 348.6h1.05v2.4h-1.05ZM779.0 355.6h1.05v2.8h-1.05ZM781.0 348.6h1.05v2.4h-1.05ZM781.0 355.6h1.05v2.4h-1.05ZM782.0 355.6h1.05v1.7h-1.05ZM784.0 348.6h1.05v2.4h-1.05ZM786.0 348.6h1.05v2.4h-1.05ZM788.0 355.6h1.05v1.7h-1.05ZM790.0 348.6h1.05v2.4h-1.05ZM790.0 346.8h1.05v4.2h-1.05ZM791.0 349.3h1.05v1.7h-1.05ZM792.0 348.6h1.05v2.4h-1.05ZM793.0 348.6h1.05v2.4h-1.05ZM799.0 355.6h1.05v2.4h-1.05ZM800.0 355.6h1.05v2.4h-1.05ZM801.0 348.6h1.05v2.4h-1.05ZM801.0 355.6h1.05v2.8h-1.05ZM803.0 348.6h1.05v2.4h-1.05ZM804.0 348.6h1.05v2.4h-1.05ZM806.0 349.3h1.05v1.7h-1.05ZM807.0 348.6h1.05v2.4h-1.05ZM809.0 355.6h1.05v2.8h-1.05ZM812.0 355.6h1.05v1.7h-1.05ZM813.0 348.6h1.05v2.4h-1.05ZM813.0 355.6h1.05v2.4h-1.05ZM816.0 349.3h1.05v1.7h-1.05ZM817.0 348.6h1.05v2.4h-1.05ZM817.0 355.6h1.05v2.8h-1.05ZM818.0 348.6h1.05v2.4h-1.05ZM818.0 355.6h1.05v2.8h-1.05ZM819.0 355.6h1.05v1.7h-1.05ZM820.0 349.3h1.05v1.7h-1.05ZM820.0 355.6h1.05v1.7h-1.05ZM820.0 347.6h1.05v3.4h-1.05ZM821.0 355.6h1.05v2.4h-1.05ZM822.0 348.6h1.05v2.4h-1.05ZM822.0 355.6h1.05v1.7h-1.05ZM824.0 348.2h1.05v2.8h-1.05ZM824.0 355.6h1.05v2.4h-1.05ZM825.0 355.6h1.05v2.4h-1.05ZM826.0 348.6h1.05v2.4h-1.05ZM826.0 355.6h1.05v2.8h-1.05ZM827.0 349.3h1.05v1.7h-1.05ZM827.0 355.6h1.05v2.4h-1.05ZM828.0 355.6h1.05v2.4h-1.05ZM829.0 355.6h1.05v1.7h-1.05ZM830.0 348.2h1.05v2.8h-1.05ZM831.0 348.6h1.05v2.4h-1.05ZM831.0 355.6h1.05v2.4h-1.05ZM832.0 355.6h1.05v2.8h-1.05ZM833.0 349.3h1.05v1.7h-1.05ZM833.0 355.6h1.05v2.4h-1.05ZM834.0 355.6h1.05v2.4h-1.05ZM835.0 355.6h1.05v2.4h-1.05ZM837.0 348.6h1.05v2.4h-1.05ZM839.0 348.6h1.05v2.4h-1.05ZM839.0 355.6h1.05v5.4h-1.05ZM840.0 348.2h1.05v2.8h-1.05ZM841.0 348.6h1.05v2.4h-1.05ZM841.0 355.6h1.05v2.4h-1.05ZM842.0 348.6h1.05v2.4h-1.05ZM842.0 355.6h1.05v2.4h-1.05ZM843.0 348.6h1.05v2.4h-1.05ZM843.0 355.6h1.05v2.4h-1.05ZM844.0 355.6h1.05v2.4h-1.05ZM845.0 348.2h1.05v2.8h-1.05Z" fill="#14eaf2"/>
<rect x="431.2" y="351" width="9.3" height="124" fill="#14eaf2"/>
<rect x="677.6" y="351" width="9.1" height="123.5" fill="#14eaf2"/>
<path d="M6.3 305.3H17.6L26 314.5L17.6 323.9H6.3Z" fill="#f4f020"/>
<path d="M8 311.8L11.2 308H13.4V321.7H10.5V312L8 314.4Z" fill="#3a2c00"/>
<path d="M6.3 476.8H18.4L26 485.8L18.4 494.8H6.3Z" fill="#22e6f6"/>
<text x="12.3" y="492.3" font-size="16.5" font-weight="bold" fill="#102a86" stroke="#102a86" stroke-width=".4" text-anchor="middle">2</text>
<path d="M831.5 442.3L848.5 432V452.6Z" fill="#1cf0e2"/>
<path d="M386.4 44.6H476V62.4L473 65.4H438.6L432 74.2L425.4 65.4H389.4L386.4 62.4Z" fill="#3c6cf4" stroke="#86a6fa" stroke-width="1"/>
<rect x="386" y="43.6" width="90.4" height="1.8" fill="#a4b8fa"/>
<text x="392.4" y="63.2" font-size="22.8" fill="#c0f0f8" stroke="#3c6cf4" stroke-width=".45" paint-order="fill stroke" textLength="78.2" lengthAdjust="spacingAndGlyphs">2.370ms</text>
<rect x="26.5" y="11.9" width="28" height="25.7" fill="#000" stroke="#b4b0f0" stroke-width="1.3"/>
<path d="M27.6 19.0 L28.0 18.3 L28.5 17.6 L28.9 17.0 L29.4 16.5 L29.8 16.0 L30.2 15.7 L30.7 15.6 L31.1 15.6 L31.6 15.7 L32.0 15.9 L32.4 16.3 L32.9 16.8 L33.3 17.4 L33.8 18.1 L34.2 18.8 L34.6 19.5 L35.1 20.2 L35.5 20.8 L36.0 21.4 L36.4 21.8 L36.8 22.2 L37.3 22.4 L37.7 22.4 L38.2 22.4 L38.6 22.2 L39.0 21.8 L39.5 21.3 L39.9 20.8 L40.4 20.1 L40.8 19.4 L41.2 18.7 L41.7 18.0 L42.1 17.4 L42.6 16.8 L43.0 16.3 L43.4 15.9 L43.9 15.7 L44.3 15.6 L44.8 15.6 L45.2 15.8 L45.6 16.1 L46.1 16.5 L46.5 17.1 L47.0 17.7 L47.4 18.4 L47.8 19.1 L48.3 19.8 L48.7 20.4 L49.2 21.0 L49.6 21.6 L50.0 22.0 L50.5 22.3 L50.9 22.4 L51.4 22.4 L51.8 22.3 L52.2 22.0 L52.7 21.6 L53.1 21.1 L53.6 20.5 L54.0 19.9" stroke="#f0ec40" stroke-width="3.2" fill="none" stroke-linecap="round" stroke-linejoin="round"/>
<path d="M27.6 30.6 L28.0 29.9 L28.5 29.2 L28.9 28.6 L29.4 28.1 L29.8 27.6 L30.2 27.3 L30.7 27.2 L31.1 27.2 L31.6 27.3 L32.0 27.5 L32.4 27.9 L32.9 28.4 L33.3 29.0 L33.8 29.7 L34.2 30.4 L34.6 31.1 L35.1 31.8 L35.5 32.4 L36.0 33.0 L36.4 33.4 L36.8 33.8 L37.3 34.0 L37.7 34.0 L38.2 34.0 L38.6 33.8 L39.0 33.4 L39.5 32.9 L39.9 32.4 L40.4 31.7 L40.8 31.0 L41.2 30.3 L41.7 29.6 L42.1 29.0 L42.6 28.4 L43.0 27.9 L43.4 27.5 L43.9 27.3 L44.3 27.2 L44.8 27.2 L45.2 27.4 L45.6 27.7 L46.1 28.1 L46.5 28.7 L47.0 29.3 L47.4 30.0 L47.8 30.7 L48.3 31.4 L48.7 32.0 L49.2 32.6 L49.6 33.2 L50.0 33.6 L50.5 33.9 L50.9 34.0 L51.4 34.0 L51.8 33.9 L52.2 33.6 L52.7 33.2 L53.1 32.7 L53.6 32.1 L54.0 31.5" stroke="#30d8e8" stroke-width="3.2" fill="none" stroke-linecap="round" stroke-linejoin="round"/>
<rect x="58.7" y="11.9" width="27.8" height="25.7" fill="#000" stroke="#b4b0f0" stroke-width="1.3"/>
<path d="M64 33.2L82 15" stroke="#1c8c2c" stroke-width="4.2" stroke-linecap="round" opacity=".6"/>
<path d="M64 33.2L82 15" stroke="#30e048" stroke-width="2.5" stroke-linecap="round"/>
<rect x="90.7" y="11.9" width="28.2" height="25.7" fill="#000" stroke="#b4b0f0" stroke-width="1.3"/>
<filter id="bl" x="-20%" y="-20%" width="140%" height="140%"><feGaussianBlur stdDeviation=".7"/></filter>
<g filter="url(#bl)"><path d="M101.4 14.4H114.6V23.6H112.4V26.4H109.6V35.6H94.2V25.2H101.4Z" fill="#b4b4ac"/><path d="M104 16H108V22H104ZM97 27.5H100.5V34H97ZM110.5 17V22" fill="#d0d0cc"/><path d="M101.6 24.6H106V28H101.6ZM112 22.6V26" fill="#808078"/></g>
<rect x="123" y="10.6" width="56.4" height="26.8" rx="2.5" fill="#3632ae" stroke="#2222a2" stroke-width="1.4"/>
<path d="M179.4 13V35Q179.4 37.4 177 37.4H126" stroke="#5654b4" stroke-width="1.2" fill="none"/>
<path d="M188.4 33.8H192.6Q193.6 33.8 193.6 32.6V15.6Q193.6 14.3 194.8 14.3H204.6Q206 14.3 206 15.6V32.6Q206 33.8 207 33.8H213.6" stroke="#f4f4f4" stroke-width="2.2" fill="none"/>
<path d="M197 11v6M199.5 11v6M202 11v6M204.4 11v6M189.6 30.4v6.4M191.8 31.4v5M208.4 30.4v6.4M210.6 31.4v5M212.8 30.4v5" stroke="#f4f4f4" stroke-width="1.1" fill="none"/>
<path d="M222 12.6H240V18H234.4V35H227.6V18H222Z" fill="#22e044"/>
<g fill="#4c5274" opacity=".6"><rect x="252" y="24" width="17" height="4" rx="1.5"/><ellipse cx="272.6" cy="25.6" rx="5.6" ry="6.4"/></g>
<path d="M284.2 12.2H308.6V36H287.2L284.2 33Z" fill="none" stroke="#c0c8fc" stroke-width="1.7" stroke-linejoin="round"/>
<path d="M289.2 12.2V22.6H304V12.2" fill="none" stroke="#c0c8fc" stroke-width="1.6"/>
<rect x="291" y="27.6" width="12.4" height="8.4" fill="#c0c8fc"/><rect x="292.4" y="28.8" width="3" height="7.2" fill="#181844"/><rect x="296" y="28.8" width="6.2" height="7.2" fill="#d4f0fc"/>
<g opacity=".55" fill="#5a58a4"><rect x="322" y="12.4" width="13" height="7"/><rect x="319" y="20.6" width="20" height="8"/><rect x="321" y="30" width="16" height="5.4"/></g>
<rect x="348.6" y="9" width="1.4" height="32" fill="#1c1a78"/>
<rect x="358" y="12" width="26.2" height="26.2" fill="#000" stroke="#b4b0f0" stroke-width="1.2"/>
<text x="370.6" y="33.3" font-size="23.4" font-weight="bold" fill="#ecf8f2" text-anchor="middle" textLength="18.4" lengthAdjust="spacingAndGlyphs">M</text>
<rect x="390.5" y="12.6" width="127.0" height="25.799999999999997" rx="12.899999999999999" fill="#000" stroke="#10106a" stroke-width="1.8"/>
<text x="418.8" y="34.4" font-size="23.7" fill="#f2f6f6" stroke="#000" stroke-width=".45" paint-order="fill stroke" textLength="45.2" lengthAdjust="spacingAndGlyphs">20.0</text>
<text x="465.2" y="34.4" font-size="20.4" fill="#f2f6f6" stroke="#000" stroke-width=".45" paint-order="fill stroke" textLength="23" lengthAdjust="spacingAndGlyphs">ms</text>
<rect x="525.6" y="12.2" width="143.6" height="25.6" fill="#06060e" stroke="#7470c4" stroke-width="1.2"/>
<path d="M528.0 33.0 L530.2 18.0 L532.5 33.0 L534.8 18.0 L537.0 33.0" stroke="#186074" stroke-width="1.3" fill="none" stroke-linejoin="round" stroke-linecap="round"/>
<path d="M657.0 33.0 L659.5 18.0 L662.0 33.0 L664.5 18.0 L667.0 33.0" stroke="#186074" stroke-width="1.3" fill="none" stroke-linejoin="round" stroke-linecap="round"/>
<rect x="539.2" y="12.6" width="115" height="25" fill="#000" stroke="#e4602c" stroke-width="2"/>
<path d="M543.0 33.2 L543.5 32.8 L544.0 31.8 L544.5 30.3 L545.0 28.5 L545.5 26.3 L546.0 24.1 L546.5 21.9 L547.0 20.1 L547.5 18.6 L548.0 17.7 L548.5 17.4 L549.0 17.7 L549.5 18.6 L550.0 20.1 L550.5 21.9 L551.0 24.1 L551.5 26.3 L552.0 28.5 L552.5 30.3 L553.0 31.8 L553.5 32.8 L554.0 33.2 L554.5 32.9 L555.0 32.1 L555.5 30.7 L556.0 28.9 L556.5 26.7 L557.0 24.5 L557.5 22.4 L558.0 20.4 L558.5 18.9 L559.0 17.9 L559.5 17.4 L560.0 17.6 L560.5 18.4 L561.0 19.8 L561.5 21.5 L562.0 23.6 L562.5 25.9 L563.0 28.0 L563.5 30.0 L564.0 31.6 L564.5 32.7 L565.0 33.2 L565.5 33.0 L566.0 32.3 L566.5 31.0 L567.0 29.2 L567.5 27.2 L568.0 25.0 L568.5 22.8 L569.0 20.8 L569.5 19.2 L570.0 18.0 L570.5 17.5 L571.0 17.5 L571.5 18.2 L572.0 19.4 L572.5 21.2 L573.0 23.2 L573.5 25.4 L574.0 27.6 L574.5 29.6 L575.0 31.3 L575.5 32.5 L576.0 33.1 L576.5 33.1 L577.0 32.5 L577.5 31.3 L578.0 29.6 L578.5 27.6 L579.0 25.4 L579.5 23.2 L580.0 21.2 L580.5 19.4 L581.0 18.2 L581.5 17.5 L582.0 17.5 L582.5 18.0 L583.0 19.2 L583.5 20.8 L584.0 22.8 L584.5 25.0 L585.0 27.2 L585.5 29.2 L586.0 31.0 L586.5 32.3 L587.0 33.0 L587.5 33.2 L588.0 32.7 L588.5 31.6 L589.0 30.0 L589.5 28.0 L590.0 25.9 L590.5 23.6 L591.0 21.5 L591.5 19.8 L592.0 18.4 L592.5 17.6 L593.0 17.4 L593.5 17.9 L594.0 18.9 L594.5 20.4 L595.0 22.4 L595.5 24.5 L596.0 26.7 L596.5 28.9 L597.0 30.7 L597.5 32.1 L598.0 32.9 L598.5 33.2 L599.0 32.8 L599.5 31.8 L600.0 30.3 L600.5 28.5 L601.0 26.3 L601.5 24.1 L602.0 21.9 L602.5 20.1 L603.0 18.6 L603.5 17.7 L604.0 17.4 L604.5 17.7 L605.0 18.6 L605.5 20.1 L606.0 21.9 L606.5 24.1 L607.0 26.3 L607.5 28.5 L608.0 30.3 L608.5 31.8 L609.0 32.8 L609.5 33.2 L610.0 32.9 L610.5 32.1 L611.0 30.7 L611.5 28.9 L612.0 26.7 L612.5 24.5 L613.0 22.4 L613.5 20.4 L614.0 18.9 L614.5 17.9 L615.0 17.4 L615.5 17.6 L616.0 18.4 L616.5 19.8 L617.0 21.5 L617.5 23.6 L618.0 25.9 L618.5 28.0 L619.0 30.0 L619.5 31.6 L620.0 32.7 L620.5 33.2 L621.0 33.0 L621.5 32.3 L622.0 31.0 L622.5 29.3 L623.0 27.2 L623.5 25.0 L624.0 22.8 L624.5 20.8 L625.0 19.2 L625.5 18.0 L626.0 17.5 L626.5 17.5 L627.0 18.2 L627.5 19.4 L628.0 21.2 L628.5 23.2 L629.0 25.4 L629.5 27.6 L630.0 29.6 L630.5 31.3 L631.0 32.5 L631.5 33.1 L632.0 33.1 L632.5 32.5 L633.0 31.3 L633.5 29.6 L634.0 27.6 L634.5 25.4 L635.0 23.2 L635.5 21.2 L636.0 19.4 L636.5 18.2 L637.0 17.5 L637.5 17.5 L638.0 18.0 L638.5 19.2 L639.0 20.8 L639.5 22.8 L640.0 25.0 L640.5 27.2 L641.0 29.3 L641.5 31.0 L642.0 32.3 L642.5 33.0 L643.0 33.2 L643.5 32.7 L644.0 31.6 L644.5 30.0 L645.0 28.0 L645.5 25.9 L646.0 23.6 L646.5 21.5 L647.0 19.8 L647.5 18.4 L648.0 17.6 L648.5 17.4 L649.0 17.9 L649.5 18.9 L650.0 20.4 L650.5 22.4 L651.0 24.5 L651.5 26.7 L652.0 28.9" stroke="#2cdcf4" stroke-width="2.5" fill="none" stroke-linecap="round" stroke-linejoin="round"/>
<rect x="675.6" y="12.4" width="26.6" height="25.8" fill="#000" stroke="#b4b0f0" stroke-width="1.2"/>
<text x="689" y="33.6" font-size="23.4" font-weight="bold" fill="#eafaf8" text-anchor="middle" textLength="22.4" lengthAdjust="spacingAndGlyphs">W</text>
<rect x="708.5" y="12.6" width="127.5" height="25.799999999999997" rx="12.899999999999999" fill="#000" stroke="#10106a" stroke-width="1.8"/>
<text x="737" y="34.4" font-size="23.7" fill="#f2f6f6" stroke="#000" stroke-width=".45" paint-order="fill stroke" textLength="45.2" lengthAdjust="spacingAndGlyphs">20.0</text>
<text x="783.4" y="34.4" font-size="20.4" fill="#f2f6f6" stroke="#000" stroke-width=".45" paint-order="fill stroke" textLength="23" lengthAdjust="spacingAndGlyphs">ms</text>
<rect x="26.6" y="593.2" width="22.4" height="3.4" fill="#e8e444"/>
<path d="M27.6 600.2H47.6" stroke="#a8a8c4" stroke-width="1.3" stroke-dasharray="3.4 2"/>
<text x="27.200000000000003" y="615.6" font-size="16.8" fill="#d8d8b0" stroke="#d8d8b0" stroke-width=".6" textLength="20.8" lengthAdjust="spacingAndGlyphs">DC</text>
<circle cx="69.3" cy="603.4" r="10.9" fill="#4c389c" stroke="#e0204c" stroke-width="2.7"/>
<text x="69.3" y="610.6" font-size="18" fill="#f6f2e4" stroke="#f6f2e4" stroke-width=".5" text-anchor="middle" textLength="17" lengthAdjust="spacingAndGlyphs">20</text>
<path d="M88.4 600.4H91.80000000000001V595.8H97.0V600.4H101.80000000000001V595.8H107.0V600.4H111.4" stroke="#f2f2b4" stroke-width="2.6" fill="none" stroke-linejoin="round"/>
<path d="M89.4 607H92.80000000000001V611.6H97.4V607H102.2V611.6H106.80000000000001V607H110.4" stroke="#8c90cc" stroke-width="2.3" fill="none" stroke-linejoin="round"/>
<rect x="118.4" y="589.5" width="104.19999999999999" height="27.399999999999977" rx="13.699999999999989" fill="#000" stroke="#10106a" stroke-width="1.8"/>
<text x="143.6" y="613.3" font-size="24" fill="#e6e88c" stroke="#000" stroke-width=".45" paint-order="fill stroke" textLength="55.8" lengthAdjust="spacingAndGlyphs">1.00V</text>
<rect x="227" y="588" width="1.4" height="32" fill="#1c1a78"/>
<rect x="232.2" y="593.2" width="22.4" height="3.4" fill="#3cbcfc"/>
<path d="M233.2 600.2H253.2" stroke="#58a8e8" stroke-width="1.3" stroke-dasharray="3.4 2"/>
<text x="232.79999999999998" y="615.6" font-size="16.8" fill="#50ccfc" stroke="#50ccfc" stroke-width=".6" textLength="20.8" lengthAdjust="spacingAndGlyphs">DC</text>
<circle cx="274.4" cy="604.4" r="10.6" fill="#444488" stroke="#46466e" stroke-width="2.4"/>
<text x="274.4" y="610.6" font-size="17" font-weight="bold" fill="#3c3c74" text-anchor="middle" textLength="16" lengthAdjust="spacingAndGlyphs">20</text>
<path d="M295.8 600.4H299.2V595.8H304.40000000000003V600.4H309.2V595.8H314.40000000000003V600.4H318.8" stroke="#40bcfc" stroke-width="2.6" fill="none" stroke-linejoin="round"/>
<path d="M296.8 607H300.2V611.6H304.8V607H309.6V611.6H314.2V607H317.8" stroke="#8c8cdc" stroke-width="2.3" fill="none" stroke-linejoin="round"/>
<rect x="323.4" y="589.5" width="104.80000000000001" height="27.399999999999977" rx="13.699999999999989" fill="#000" stroke="#10106a" stroke-width="1.8"/>
<text x="347.6" y="613.3" font-size="24" fill="#6ce4e0" stroke="#000" stroke-width=".45" paint-order="fill stroke" textLength="57.2" lengthAdjust="spacingAndGlyphs">2.00V</text>
<rect x="431.8" y="588" width="1.4" height="32" fill="#1c1a78"/>
<text x="460" y="612" font-size="24" fill="#58c4f6" stroke="#3a36b6" stroke-width=".4" paint-order="fill stroke" textLength="35" lengthAdjust="spacingAndGlyphs">CH2</text>
<path d="M501 592.6H507.6L515.8 613.4H523.2" stroke="#f4f8f8" stroke-width="2.5" fill="none" stroke-linejoin="round"/>
<rect x="527" y="589.5" width="99" height="27.399999999999977" rx="13.699999999999989" fill="#000" stroke="#10106a" stroke-width="1.8"/>
<text x="549.4" y="613.1" font-size="24" fill="#9ce8dc" stroke="#000" stroke-width=".45" paint-order="fill stroke" textLength="56.2" lengthAdjust="spacingAndGlyphs">1.36V</text>
<rect x="649.6" y="588" width="1.4" height="32" fill="#1c1a78"/>
<rect x="665.6" y="589.5" width="165.79999999999995" height="27.399999999999977" rx="13.699999999999989" fill="#000" stroke="#10106a" stroke-width="1.8"/>
<text x="694" y="612.9" font-size="24" fill="#90e4d6" stroke="#000" stroke-width=".45" paint-order="fill stroke" textLength="107.8" lengthAdjust="spacingAndGlyphs">25.0000Hz</text>
<rect x="848.4" y="7.6" width="185" height="616" fill="#3a68fa"/>
<rect x="848.4" y="7.6" width="185" height="35.2" fill="#1038c0"/>
<rect x="848.4" y="7.6" width="1.5" height="616" fill="#94a4f6"/>
<rect x="848.4" y="7.4" width="185" height="1.4" fill="#4868d8"/>
<rect x="1033.2" y="7" width="1.6" height="617.6" fill="#06105c"/>
<rect x="848" y="623.2" width="186" height="1.6" fill="#06105c"/>
<text x="885.6" y="34.4" font-size="26.6" fill="#f4fafa" textLength="82.6" lengthAdjust="spacingAndGlyphs">Trigger</text>
<rect x="1003.6" y="11.4" width="26.8" height="26.8" fill="#f2420e"/>
<path d="M1008.4 15.6L1025.8 34M1025.8 15.6L1008.4 34" stroke="#fbeee0" stroke-width="3.4"/>
<path d="M914.5 59.0H860.6L856.4 62.800000000000004V149.2M860.0 153.7H1033.4M980 59.0H1033.4" stroke="#7494fc" stroke-width="1.2" fill="none"/>
<path d="M855.3 62.2V148.6" stroke="#1038c4" stroke-width="1" fill="none" opacity=".35"/>
<path d="M914.5 57.6H860.0L856.0 61.6M856.0 148.2L860.0 152.2H1033.4M980 57.6H1033.4" stroke="#1038c4" stroke-width="1.35" fill="none"/>
<text transform="translate(922.6 63.4) scale(0.85 1)" x="7.4" y="0" font-size="23" fill="#c2f2fa" stroke="#3a68fa" stroke-width="0.3" paint-order="fill stroke" text-anchor="middle">T</text>
<text transform="translate(922.6 63.4) scale(0.98 1)" x="19.1 31.9 44.6" y="0" font-size="23" fill="#c2f2fa" stroke="#3a68fa" stroke-width="0.3" paint-order="fill stroke" text-anchor="middle">ype</text>
<circle cx="868.3" cy="83.7" r="7.9" fill="none" stroke="#d89aa4" stroke-width="1.35"/>
<circle cx="868.3" cy="83.7" r="2" fill="#f0bc94"/>
<text transform="translate(881.3 91.8) scale(0.85 1)" x="7.4" y="0" font-size="23" fill="#d68c92" stroke="#3a68fa" stroke-width="0.3" paint-order="fill stroke" text-anchor="middle">E</text>
<text transform="translate(881.3 91.8) scale(0.98 1)" x="19.1 31.9 44.6" y="0" font-size="23" fill="#d68c92" stroke="#3a68fa" stroke-width="0.3" paint-order="fill stroke" text-anchor="middle">dge</text>
<circle cx="956.6" cy="83.7" r="7.9" fill="none" stroke="#c2f2fa" stroke-width="1.35"/>
<text transform="translate(969.6 91.8) scale(0.85 1)" x="7.4" y="0" font-size="23" fill="#c2f2fa" stroke="#3a68fa" stroke-width="0.3" paint-order="fill stroke" text-anchor="middle">V</text>
<text transform="translate(969.6 91.8) scale(0.98 1)" x="18.2 29.9 42.7 55.5" y="0" font-size="23" fill="#c2f2fa" stroke="#3a68fa" stroke-width="0.3" paint-order="fill stroke" text-anchor="middle">ideo</text>
<circle cx="868.3" cy="113.0" r="7.9" fill="none" stroke="#c2f2fa" stroke-width="1.35"/>
<text transform="translate(881.3 120.2) scale(0.85 1)" x="7.4" y="0" font-size="23" fill="#c2f2fa" stroke="#3a68fa" stroke-width="0.3" paint-order="fill stroke" text-anchor="middle">P</text>
<text transform="translate(881.3 120.2) scale(0.98 1)" x="19.1 30.9 42.7 55.5" y="0" font-size="23" fill="#c2f2fa" stroke="#3a68fa" stroke-width="0.3" paint-order="fill stroke" text-anchor="middle">ulse</text>
<circle cx="956.6" cy="113.0" r="7.9" fill="none" stroke="#c2f2fa" stroke-width="1.35"/>
<text transform="translate(969.6 120.2) scale(0.85 1)" x="7.4" y="0" font-size="23" fill="#c2f2fa" stroke="#3a68fa" stroke-width="0.3" paint-order="fill stroke" text-anchor="middle">S</text>
<text transform="translate(969.6 120.2) scale(0.98 1)" x="18.2 29.9 42.7 55.5" y="0" font-size="23" fill="#c2f2fa" stroke="#3a68fa" stroke-width="0.3" paint-order="fill stroke" text-anchor="middle">lope</text>
<circle cx="868.3" cy="140.7" r="7.9" fill="none" stroke="#c2f2fa" stroke-width="1.35"/>
<text transform="translate(881.3 148.4) scale(0.85 1)" x="7.4 18.4 29.4 40.4" y="0" font-size="23" fill="#c2f2fa" stroke="#3a68fa" stroke-width="0.3" paint-order="fill stroke" text-anchor="middle">0.T.</text>
<circle cx="956.6" cy="140.7" r="7.9" fill="none" stroke="#c2f2fa" stroke-width="1.35"/>
<text transform="translate(969.6 148.4) scale(0.85 1)" x="7.4" y="0" font-size="23" fill="#c2f2fa" stroke="#3a68fa" stroke-width="0.3" paint-order="fill stroke" text-anchor="middle">A</text>
<text transform="translate(969.6 148.4) scale(0.98 1)" x="18.2 29.9 42.7 55.5" y="0" font-size="23" fill="#c2f2fa" stroke="#3a68fa" stroke-width="0.3" paint-order="fill stroke" text-anchor="middle">lter</text>
<path d="M1033.4 169.4H862.6Q857.4 169.4 857.4 174.6V257.6Q857.4 262.8 862.6 262.8H1033.4" stroke="#7868d0" stroke-width="3.2" fill="none" opacity=".8"/>
<path d="M1033.4 168.8H862.6Q857 168.8 857 174.4V257.2Q857 262.6 862.6 262.6H1033.4" stroke="#c46a5c" stroke-width="1.9" fill="none"/>
<rect x="903.6" y="156.8" width="87.6" height="25" rx="11.5" fill="#f8600e"/>
<text transform="translate(910.0 175.4) scale(0.85 1)" x="7.4" y="0" font-size="20.8" fill="#fbe6a6" stroke="#f8600e" stroke-width="0.2" paint-order="fill stroke" text-anchor="middle">S</text>
<text transform="translate(910.0 175.4) scale(0.98 1)" x="19.1 31.9 44.6 57.4 70.2" y="0" font-size="20.8" fill="#fbe6a6" stroke="#f8600e" stroke-width="0.2" paint-order="fill stroke" text-anchor="middle">ource</text>
<circle cx="868.3" cy="194.4" r="7.9" fill="none" stroke="#c2f2fa" stroke-width="1.35"/>
<path d="M909.8 191.0L913.4 187.0H914.0V203.2" stroke="#c2f2fa" stroke-width="1.5" fill="none" stroke-linejoin="miter"/>
<text transform="translate(881.3 203.2) scale(0.85 1)" x="7.4 22.1" y="0" font-size="23" fill="#c2f2fa" stroke="#3a68fa" stroke-width="0.3" paint-order="fill stroke" text-anchor="middle">CH</text>
<circle cx="956.6" cy="194.4" r="7.9" fill="none" stroke="#d89aa4" stroke-width="1.35"/>
<circle cx="956.6" cy="194.4" r="2" fill="#f0bc94"/>
<text transform="translate(969.6 203.2) scale(0.85 1)" x="7.4 22.1 36.8" y="0" font-size="23" fill="#d68c92" stroke="#3a68fa" stroke-width="0.3" paint-order="fill stroke" text-anchor="middle">CH2</text>
<circle cx="868.3" cy="221.7" r="7.9" fill="none" stroke="#c2f2fa" stroke-width="1.35"/>
<text transform="translate(881.3 229.9) scale(0.85 1)" x="7.4 22.1 36.8" y="0" font-size="23" fill="#c2f2fa" stroke="#3a68fa" stroke-width="0.3" paint-order="fill stroke" text-anchor="middle">EXT</text>
<circle cx="956.6" cy="221.7" r="7.9" fill="none" stroke="#c2f2fa" stroke-width="1.35"/>
<text transform="translate(969.6 229.9) scale(0.85 1)" x="7.6 22.7 37.9 53.0 68.2" y="0" font-size="23" fill="#c2f2fa" stroke="#3a68fa" stroke-width="0.3" paint-order="fill stroke" text-anchor="middle">EXT/5</text>
<circle cx="868.3" cy="248.5" r="7.9" fill="none" stroke="#c2f2fa" stroke-width="1.35"/>
<text transform="translate(881.3 256.6) scale(0.85 1)" x="7.4 22.1 36.8 51.5" y="0" font-size="23" fill="#c2f2fa" stroke="#3a68fa" stroke-width="0.3" paint-order="fill stroke" text-anchor="middle">AC50</text>
<path d="M908.8 279.4H860.6L856.4 283.20000000000005V351.2M860.0 355.7H1033.4M984.4 279.4H1033.4" stroke="#7494fc" stroke-width="1.2" fill="none"/>
<path d="M855.3 282.6V350.59999999999997" stroke="#1038c4" stroke-width="1" fill="none" opacity=".35"/>
<path d="M908.8 278H860.0L856.0 282.0M856.0 350.2L860.0 354.2H1033.4M984.4 278H1033.4" stroke="#1038c4" stroke-width="1.35" fill="none"/>
<text transform="translate(916.2 284.0) scale(0.85 1)" x="7.4" y="0" font-size="23" fill="#c2f2fa" stroke="#3a68fa" stroke-width="0.3" paint-order="fill stroke" text-anchor="middle">S</text>
<text transform="translate(916.2 284.0) scale(0.98 1)" x="18.2 29.9 42.7 55.5" y="0" font-size="23" fill="#c2f2fa" stroke="#3a68fa" stroke-width="0.3" paint-order="fill stroke" text-anchor="middle">lope</text>
<circle cx="868.3" cy="306.9" r="7.9" fill="none" stroke="#c2f2fa" stroke-width="1.35"/>
<path d="M882.4 316.2H889L896.4 295.6H904.2" stroke="#c2f2fa" stroke-width="2.3" fill="none"/>
<text transform="translate(910.1 314.2) scale(0.85 1)" x="7.4" y="0" font-size="23" fill="#c2f2fa" stroke="#3a68fa" stroke-width="0.3" paint-order="fill stroke" text-anchor="middle">R</text>
<text transform="translate(910.1 314.2) scale(0.98 1)" x="18.2 29.9 41.7 53.5 66.3" y="0" font-size="23" fill="#c2f2fa" stroke="#3a68fa" stroke-width="0.3" paint-order="fill stroke" text-anchor="middle">ising</text>
<circle cx="868.3" cy="339.4" r="7.9" fill="none" stroke="#d89aa4" stroke-width="1.35"/>
<circle cx="868.3" cy="339.4" r="2" fill="#f0bc94"/>
<path d="M882.6 326.8H889.8L896.6 348.2H904" stroke="#d8f4f8" stroke-width="2.3" fill="none"/>
<text transform="translate(909.8 347.0) scale(0.85 1)" x="7.0" y="0" font-size="23" fill="#d68c92" stroke="#3a68fa" stroke-width="0.3" paint-order="fill stroke" text-anchor="middle">F</text>
<text transform="translate(909.8 347.0) scale(0.98 1)" x="18.3 29.5 39.9 50.2 61.4 73.6" y="0" font-size="23" fill="#d68c92" stroke="#3a68fa" stroke-width="0.3" paint-order="fill stroke" text-anchor="middle">alling</text>
<path d="M914.9 372.2H860.6L856.4 376.00000000000006V443.6M860.0 448.1H1033.4M979.6 372.2H1033.4" stroke="#7494fc" stroke-width="1.2" fill="none"/>
<path d="M855.3 375.40000000000003V443.0" stroke="#1038c4" stroke-width="1" fill="none" opacity=".35"/>
<path d="M914.9 370.8H860.0L856.0 374.8M856.0 442.6L860.0 446.6H1033.4M979.6 370.8H1033.4" stroke="#1038c4" stroke-width="1.35" fill="none"/>
<text transform="translate(922.2 377.2) scale(0.85 1)" x="7.4" y="0" font-size="23" fill="#c2f2fa" stroke="#3a68fa" stroke-width="0.3" paint-order="fill stroke" text-anchor="middle">M</text>
<text transform="translate(922.2 377.2) scale(0.98 1)" x="19.1 31.9 44.6" y="0" font-size="23" fill="#c2f2fa" stroke="#3a68fa" stroke-width="0.3" paint-order="fill stroke" text-anchor="middle">ode</text>
<circle cx="868.3" cy="399" r="7.9" fill="none" stroke="#c2f2fa" stroke-width="1.35"/>
<text transform="translate(881.3 406.4) scale(0.85 1)" x="7.4" y="0" font-size="23" fill="#c2f2fa" stroke="#3a68fa" stroke-width="0.3" paint-order="fill stroke" text-anchor="middle">A</text>
<text transform="translate(881.3 406.4) scale(0.98 1)" x="19.1 31.9 44.6" y="0" font-size="23" fill="#c2f2fa" stroke="#3a68fa" stroke-width="0.3" paint-order="fill stroke" text-anchor="middle">uto</text>
<circle cx="868.3" cy="430.8" r="7.9" fill="none" stroke="#d89aa4" stroke-width="1.35"/>
<circle cx="868.3" cy="430.8" r="2" fill="#f0bc94"/>
<text transform="translate(881.3 438.4) scale(0.85 1)" x="7.4" y="0" font-size="23" fill="#d68c92" stroke="#3a68fa" stroke-width="0.3" paint-order="fill stroke" text-anchor="middle">N</text>
<text transform="translate(881.3 438.4) scale(0.98 1)" x="19.1 31.9 44.6 57.4 69.2" y="0" font-size="23" fill="#d68c92" stroke="#3a68fa" stroke-width="0.3" paint-order="fill stroke" text-anchor="middle">ormal</text>
<path d="M892.9 464.59999999999997H860.6L856.4 468.40000000000003V581.8M860.0 586.3H1033.4M1003 464.59999999999997H1033.4" stroke="#7494fc" stroke-width="1.2" fill="none"/>
<path d="M855.3 467.8V581.1999999999999" stroke="#1038c4" stroke-width="1" fill="none" opacity=".35"/>
<path d="M892.9 463.2H860.0L856.0 467.2M856.0 580.8L860.0 584.8H1033.4M1003 463.2H1033.4" stroke="#1038c4" stroke-width="1.35" fill="none"/>
<text transform="translate(900.0 469.6) scale(0.85 1)" x="7.4" y="0" font-size="23" fill="#c2f2fa" stroke="#3a68fa" stroke-width="0.3" paint-order="fill stroke" text-anchor="middle">C</text>
<text transform="translate(900.0 469.6) scale(0.98 1)" x="19.1 31.9 44.6 56.4 67.2 79.0 91.8" y="0" font-size="23" fill="#c2f2fa" stroke="#3a68fa" stroke-width="0.3" paint-order="fill stroke" text-anchor="middle">oupling</text>
<circle cx="868.3" cy="487.8" r="7.9" fill="none" stroke="#d89aa4" stroke-width="1.35"/>
<circle cx="868.3" cy="487.8" r="2" fill="#f0bc94"/>
<text transform="translate(881.3 495.6) scale(0.85 1)" x="7.4 22.1" y="0" font-size="23" fill="#d68c92" stroke="#3a68fa" stroke-width="0.3" paint-order="fill stroke" text-anchor="middle">DC</text>
<circle cx="956.6" cy="487.8" r="7.9" fill="none" stroke="#c2f2fa" stroke-width="1.35"/>
<text transform="translate(969.6 495.6) scale(0.85 1)" x="7.4 22.1" y="0" font-size="23" fill="#c2f2fa" stroke="#3a68fa" stroke-width="0.3" paint-order="fill stroke" text-anchor="middle">AC</text>
<circle cx="868.3" cy="515.5" r="7.9" fill="none" stroke="#c2f2fa" stroke-width="1.35"/>
<text transform="translate(881.3 523.6) scale(0.85 1)" x="7.4" y="0" font-size="23" fill="#c2f2fa" stroke="#3a68fa" stroke-width="0.3" paint-order="fill stroke" text-anchor="middle">N</text>
<text transform="translate(881.3 523.6) scale(0.98 1)" x="19.1 30.9 42.7 55.5 74.5 87.3 100.1 112.8 125.6 138.3" y="0" font-size="23" fill="#c2f2fa" stroke="#3a68fa" stroke-width="0.3" paint-order="fill stroke" text-anchor="middle">oisereject</text>
<circle cx="868.3" cy="542.7" r="7.9" fill="none" stroke="#c2f2fa" stroke-width="1.35"/>
<text transform="translate(881.3 550.6) scale(0.85 1)" x="7.4 22.1" y="0" font-size="23" fill="#c2f2fa" stroke="#3a68fa" stroke-width="0.3" paint-order="fill stroke" text-anchor="middle">HF</text>
<text transform="translate(881.3 550.6) scale(0.98 1)" x="38.2 51.0 63.7 76.5 89.2 102.0" y="0" font-size="23" fill="#c2f2fa" stroke="#3a68fa" stroke-width="0.3" paint-order="fill stroke" text-anchor="middle">reject</text>
<circle cx="868.3" cy="569.5" r="7.9" fill="none" stroke="#c2f2fa" stroke-width="1.35"/>
<text transform="translate(881.3 577.4) scale(0.85 1)" x="7.4 22.1" y="0" font-size="23" fill="#c2f2fa" stroke="#3a68fa" stroke-width="0.3" paint-order="fill stroke" text-anchor="middle">LF</text>
<text transform="translate(881.3 577.4) scale(0.98 1)" x="38.2 51.0 63.7 76.5 89.2 102.0" y="0" font-size="23" fill="#c2f2fa" stroke="#3a68fa" stroke-width="0.3" paint-order="fill stroke" text-anchor="middle">reject</text>
</svg>
</body></html>
